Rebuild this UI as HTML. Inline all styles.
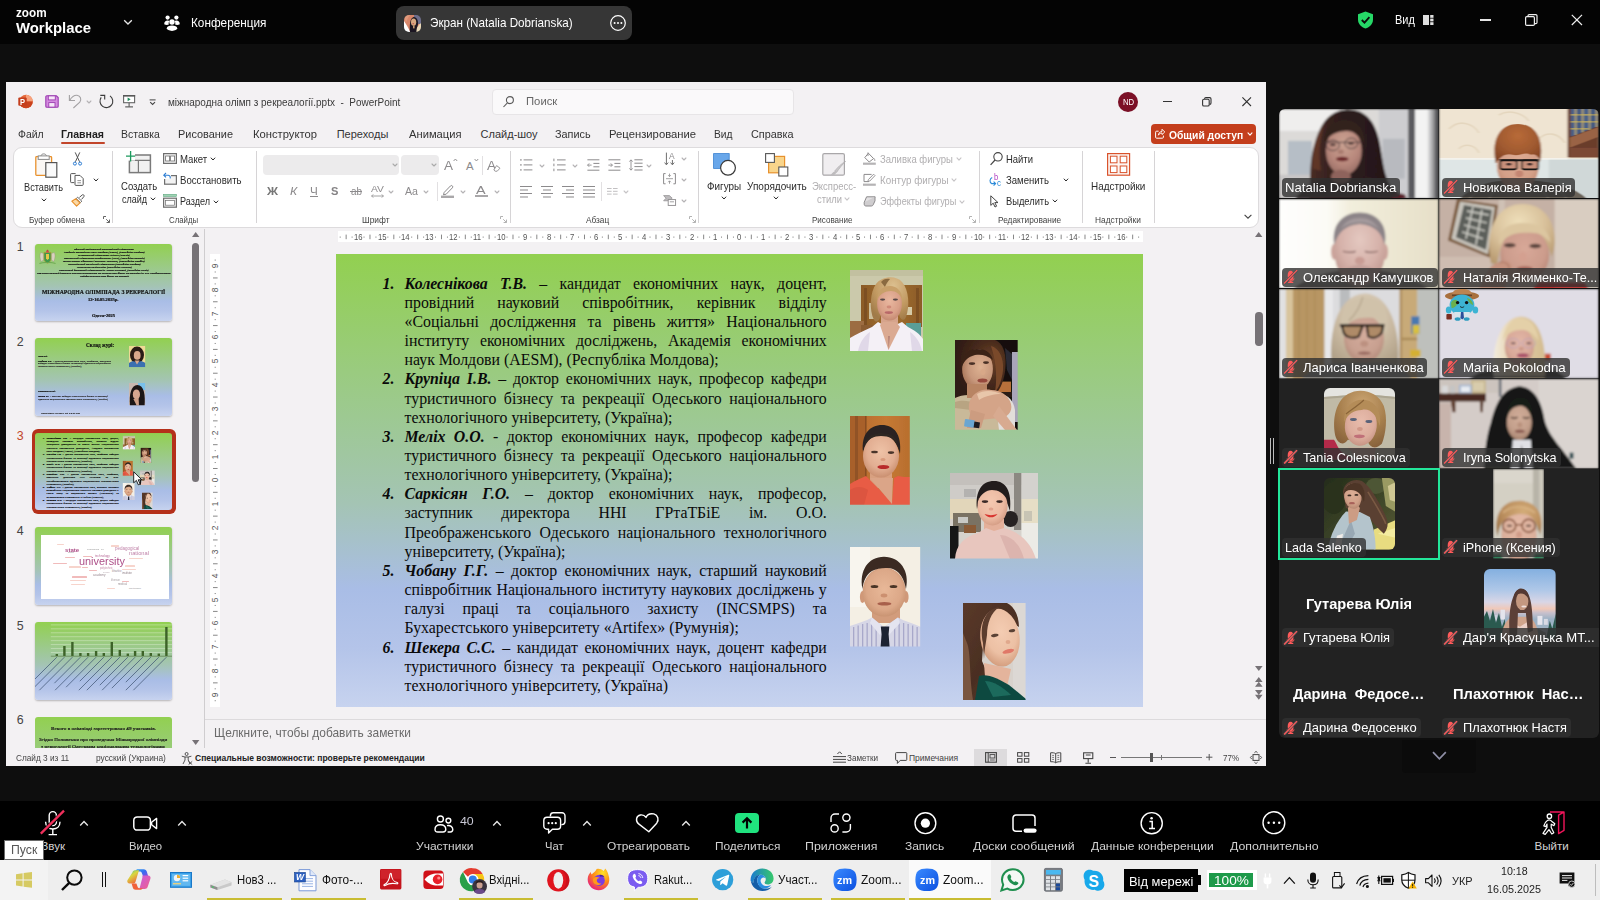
<!DOCTYPE html>
<html lang="ru">
<head>
<meta charset="utf-8">
<title>Zoom Workplace</title>
<style>
*{box-sizing:border-box;margin:0;padding:0}
html,body{width:1600px;height:900px;overflow:hidden;background:#0e0e0e;font-family:"Liberation Sans","DejaVu Sans",sans-serif;}
body{position:relative;color:#fff}
.a{position:absolute;display:block}
.t{position:absolute;display:block;white-space:pre;line-height:1;transform-origin:0 50%}
svg{overflow:visible}
</style>
</head>
<body>
<!-- sec_ztop -->
<div class="a" style="left:0px;top:0px;width:1600px;height:44px;background:#040404;"></div>
<span class="t" style="left:16.00px;top:7px;font-size:12px;font-weight:700;transform:scaleX(0.9767);">zoom</span>
<span class="t" style="left:16.00px;top:20px;font-size:15px;font-weight:700;transform:scaleX(0.9922);">Workplace</span>
<svg class="a" style="left:122px;top:18px;" width="12" height="9" viewBox="0 0 12 9"><polyline points="2.2,2.2 6,6 9.8,2.2" fill="none" stroke="#e8e8e8" stroke-width="1.3"/></svg>
<svg class="a" style="left:164px;top:15px;" width="16" height="16" viewBox="0 0 16 16"><g fill="#fff"><circle cx="3.6" cy="2.6" r="2.1"/><circle cx="12.4" cy="2.6" r="2.1"/><path d="M0.2 9.2c0-2.2 1.4-3.6 3.4-3.6 0.9 0 1.5 0.3 1.9 0.7-0.9 0.8-1.1 2.2-0.6 3.3-1.6 0.6-3.2 0.5-4.7-0.4zM15.8 9.2c0-2.2-1.4-3.6-3.4-3.6-0.9 0-1.5 0.3-1.9 0.7 0.9 0.8 1.1 2.2 0.6 3.3 1.6 0.6 3.2 0.5 4.7-0.4z"/><circle cx="8" cy="7" r="2.7"/><ellipse cx="8" cy="13.2" rx="5.2" ry="2.7"/></g></svg>
<span class="t" style="left:190.50px;top:16px;font-size:13.6px;transform:scaleX(0.8664);">Конференция</span>
<div class="a" style="left:396px;top:6px;width:236px;height:34px;background:#363636;border-radius:8px;"></div>
<svg class="a" style="left:404px;top:14.8px;border-radius:5px;overflow:hidden" width="17.2" height="17.2" viewBox="0 0 17.2 17.2"><defs><filter id="pav"><feGaussianBlur stdDeviation="0.5"/></filter></defs><g filter="url(#pav)"><rect width="17.2" height="17.2" fill="#d8866a"/><path d="M0 6C2 9 4 12 6.4 17.2H0Z" fill="#ffffff"/><path d="M0 0H6C4 3 2.600 5 2 8Z" fill="#e09a7c"/><rect x="10" y="0" width="7.200" height="9" fill="#6e6e8c"/><path d="M17.200 8C14 10 12 14 11 17.200H17.200Z" fill="#e8d8b8"/><path d="M6 17.200C5.400 10 6 3 9.600 2 13.600 2 15 8 13.600 11 12.600 13 12.600 15 12.400 17.200Z" fill="#1a1820"/><ellipse cx="9.600" cy="7.200" rx="2.600" ry="3.600" fill="#d8a880"/><rect x="9" y="10.400" width="1.600" height="3" fill="#c49870"/><ellipse cx="9.200" cy="8.700" rx="0.800" ry="0.450" fill="#b82a3a"/></g></svg>
<span class="t" style="left:429.80px;top:16px;font-size:13.4px;transform:scaleX(0.8719);">Экран (Natalia Dobrianska)</span>
<svg class="a" style="left:610px;top:15px;" width="16" height="16" viewBox="0 0 16 16"><circle cx="8" cy="8" r="7.3" fill="none" stroke="#fff" stroke-width="1.2"/><circle cx="4.6" cy="8" r="1" fill="#fff"/><circle cx="8" cy="8" r="1" fill="#fff"/><circle cx="11.4" cy="8" r="1" fill="#fff"/></svg>
<svg class="a" style="left:1357px;top:11px;" width="17" height="18" viewBox="0 0 17 18"><path d="M8.5 0.4 L16 3.2 V8.5 C16 13 12.6 16.3 8.5 17.6 C4.4 16.3 1 13 1 8.5 V3.2 Z" fill="#26d867"/><polyline points="4.8,9 7.5,11.6 12.4,6.2" fill="none" stroke="#0b0b0b" stroke-width="1.8"/></svg>
<span class="t" style="left:1395.20px;top:13px;font-size:13px;transform:scaleX(0.8419);">Вид</span>
<svg class="a" style="left:1423px;top:15px;" width="11" height="10" viewBox="0 0 11 10"><g fill="#e0e0e0"><rect x="0" y="0" width="6" height="10"/><rect x="7.2" y="0" width="3.3" height="2.8"/><rect x="7.2" y="3.6" width="3.3" height="2.8"/><rect x="7.2" y="7.2" width="3.3" height="2.8"/></g></svg>
<div class="a" style="left:1480px;top:19.4px;width:10.5px;height:1.2px;background:#e6e6e6;"></div>
<svg class="a" style="left:1525px;top:14px;" width="13" height="12" viewBox="0 0 13 12"><rect x="0.6" y="2.6" width="8.8" height="8.8" rx="1.2" fill="none" stroke="#eee" stroke-width="1.2"/><path d="M3 2.6V1.8a1.2 1.2 0 0 1 1.2-1.2h6.6a1.2 1.2 0 0 1 1.2 1.2v6.6a1.2 1.2 0 0 1-1.2 1.2h-1.2" fill="none" stroke="#eee" stroke-width="1.2"/></svg>
<svg class="a" style="left:1571px;top:14px;" width="12" height="12" viewBox="0 0 12 12"><path d="M0.8 0.8L11 11M11 0.8L0.8 11" stroke="#eee" stroke-width="1.2" fill="none"/></svg>
<!-- sec_ppt -->
<div class="a" style="left:6px;top:82px;width:1260px;height:684px;background:#f3f1f3;"></div>
<svg class="a" style="left:18px;top:94px;" width="15" height="15" viewBox="0 0 15 15"><circle cx="8" cy="7.5" r="6.8" fill="#e56a3c"/><path d="M8 0.7A6.8 6.8 0 0 1 14.8 7.5H8Z" fill="#f7a27c"/><path d="M1.2 7.5H14.8A6.8 6.8 0 0 1 8 14.3 6.8 6.8 0 0 1 1.2 7.5Z" fill="#c9421d"/><rect x="0.3" y="3.4" width="8.4" height="8.4" rx="1" fill="#c43e1c"/></svg><span class="t" style="left:20.30px;top:99px;font-size:8.2px;font-weight:700;color:#fff;transform:scaleX(0.9142);">P</span>
<svg class="a" style="left:45px;top:95px;" width="14" height="13" viewBox="0 0 14 13"><path d="M0.8 1.8a1 1 0 0 1 1-1h9.6l1.8 1.8v8.6a1 1 0 0 1-1 1H1.8a1 1 0 0 1-1-1z" fill="#d58ae0" stroke="#9b3eb0" stroke-width="1.1"/><rect x="3.3" y="0.9" width="7" height="4" fill="#f6e7f8" stroke="#9b3eb0" stroke-width="0.9"/><rect x="3.8" y="7.6" width="6.2" height="4.5" fill="#f6e7f8" stroke="#9b3eb0" stroke-width="0.9"/></svg>
<svg class="a" style="left:68px;top:94px;" width="15" height="15" viewBox="0 0 15 15"><path d="M1.4 0.9V6.5H7" fill="none" stroke="#a3a1a3" stroke-width="1.1"/><path d="M1.8 6.1C3.8 2.8 6.6 1 9 1.2 12.5 1.6 13.8 5.4 11.8 8.200L5.400 14" fill="none" stroke="#a3a1a3" stroke-width="1.1"/></svg>
<svg class="a" style="left:84.60px;top:98.60px" width="8" height="6" viewBox="0 0 8 6"><polyline points="2.1,2 4,4 5.9,2" fill="none" stroke="#b5b3b5" stroke-width="1.1" stroke-linecap="round" stroke-linejoin="round"/></svg>
<svg class="a" style="left:99px;top:94px;" width="15" height="15" viewBox="0 0 15 15"><path d="M11 1.900A6.400 6.400 0 1 1 2.200 3.400" fill="none" stroke="#3b3b3b" stroke-width="1.1"/><path d="M1.300 1.400H5.700V5.600" fill="none" stroke="#3b3b3b" stroke-width="1.1"/></svg>
<svg class="a" style="left:123px;top:95px;" width="13" height="13" viewBox="0 0 13 13"><rect x="0.600" y="0.900" width="11" height="6.800" fill="#fff" stroke="#666" stroke-width="1.100"/><path d="M0 0.700H12.200" stroke="#555" stroke-width="1.300"/><path d="M4.600 2.400L7.600 4.300 4.600 6.200Z" fill="#1e8a5a"/><path d="M6.100 7.700V11.600M2.200 11.800H10" stroke="#666" stroke-width="1.200" fill="none"/></svg>
<svg class="a" style="left:148.5px;top:98px;" width="8" height="8" viewBox="0 0 8 8"><path d="M0.600 1.900H6.600" stroke="#444" stroke-width="1"/><polyline points="1.200,4.200 3.600,6.400 6,4.200" fill="none" stroke="#444" stroke-width="1.100"/></svg>
<span class="t" style="left:168.00px;top:97px;font-size:11.5px;color:#3a3a3a;transform:scaleX(0.8673);">міжнародна олімп з рекреалогії.pptx  -  PowerPoint</span>
<div class="a" style="left:492px;top:88.5px;width:301.5px;height:26px;background:#faf9fa;border:1px solid #e7e5e7;border-radius:4px;"></div>
<svg class="a" style="left:503px;top:96px;" width="11" height="11.5" viewBox="0 0 11 11.5"><circle cx="6.9" cy="4.1" r="3.5" fill="none" stroke="#5a5a5a" stroke-width="1.1"/><path d="M4.4 6.8L0.5 11" stroke="#5a5a5a" stroke-width="1.1"/></svg>
<span class="t" style="left:526.30px;top:96px;font-size:11.8px;color:#666;transform:scaleX(0.9573);">Поиск</span>
<div class="a" style="left:1118.2px;top:91.8px;width:19.8px;height:19.8px;background:#7b1026;border-radius:50%;"></div>
<span class="t" style="left:1122.60px;top:98px;font-size:8.6px;color:#fff;transform:scaleX(0.9017);">ND</span>
<div class="a" style="left:1163.2px;top:100.6px;width:9px;height:1.1px;background:#333;"></div>
<svg class="a" style="left:1202px;top:97px;" width="10" height="10" viewBox="0 0 10 10"><rect x="0.6" y="2.2" width="6.6" height="6.8" rx="1.3" fill="none" stroke="#333" stroke-width="1.1"/><path d="M2.6 2V1.9A1.3 1.3 0 0 1 3.9 0.6H7.7A1.3 1.3 0 0 1 9 1.9V6.1A1.3 1.3 0 0 1 7.7 7.4" fill="none" stroke="#333" stroke-width="1.1"/></svg>
<svg class="a" style="left:1241.5px;top:97.2px;" width="9.5" height="9.5" viewBox="0 0 9.5 9.5"><path d="M0.4 0.4L9 9M9 0.4L0.4 9" stroke="#333" stroke-width="1.1"/></svg>
<span class="t" style="left:18.40px;top:129px;font-size:11px;color:#333;transform:scaleX(0.9466);">Файл</span>
<span class="t" style="left:61.20px;top:129px;font-size:11px;font-weight:700;color:#1f1f1f;transform:scaleX(0.9612);">Главная</span>
<span class="t" style="left:120.70px;top:129px;font-size:11px;color:#333;transform:scaleX(0.9515);">Вставка</span>
<span class="t" style="left:178.00px;top:129px;font-size:11px;color:#333;transform:scaleX(0.9928);">Рисование</span>
<span class="t" style="left:252.80px;top:129px;font-size:11px;color:#333;transform:scaleX(1.0204);">Конструктор</span>
<span class="t" style="left:336.70px;top:129px;font-size:11px;color:#333;">Переходы</span>
<span class="t" style="left:408.50px;top:129px;font-size:11px;color:#333;transform:scaleX(1.0167);">Анимация</span>
<span class="t" style="left:480.60px;top:129px;font-size:11px;color:#333;">Слайд-шоу</span>
<span class="t" style="left:555.40px;top:129px;font-size:11px;color:#333;transform:scaleX(0.9863);">Запись</span>
<span class="t" style="left:609.20px;top:129px;font-size:11px;color:#333;transform:scaleX(1.0254);">Рецензирование</span>
<span class="t" style="left:714.40px;top:129px;font-size:11px;color:#333;transform:scaleX(0.9296);">Вид</span>
<span class="t" style="left:751.00px;top:129px;font-size:11px;color:#333;transform:scaleX(0.9872);">Справка</span>
<div class="a" style="left:61.2px;top:142px;width:43.6px;height:2.2px;background:#c2452a;border-radius:1px;"></div>
<div class="a" style="left:1151.3px;top:124px;width:105px;height:19.8px;background:#c43e1c;border-radius:4px;"></div>
<svg class="a" style="left:1155px;top:128px;" width="10" height="11" viewBox="0 0 10 11"><path d="M3.6 3.2H1.6A1 1 0 0 0 0.6 4.2V9.2A1 1 0 0 0 1.6 10.2H7.4A1 1 0 0 0 8.4 9.2V7.6" fill="none" stroke="#fff" stroke-width="1"/><path d="M3.4 7.2C3.6 4.8 5 3.6 7 3.5V1.2L9.8 4 7 6.6V5C5.4 5 4.2 5.6 3.4 7.2Z" fill="none" stroke="#fff" stroke-width="0.9" stroke-linejoin="round"/></svg>
<span class="t" style="left:1168.50px;top:129px;font-size:11.6px;font-weight:700;color:#fff;transform:scaleX(0.8884);">Общий доступ</span>
<svg class="a" style="left:1246.30px;top:131.20px" width="8" height="6" viewBox="0 0 8 6"><polyline points="2,1.9 4,4.1 6,1.9" fill="none" stroke="#fff" stroke-width="1.1" stroke-linecap="round" stroke-linejoin="round"/></svg>
<!-- sec_ribbon -->
<div class="a" style="left:13px;top:146.5px;width:1246px;height:81px;background:#ffffff;border:1px solid #dddbdd;border-radius:9px;"></div>
<svg class="a" style="left:35px;top:153px;" width="23" height="25" viewBox="0 0 23 25"><rect x="1.4" y="4" width="14.8" height="18" fill="#faf7f4"/><path d="M3.6 3.600H1.600A0.800 0.800 0 0 0 0.800 4.400V21.600A0.800 0.800 0 0 0 1.600 22.400H10.600" fill="none" stroke="#e8912d" stroke-width="1.300"/><path d="M13.800 3.600H15.800A0.800 0.800 0 0 1 16.600 4.400V9.400" fill="none" stroke="#e8912d" stroke-width="1.300"/><path d="M6 3C6 0.200 11.400 0.200 11.400 3" fill="#fff" stroke="#8a8a8a" stroke-width="1"/><rect x="3.200" y="2.900" width="11" height="3.500" fill="#fff" stroke="#8a8a8a" stroke-width="1"/><rect x="10.800" y="9.600" width="11" height="14.600" fill="#fafafa" stroke="#555" stroke-width="1.200"/></svg>
<span class="t" style="left:24.00px;top:183px;font-size:10.3px;color:#2b2b2b;transform:scaleX(0.8933);">Вставить</span>
<svg class="a" style="left:39.60px;top:196.60px" width="8" height="6" viewBox="0 0 8 6"><polyline points="2.1,2.0 4,4.0 5.9,2.0" fill="none" stroke="#2b2b2b" stroke-width="1.0" stroke-linecap="round" stroke-linejoin="round"/></svg>
<svg class="a" style="left:72.5px;top:152px;" width="9" height="14" viewBox="0 0 9 14"><path d="M2.2 0.4L6.6 9.8M6.8 0.4L2.4 9.8" stroke="#555" stroke-width="1" fill="none"/><circle cx="1.9" cy="11.6" r="1.5" fill="none" stroke="#2b7cd3" stroke-width="1"/><circle cx="7.1" cy="11.6" r="1.5" fill="none" stroke="#2b7cd3" stroke-width="1"/></svg>
<svg class="a" style="left:70px;top:173px;" width="14" height="13" viewBox="0 0 14 13"><path d="M4.2 9.6H1.4A0.8 0.8 0 0 1 0.6 8.8V1.4A0.8 0.8 0 0 1 1.4 0.6H5.6" fill="none" stroke="#555" stroke-width="1"/><path d="M5 2.4H10L13.2 5.6V11.6A0.8 0.8 0 0 1 12.4 12.4H5.8A0.8 0.8 0 0 1 5 11.6Z" fill="#fff" stroke="#555" stroke-width="1"/><path d="M7.4 7.6H11M7.4 9.8H11" stroke="#777" stroke-width="0.8"/></svg>
<svg class="a" style="left:92.40px;top:177.00px" width="8" height="6" viewBox="0 0 8 6"><polyline points="2.1,2.0 4,4.0 5.9,2.0" fill="none" stroke="#2b2b2b" stroke-width="1.0" stroke-linecap="round" stroke-linejoin="round"/></svg>
<svg class="a" style="left:70.5px;top:193.5px;" width="14" height="13" viewBox="0 0 14 13"><path d="M8.4 3.4L11.4 0.8A1.2 1.2 0 0 1 13 2.4L10.6 5.4" fill="#fff" stroke="#555" stroke-width="1"/><path d="M6.6 3.2L10.8 7.2 9.4 8.6 5.2 4.6Z" fill="#fff" stroke="#555" stroke-width="0.9"/><path d="M4.8 4.8L0.8 7.2 5.6 12.2 9 8.8Z" fill="#fbd9a5" stroke="#e8912d" stroke-width="1.1" stroke-linejoin="round"/></svg>
<span class="t" style="left:29.00px;top:216px;font-size:9px;color:#444;transform:scaleX(0.9124);">Буфер обмена</span>
<svg class="a" style="left:102.7px;top:216px;" width="7" height="7" viewBox="0 0 7 7"><path d="M0.5 3V0.5H3M3.2 3.2L6.3 6.3M6.5 3.6V6.5H3.6" fill="none" stroke="#555" stroke-width="0.9"/></svg>
<div class="a" style="left:112px;top:151px;width:1px;height:72px;background:#d6d4d6;"></div>
<svg class="a" style="left:126px;top:151px;" width="26" height="24" viewBox="0 0 26 24"><rect x="3.4" y="4" width="21" height="17.6" fill="#f1f1f1" stroke="#7a7a7a" stroke-width="1.5"/><path d="M3.4 9.4H24.4M12.4 9.4V21.6" stroke="#7a7a7a" stroke-width="1.2" fill="none"/><rect x="0" y="0" width="9" height="9.6" fill="#fff"/><path d="M4.6 0V10.4M0 5.2H9.2" stroke="#1e9a5e" stroke-width="1.3"/></svg>
<span class="t" style="left:120.60px;top:182px;font-size:10.3px;color:#2b2b2b;transform:scaleX(0.9248);">Создать</span>
<span class="t" style="left:121.90px;top:195px;font-size:10.3px;color:#2b2b2b;transform:scaleX(0.8760);">слайд</span>
<svg class="a" style="left:149.40px;top:196.00px" width="8" height="6" viewBox="0 0 8 6"><polyline points="2.1,2.0 4,4.0 5.9,2.0" fill="none" stroke="#2b2b2b" stroke-width="1.0" stroke-linecap="round" stroke-linejoin="round"/></svg>
<svg class="a" style="left:163px;top:153px;" width="14" height="11" viewBox="0 0 14 11"><rect x="0.6" y="0.6" width="12.8" height="9.8" fill="#f3f3f3" stroke="#6e6e6e" stroke-width="1.2"/><rect x="2.6" y="3" width="4" height="5" fill="#fff" stroke="#6e6e6e" stroke-width="0.8"/><rect x="7.6" y="3" width="4" height="5" fill="#fff" stroke="#6e6e6e" stroke-width="0.8"/></svg>
<span class="t" style="left:180.00px;top:155px;font-size:10.3px;color:#2b2b2b;transform:scaleX(0.9331);">Макет</span>
<svg class="a" style="left:209.20px;top:156.40px" width="8" height="6" viewBox="0 0 8 6"><polyline points="2.1,2.0 4,4.0 5.9,2.0" fill="none" stroke="#2b2b2b" stroke-width="1.0" stroke-linecap="round" stroke-linejoin="round"/></svg>
<svg class="a" style="left:163px;top:172px;" width="14" height="13" viewBox="0 0 14 13"><rect x="1.6" y="3.6" width="11.8" height="8.6" fill="#f3f3f3" stroke="#6e6e6e" stroke-width="1.2"/><rect x="0" y="0" width="8" height="7" fill="#fff"/><path d="M1 3.2H5.2A2 2 0 0 1 7.2 5.2V6.6" fill="none" stroke="#2b7cd3" stroke-width="1.1"/><path d="M3 1L0.8 3.2 3 5.4" fill="none" stroke="#2b7cd3" stroke-width="1.1"/></svg>
<span class="t" style="left:180.40px;top:176px;font-size:10.3px;color:#2b2b2b;transform:scaleX(0.9340);">Восстановить</span>
<svg class="a" style="left:163px;top:194px;" width="14" height="14" viewBox="0 0 14 14"><rect x="0.6" y="0.4" width="12.8" height="2" fill="#9fd3b4" stroke="#5aa67c" stroke-width="0.6"/><rect x="0.6" y="4.2" width="12.8" height="9" fill="#f3f3f3" stroke="#6e6e6e" stroke-width="1.2"/><rect x="2.6" y="6.6" width="8.8" height="4.6" fill="#fff" stroke="#6e6e6e" stroke-width="0.7"/></svg>
<span class="t" style="left:180.00px;top:197px;font-size:10.3px;color:#2b2b2b;transform:scaleX(0.8812);">Раздел</span>
<svg class="a" style="left:212.20px;top:198.60px" width="8" height="6" viewBox="0 0 8 6"><polyline points="2.1,2.0 4,4.0 5.9,2.0" fill="none" stroke="#2b2b2b" stroke-width="1.0" stroke-linecap="round" stroke-linejoin="round"/></svg>
<span class="t" style="left:169.00px;top:216px;font-size:9px;color:#444;transform:scaleX(0.8715);">Слайды</span>
<div class="a" style="left:255.5px;top:151px;width:1px;height:72px;background:#d6d4d6;"></div>
<div class="a" style="left:262.7px;top:155px;width:136.4px;height:19.7px;background:#ecebec;border-radius:4px;"></div>
<svg class="a" style="left:390.60px;top:162.40px" width="8" height="6" viewBox="0 0 8 6"><polyline points="2,2 4,4 6,2" fill="none" stroke="#aaa" stroke-width="1.1" stroke-linecap="round" stroke-linejoin="round"/></svg>
<div class="a" style="left:401px;top:155px;width:37.5px;height:19.7px;background:#ecebec;border-radius:4px;"></div>
<svg class="a" style="left:429.60px;top:162.40px" width="8" height="6" viewBox="0 0 8 6"><polyline points="2,2 4,4 6,2" fill="none" stroke="#aaa" stroke-width="1.1" stroke-linecap="round" stroke-linejoin="round"/></svg>
<span class="t" style="left:444.00px;top:159px;font-size:13.6px;color:#8c8a8c;transform:scaleX(0.9922);">A</span>
<svg class="a" style="left:453px;top:157.5px;" width="5" height="4" viewBox="0 0 5 4"><polyline points="0.6,3 2.4,1 4.2,3" fill="none" stroke="#8c8a8c" stroke-width="0.9"/></svg>
<span class="t" style="left:466.00px;top:161px;font-size:11.4px;color:#8c8a8c;">A</span>
<svg class="a" style="left:473.5px;top:158px;" width="5" height="4" viewBox="0 0 5 4"><polyline points="0.6,1 2.4,3 4.2,1" fill="none" stroke="#8c8a8c" stroke-width="0.9"/></svg>
<div class="a" style="left:482px;top:155.5px;width:1px;height:19.2px;background:#e2e0e2;"></div>
<span class="t" style="left:487.00px;top:159px;font-size:13.6px;color:#8c8a8c;transform:scaleX(0.9922);">A</span>
<svg class="a" style="left:493px;top:165px;" width="8" height="7" viewBox="0 0 8 7"><path d="M3.6 0.6L7 3.2 4.2 6.2H2.2L0.8 5Z" fill="#fff" stroke="#8c8a8c" stroke-width="0.9"/></svg>
<span class="t" style="left:267.00px;top:186px;font-size:11.4px;font-weight:700;color:#777;transform:scaleX(1.0676);">Ж</span>
<span class="t" style="left:289.80px;top:186px;font-size:11.4px;font-style:italic;color:#8c8a8c;transform:scaleX(1.0716);">К</span>
<span class="t" style="left:310.40px;top:186px;font-size:11.4px;color:#8c8a8c;transform:scaleX(1.0266);">Ч</span>
<div class="a" style="left:310.4px;top:195.8px;width:7.8px;height:1px;background:#8c8a8c;"></div>
<span class="t" style="left:331.20px;top:186px;font-size:11.8px;font-weight:700;color:#858385;transform:scaleX(0.9402);">S</span>
<span class="t" style="left:350.60px;top:186px;font-size:10.6px;color:#8c8a8c;transform:scaleX(0.9330);">ab</span>
<div class="a" style="left:350px;top:191.4px;width:12.4px;height:1px;background:#8c8a8c;"></div>
<span class="t" style="left:371.00px;top:184px;font-size:9.6px;color:#8c8a8c;transform:scaleX(1.0749);">AV</span>
<svg class="a" style="left:371px;top:193.5px;" width="13" height="4" viewBox="0 0 13 4"><path d="M0.6 2H12.4M2.2 0.4L0.6 2 2.2 3.6M10.8 0.4L12.4 2 10.8 3.6" fill="none" stroke="#8c8a8c" stroke-width="0.8"/></svg>
<svg class="a" style="left:387.40px;top:189.00px" width="8" height="6" viewBox="0 0 8 6"><polyline points="2.1,2 4,4 5.9,2" fill="none" stroke="#b5b3b5" stroke-width="1.1" stroke-linecap="round" stroke-linejoin="round"/></svg>
<span class="t" style="left:405.20px;top:186px;font-size:11px;color:#8c8a8c;transform:scaleX(0.9662);">Aa</span>
<svg class="a" style="left:421.80px;top:189.00px" width="8" height="6" viewBox="0 0 8 6"><polyline points="2.1,2 4,4 5.9,2" fill="none" stroke="#b5b3b5" stroke-width="1.1" stroke-linecap="round" stroke-linejoin="round"/></svg>
<div class="a" style="left:436.5px;top:182.4px;width:1px;height:18.6px;background:#e2e0e2;"></div>
<svg class="a" style="left:441px;top:184.5px;" width="14" height="13" viewBox="0 0 14 13"><path d="M3.2 7.4L9.4 1A1.3 1.3 0 0 1 11.4 2.8L5.2 9.2 2.4 9.8Z" fill="none" stroke="#8c8a8c" stroke-width="1"/><rect x="0" y="10.6" width="13" height="2.4" fill="#a9a7a9"/></svg>
<svg class="a" style="left:458.90px;top:189.00px" width="8" height="6" viewBox="0 0 8 6"><polyline points="2.1,2 4,4 5.9,2" fill="none" stroke="#b5b3b5" stroke-width="1.1" stroke-linecap="round" stroke-linejoin="round"/></svg>
<span class="t" style="left:476.40px;top:185px;font-size:11.4px;color:#8c8a8c;transform:scaleX(1.2625);">A</span>
<div class="a" style="left:475px;top:195.1px;width:12.8px;height:2.3px;background:#a9a7a9;"></div>
<svg class="a" style="left:492.70px;top:189.00px" width="8" height="6" viewBox="0 0 8 6"><polyline points="2.1,2 4,4 5.9,2" fill="none" stroke="#b5b3b5" stroke-width="1.1" stroke-linecap="round" stroke-linejoin="round"/></svg>
<span class="t" style="left:361.80px;top:216px;font-size:9px;color:#444;transform:scaleX(0.9321);">Шрифт</span>
<svg class="a" style="left:500.2px;top:216px;" width="7" height="7" viewBox="0 0 7 7"><path d="M0.5 3V0.5H3M3.2 3.2L6.3 6.3M6.5 3.6V6.5H3.6" fill="none" stroke="#aaa" stroke-width="0.9"/></svg>
<div class="a" style="left:509.5px;top:151px;width:1px;height:72px;background:#d6d4d6;"></div>
<svg class="a" style="left:520px;top:159px;" width="13" height="12" viewBox="0 0 13 12"><rect x="0.2" y="0.2" width="1.4" height="1.4" fill="#8c8a8c"/><path d="M3.6 0.8999999999999999H12.4" stroke="#8c8a8c" stroke-width="1"/><rect x="0.2" y="5.2" width="1.4" height="1.4" fill="#8c8a8c"/><path d="M3.6 5.9H12.4" stroke="#8c8a8c" stroke-width="1"/><rect x="0.2" y="10.2" width="1.4" height="1.4" fill="#8c8a8c"/><path d="M3.6 10.899999999999999H12.4" stroke="#8c8a8c" stroke-width="1"/></svg>
<svg class="a" style="left:537.60px;top:162.60px" width="8" height="6" viewBox="0 0 8 6"><polyline points="2.1,2 4,4 5.9,2" fill="none" stroke="#b5b3b5" stroke-width="1.1" stroke-linecap="round" stroke-linejoin="round"/></svg>
<svg class="a" style="left:553px;top:159px;" width="13" height="12" viewBox="0 0 13 12"><rect x="0.4" y="-0.39999999999999997" width="1" height="2.6" fill="#8c8a8c"/><path d="M4 0.8999999999999999H12.6" stroke="#8c8a8c" stroke-width="1"/><rect x="0.4" y="4.6000000000000005" width="1" height="2.6" fill="#8c8a8c"/><path d="M4 5.9H12.6" stroke="#8c8a8c" stroke-width="1"/><rect x="0.4" y="9.6" width="1" height="2.6" fill="#8c8a8c"/><path d="M4 10.899999999999999H12.6" stroke="#8c8a8c" stroke-width="1"/></svg>
<svg class="a" style="left:571.20px;top:162.60px" width="8" height="6" viewBox="0 0 8 6"><polyline points="2.1,2 4,4 5.9,2" fill="none" stroke="#b5b3b5" stroke-width="1.1" stroke-linecap="round" stroke-linejoin="round"/></svg>
<svg class="a" style="left:587px;top:159px;" width="13" height="12" viewBox="0 0 13 12"><path d="M0.4 0.8H12.4M6.4 4.4H12.4M6.4 7.8H12.4M0.4 11.2H12.4" stroke="#8c8a8c" stroke-width="1"/><path d="M4.6 6.1H0.6M2.2 4.4L0.6 6.1 2.2 7.8" fill="none" stroke="#8c8a8c" stroke-width="0.9"/></svg>
<svg class="a" style="left:608px;top:159px;" width="13" height="12" viewBox="0 0 13 12"><path d="M0.4 0.8H12.4M6.4 4.4H12.4M6.4 7.8H12.4M0.4 11.2H12.4" stroke="#8c8a8c" stroke-width="1"/><path d="M0.4 6.1H4.4M2.8 4.4L4.4 6.1 2.8 7.8" fill="none" stroke="#8c8a8c" stroke-width="0.9"/></svg>
<svg class="a" style="left:628.5px;top:159px;" width="14" height="12" viewBox="0 0 14 12"><path d="M5.4 0.8H13.6M5.4 4.2H13.6M5.4 7.6H13.6M5.4 11H13.6" stroke="#8c8a8c" stroke-width="1"/><path d="M2 1V11M0.4 2.6L2 0.8 3.6 2.6M0.4 9.4L2 11.2 3.6 9.4" fill="none" stroke="#8c8a8c" stroke-width="0.9"/></svg>
<svg class="a" style="left:645.30px;top:162.60px" width="8" height="6" viewBox="0 0 8 6"><polyline points="2.1,2 4,4 5.9,2" fill="none" stroke="#b5b3b5" stroke-width="1.1" stroke-linecap="round" stroke-linejoin="round"/></svg>
<svg class="a" style="left:664px;top:151.5px;" width="12" height="14" viewBox="0 0 12 14"><path d="M2.4 0.6V12.6M0.6 10.6L2.4 12.8 4.2 10.6M8.4 8V12.6M6.6 10.6L8.4 12.8 10.2 10.6" fill="none" stroke="#6e6e6e" stroke-width="1"/></svg><span class="t" style="left:669.40px;top:152px;font-size:8.6px;color:#8c8a8c;transform:scaleX(0.9763);">A</span>
<svg class="a" style="left:679.70px;top:155.80px" width="8" height="6" viewBox="0 0 8 6"><polyline points="2.1,2 4,4 5.9,2" fill="none" stroke="#b5b3b5" stroke-width="1.1" stroke-linecap="round" stroke-linejoin="round"/></svg>
<svg class="a" style="left:663px;top:173.4px;" width="13" height="11.5" viewBox="0 0 13 11.5"><path d="M2.6 0.6H0.6V10.8H2.6M10.4 0.6H12.4V10.8H10.4" fill="none" stroke="#8c8a8c" stroke-width="1"/><path d="M3 5.7H10M6.5 0.6V3.4M5.2 2.2L6.5 3.6 7.8 2.2M6.5 10.8V8M5.2 9.2L6.5 7.8 7.8 9.2" fill="none" stroke="#8c8a8c" stroke-width="0.8"/></svg>
<svg class="a" style="left:679.70px;top:176.80px" width="8" height="6" viewBox="0 0 8 6"><polyline points="2.1,2 4,4 5.9,2" fill="none" stroke="#b5b3b5" stroke-width="1.1" stroke-linecap="round" stroke-linejoin="round"/></svg>
<svg class="a" style="left:663px;top:195.4px;" width="13" height="11" viewBox="0 0 13 11"><path d="M0.6 0.6H6.4L9.2 3.2 6.4 5.8H0.6L3 3.2Z" fill="#bdbbbd" stroke="#8c8a8c" stroke-width="0.7"/><rect x="5.2" y="4.6" width="7.4" height="5.8" fill="#fff" stroke="#8c8a8c" stroke-width="0.9"/><path d="M6.8 6.8H11" stroke="#8c8a8c" stroke-width="0.8"/></svg>
<svg class="a" style="left:679.70px;top:198.20px" width="8" height="6" viewBox="0 0 8 6"><polyline points="2.1,2 4,4 5.9,2" fill="none" stroke="#b5b3b5" stroke-width="1.1" stroke-linecap="round" stroke-linejoin="round"/></svg>
<svg class="a" style="left:520.4px;top:186px;" width="12.4" height="12" viewBox="0 0 12.4 12"><path d="M0 0.5H12" stroke="#8c8a8c" stroke-width="1"/><path d="M0 4.0H8" stroke="#8c8a8c" stroke-width="1"/><path d="M0 7.5H12" stroke="#8c8a8c" stroke-width="1"/><path d="M0 11.0H8" stroke="#8c8a8c" stroke-width="1"/></svg>
<svg class="a" style="left:541px;top:186px;" width="12.4" height="12" viewBox="0 0 12.4 12"><path d="M0 0.5H12" stroke="#8c8a8c" stroke-width="1"/><path d="M2 4.0H10" stroke="#8c8a8c" stroke-width="1"/><path d="M0 7.5H12" stroke="#8c8a8c" stroke-width="1"/><path d="M2 11.0H10" stroke="#8c8a8c" stroke-width="1"/></svg>
<svg class="a" style="left:562.2px;top:186px;" width="12.4" height="12" viewBox="0 0 12.4 12"><path d="M0 0.5H12" stroke="#8c8a8c" stroke-width="1"/><path d="M4 4.0H12" stroke="#8c8a8c" stroke-width="1"/><path d="M0 7.5H12" stroke="#8c8a8c" stroke-width="1"/><path d="M4 11.0H12" stroke="#8c8a8c" stroke-width="1"/></svg>
<svg class="a" style="left:583.3px;top:186px;" width="12.4" height="12" viewBox="0 0 12.4 12"><path d="M0 0.5H12" stroke="#8c8a8c" stroke-width="1"/><path d="M0 4.0H12" stroke="#8c8a8c" stroke-width="1"/><path d="M0 7.5H12" stroke="#8c8a8c" stroke-width="1"/><path d="M0 11.0H12" stroke="#8c8a8c" stroke-width="1"/></svg>
<div class="a" style="left:600.5px;top:182.4px;width:1px;height:18.6px;background:#e2e0e2;"></div>
<svg class="a" style="left:607px;top:188px;" width="11" height="7" viewBox="0 0 11 7"><path d="M0 0.5H4.6M6 0.5H10.6" stroke="#c2c0c2" stroke-width="1"/><path d="M0 3.3H4.6M6 3.3H10.6" stroke="#c2c0c2" stroke-width="1"/><path d="M0 6.1H4.6M6 6.1H10.6" stroke="#c2c0c2" stroke-width="1"/></svg>
<svg class="a" style="left:622.40px;top:189.00px" width="8" height="6" viewBox="0 0 8 6"><polyline points="2.1,2 4,4 5.9,2" fill="none" stroke="#c6c4c6" stroke-width="1.1" stroke-linecap="round" stroke-linejoin="round"/></svg>
<span class="t" style="left:585.80px;top:216px;font-size:9px;color:#444;transform:scaleX(0.9189);">Абзац</span>
<svg class="a" style="left:689px;top:216px;" width="7" height="7" viewBox="0 0 7 7"><path d="M0.5 3V0.5H3M3.2 3.2L6.3 6.3M6.5 3.6V6.5H3.6" fill="none" stroke="#aaa" stroke-width="0.9"/></svg>
<div class="a" style="left:698.4px;top:151px;width:1px;height:72px;background:#d6d4d6;"></div>
<svg class="a" style="left:713px;top:153px;" width="24" height="24" viewBox="0 0 24 24"><rect x="0.6" y="0.6" width="15.6" height="14.8" fill="#69a7ea" stroke="#3b82d0" stroke-width="0.8"/><circle cx="15" cy="14.8" r="7.4" fill="#fff" stroke="#3a3a3a" stroke-width="1.2"/></svg>
<span class="t" style="left:706.80px;top:182px;font-size:10.3px;color:#2b2b2b;transform:scaleX(0.9632);">Фигуры</span>
<svg class="a" style="left:720.40px;top:195.40px" width="8" height="6" viewBox="0 0 8 6"><polyline points="2.1,2.0 4,4.0 5.9,2.0" fill="none" stroke="#2b2b2b" stroke-width="1.0" stroke-linecap="round" stroke-linejoin="round"/></svg>
<svg class="a" style="left:765px;top:153px;" width="24" height="24" viewBox="0 0 24 24"><rect x="3.6" y="3.4" width="16" height="16.4" fill="#f9d58b" stroke="#e8912d" stroke-width="1.2"/><rect x="0.6" y="0.6" width="8.8" height="8.8" fill="#fff" stroke="#555" stroke-width="1.1"/><rect x="13.8" y="14" width="9" height="9" fill="#fff" stroke="#555" stroke-width="1.1"/></svg>
<span class="t" style="left:746.50px;top:182px;font-size:10.3px;color:#2b2b2b;transform:scaleX(0.9757);">Упорядочить</span>
<svg class="a" style="left:772.00px;top:195.40px" width="8" height="6" viewBox="0 0 8 6"><polyline points="2.1,2.0 4,4.0 5.9,2.0" fill="none" stroke="#2b2b2b" stroke-width="1.0" stroke-linecap="round" stroke-linejoin="round"/></svg>
<svg class="a" style="left:822px;top:153px;" width="25" height="24" viewBox="0 0 25 24"><rect x="0.8" y="0.6" width="21.6" height="21.6" rx="1.5" fill="#f0eef0" stroke="#a9a7a9" stroke-width="1.2"/><path d="M23.6 8.4C21 11 17 15.6 14.6 19.4L12.6 18.2C15.4 14.4 19.6 10.4 23.6 8.4Z" fill="#c9c7c9" stroke="#a9a7a9" stroke-width="0.6"/><path d="M12.4 18.4C10.6 19 9.6 20.8 8 22.8 10.6 23 13.2 22 14.4 19.6Z" fill="#bdbbbd"/></svg>
<span class="t" style="left:811.50px;top:182px;font-size:10.3px;color:#b0aeb0;transform:scaleX(0.9220);">Экспресс-</span>
<span class="t" style="left:816.70px;top:195px;font-size:10.3px;color:#b0aeb0;transform:scaleX(0.9093);">стили</span>
<svg class="a" style="left:843.40px;top:196.00px" width="8" height="6" viewBox="0 0 8 6"><polyline points="2,1.9 4,4.1 6,1.9" fill="none" stroke="#c6c4c6" stroke-width="1.1" stroke-linecap="round" stroke-linejoin="round"/></svg>
<svg class="a" style="left:863px;top:152px;" width="13" height="13" viewBox="0 0 13 13"><path d="M5.4 1.2L10.6 6.6 6.2 10 1.8 5.6Z" fill="none" stroke="#8c8a8c" stroke-width="1"/><path d="M5 0.4V4" stroke="#8c8a8c" stroke-width="0.9"/><path d="M11 6.4C11.8 7.6 12.2 8.4 11.4 9" fill="none" stroke="#8c8a8c" stroke-width="0.9"/><rect x="0" y="10.6" width="12.8" height="2.2" fill="#b5b3b5"/></svg>
<span class="t" style="left:879.70px;top:155px;font-size:10.3px;color:#b0aeb0;transform:scaleX(0.9255);">Заливка фигуры</span>
<svg class="a" style="left:954.60px;top:156.40px" width="8" height="6" viewBox="0 0 8 6"><polyline points="2,1.9 4,4.1 6,1.9" fill="none" stroke="#c6c4c6" stroke-width="1.1" stroke-linecap="round" stroke-linejoin="round"/></svg>
<svg class="a" style="left:863px;top:173px;" width="13" height="13" viewBox="0 0 13 13"><path d="M1 1.4H8.6M1 1.4V8.6H6" fill="none" stroke="#8c8a8c" stroke-width="1"/><path d="M5.4 6.6L10.6 1.2 12 2.6 6.8 8 4.8 8.6Z" fill="#fff" stroke="#8c8a8c" stroke-width="0.9"/><rect x="0" y="10.6" width="12.8" height="2.2" fill="#b5b3b5"/></svg>
<span class="t" style="left:879.70px;top:176px;font-size:10.3px;color:#b0aeb0;transform:scaleX(0.9525);">Контур фигуры</span>
<svg class="a" style="left:950.20px;top:177.40px" width="8" height="6" viewBox="0 0 8 6"><polyline points="2,1.9 4,4.1 6,1.9" fill="none" stroke="#c6c4c6" stroke-width="1.1" stroke-linecap="round" stroke-linejoin="round"/></svg>
<svg class="a" style="left:863px;top:195.5px;" width="13" height="11" viewBox="0 0 13 11"><path d="M3.6 0.8H12L9.6 6.4H1.2Z" fill="#e3e1e3" stroke="#8c8a8c" stroke-width="1" stroke-linejoin="round"/><path d="M1.2 6.4V8.2C1.2 9.4 2 10 3 10H8.4C9.2 10 9.8 9.6 10.2 8.8L12 4.8V0.8" fill="#cfcdcf" stroke="#8c8a8c" stroke-width="1" stroke-linejoin="round"/></svg>
<span class="t" style="left:879.70px;top:197px;font-size:10.3px;color:#b0aeb0;transform:scaleX(0.8889);">Эффекты фигуры</span>
<svg class="a" style="left:957.80px;top:198.60px" width="8" height="6" viewBox="0 0 8 6"><polyline points="2,1.9 4,4.1 6,1.9" fill="none" stroke="#c6c4c6" stroke-width="1.1" stroke-linecap="round" stroke-linejoin="round"/></svg>
<span class="t" style="left:811.50px;top:216px;font-size:9px;color:#444;transform:scaleX(0.8935);">Рисование</span>
<svg class="a" style="left:969px;top:216px;" width="7" height="7" viewBox="0 0 7 7"><path d="M0.5 3V0.5H3M3.2 3.2L6.3 6.3M6.5 3.6V6.5H3.6" fill="none" stroke="#aaa" stroke-width="0.9"/></svg>
<div class="a" style="left:978.9px;top:151px;width:1px;height:72px;background:#d6d4d6;"></div>
<svg class="a" style="left:989.5px;top:151.8px;" width="13" height="13.5" viewBox="0 0 13 13.5"><circle cx="8" cy="4.8" r="4.2" fill="none" stroke="#444" stroke-width="1.1"/><path d="M5 8L0.6 12.8" stroke="#444" stroke-width="1.2"/></svg>
<span class="t" style="left:1006.00px;top:155px;font-size:10.3px;color:#2b2b2b;transform:scaleX(0.9186);">Найти</span>
<svg class="a" style="left:989px;top:173px;" width="12" height="14" viewBox="0 0 12 14"><path d="M3.2 4.400C0.400 5.800 0.400 9.400 2.600 10.600H6.400" fill="none" stroke="#2b8ad8" stroke-width="1.100"/><path d="M4.600 8.600L6.600 10.600 4.600 12.600" fill="none" stroke="#2b8ad8" stroke-width="1.100"/></svg><span class="t" style="left:994.00px;top:173px;font-size:8.4px;color:#b03cc0;transform:scaleX(0.8990);">b</span><span class="t" style="left:997.00px;top:179px;font-size:8.4px;color:#2b8ad8;transform:scaleX(0.9524);">c</span>
<span class="t" style="left:1006.00px;top:176px;font-size:10.3px;color:#2b2b2b;transform:scaleX(0.9290);">Заменить</span>
<svg class="a" style="left:1062.00px;top:177.40px" width="8" height="6" viewBox="0 0 8 6"><polyline points="2.1,2.0 4,4.0 5.9,2.0" fill="none" stroke="#2b2b2b" stroke-width="1.0" stroke-linecap="round" stroke-linejoin="round"/></svg>
<svg class="a" style="left:990px;top:195px;" width="10" height="13" viewBox="0 0 10 13"><path d="M0.8 0.8V10.4L3.2 8.2 5 12 6.6 11.2 4.8 7.6H8Z" fill="#fff" stroke="#444" stroke-width="1" stroke-linejoin="round"/></svg>
<span class="t" style="left:1006.00px;top:197px;font-size:10.3px;color:#2b2b2b;transform:scaleX(0.9049);">Выделить</span>
<svg class="a" style="left:1051.00px;top:198.40px" width="8" height="6" viewBox="0 0 8 6"><polyline points="2.1,2.0 4,4.0 5.9,2.0" fill="none" stroke="#2b2b2b" stroke-width="1.0" stroke-linecap="round" stroke-linejoin="round"/></svg>
<span class="t" style="left:998.40px;top:216px;font-size:9px;color:#444;transform:scaleX(0.9218);">Редактирование</span>
<div class="a" style="left:1082.4px;top:151px;width:1px;height:72px;background:#d6d4d6;"></div>
<svg class="a" style="left:1106.8px;top:153.2px;" width="23.2" height="22.8" viewBox="0 0 23.2 22.8"><rect x="0.6" y="0.6" width="22" height="21.6" fill="#fdf6f3" stroke="#d9532c" stroke-width="1.2"/><rect x="3.4" y="3.2" width="6.6" height="6.6" fill="#fff" stroke="#d9532c" stroke-width="1"/><rect x="3.4" y="13" width="6.6" height="6.6" fill="#fff" stroke="#d9532c" stroke-width="1"/><rect x="13.2" y="3.2" width="6.6" height="6.6" fill="#fff" stroke="#d9532c" stroke-width="1"/><rect x="13.2" y="13" width="6.6" height="6.6" fill="#fff" stroke="#d9532c" stroke-width="1"/></svg>
<span class="t" style="left:1090.90px;top:182px;font-size:10.3px;color:#2b2b2b;transform:scaleX(0.9626);">Надстройки</span>
<span class="t" style="left:1094.60px;top:216px;font-size:9px;color:#444;transform:scaleX(0.9275);">Надстройки</span>
<div class="a" style="left:1153.5px;top:151px;width:1px;height:72px;background:#d6d4d6;"></div>
<svg class="a" style="left:1243.5px;top:214px;" width="8" height="5" viewBox="0 0 8 5"><polyline points="0.6,0.8 4,4.2 7.4,0.8" fill="none" stroke="#444" stroke-width="1.1"/></svg>
<!-- sec_lower -->
<svg class="a" style="left:191.8px;top:232px;" width="7.4" height="5" viewBox="0 0 7.4 5"><path d="M0 5L3.7 0 7.4 5Z" fill="#767276"/></svg>
<div class="a" style="left:191.8px;top:242.5px;width:7.2px;height:239.5px;background:#767276;border-radius:3.6px;"></div>
<svg class="a" style="left:191.8px;top:739.5px;" width="7.4" height="5" viewBox="0 0 7.4 5"><path d="M0 0L3.7 5 7.4 0Z" fill="#767276"/></svg>
<div class="a" style="left:204px;top:229px;width:1px;height:519px;background:#cfcdcf;"></div>
<span class="t" style="left:16.80px;top:241px;font-size:12.4px;color:#444;">1</span>
<span class="t" style="left:16.80px;top:336px;font-size:12.4px;color:#444;">2</span>
<span class="t" style="left:16.80px;top:430px;font-size:12.4px;color:#c2452a;">3</span>
<span class="t" style="left:16.80px;top:525px;font-size:12.4px;color:#444;">4</span>
<span class="t" style="left:16.80px;top:620px;font-size:12.4px;color:#444;">5</span>
<span class="t" style="left:16.80px;top:714px;font-size:12.4px;color:#444;">6</span>
<div class="a" style="left:338px;top:230.6px;width:805px;height:11.8px;background:#ffffff;"></div>
<span class="t" style="left:353.66px;top:233px;font-size:8.4px;color:#555;transform:scaleX(0.9200);">16</span><span class="t" style="left:377.50px;top:233px;font-size:8.4px;color:#555;transform:scaleX(0.9200);">15</span><span class="t" style="left:401.34px;top:233px;font-size:8.4px;color:#555;transform:scaleX(0.9200);">14</span><span class="t" style="left:425.18px;top:233px;font-size:8.4px;color:#555;transform:scaleX(0.9200);">13</span><span class="t" style="left:449.02px;top:233px;font-size:8.4px;color:#555;transform:scaleX(0.9200);">12</span><span class="t" style="left:473.15px;top:233px;font-size:8.4px;color:#555;transform:scaleX(0.9200);">11</span><span class="t" style="left:496.70px;top:233px;font-size:8.4px;color:#555;transform:scaleX(0.9200);">10</span><span class="t" style="left:522.69px;top:233px;font-size:8.4px;color:#555;transform:scaleX(0.9200);">9</span><span class="t" style="left:546.53px;top:233px;font-size:8.4px;color:#555;transform:scaleX(0.9200);">8</span><span class="t" style="left:570.37px;top:233px;font-size:8.4px;color:#555;transform:scaleX(0.9200);">7</span><span class="t" style="left:594.21px;top:233px;font-size:8.4px;color:#555;transform:scaleX(0.9200);">6</span><span class="t" style="left:618.05px;top:233px;font-size:8.4px;color:#555;transform:scaleX(0.9200);">5</span><span class="t" style="left:641.89px;top:233px;font-size:8.4px;color:#555;transform:scaleX(0.9200);">4</span><span class="t" style="left:665.73px;top:233px;font-size:8.4px;color:#555;transform:scaleX(0.9200);">3</span><span class="t" style="left:689.57px;top:233px;font-size:8.4px;color:#555;transform:scaleX(0.9200);">2</span><span class="t" style="left:713.41px;top:233px;font-size:8.4px;color:#555;transform:scaleX(0.9200);">1</span><span class="t" style="left:737.25px;top:233px;font-size:8.4px;color:#555;transform:scaleX(0.9200);">0</span><span class="t" style="left:761.09px;top:233px;font-size:8.4px;color:#555;transform:scaleX(0.9200);">1</span><span class="t" style="left:784.93px;top:233px;font-size:8.4px;color:#555;transform:scaleX(0.9200);">2</span><span class="t" style="left:808.77px;top:233px;font-size:8.4px;color:#555;transform:scaleX(0.9200);">3</span><span class="t" style="left:832.61px;top:233px;font-size:8.4px;color:#555;transform:scaleX(0.9200);">4</span><span class="t" style="left:856.45px;top:233px;font-size:8.4px;color:#555;transform:scaleX(0.9200);">5</span><span class="t" style="left:880.29px;top:233px;font-size:8.4px;color:#555;transform:scaleX(0.9200);">6</span><span class="t" style="left:904.13px;top:233px;font-size:8.4px;color:#555;transform:scaleX(0.9200);">7</span><span class="t" style="left:927.97px;top:233px;font-size:8.4px;color:#555;transform:scaleX(0.9200);">8</span><span class="t" style="left:951.81px;top:233px;font-size:8.4px;color:#555;transform:scaleX(0.9200);">9</span><span class="t" style="left:973.50px;top:233px;font-size:8.4px;color:#555;transform:scaleX(0.9200);">10</span><span class="t" style="left:997.63px;top:233px;font-size:8.4px;color:#555;transform:scaleX(0.9200);">11</span><span class="t" style="left:1021.18px;top:233px;font-size:8.4px;color:#555;transform:scaleX(0.9200);">12</span><span class="t" style="left:1045.02px;top:233px;font-size:8.4px;color:#555;transform:scaleX(0.9200);">13</span><span class="t" style="left:1068.86px;top:233px;font-size:8.4px;color:#555;transform:scaleX(0.9200);">14</span><span class="t" style="left:1092.70px;top:233px;font-size:8.4px;color:#555;transform:scaleX(0.9200);">15</span><span class="t" style="left:1116.54px;top:233px;font-size:8.4px;color:#555;transform:scaleX(0.9200);">16</span>
<svg class="a" style="left:338px;top:230.6px;" width="805" height="11.8" viewBox="0 0 805 11.8"><rect x="1.58" y="5.6" width="1" height="1" fill="#777"/><rect x="7.54" y="3.6" width="1" height="4.6" fill="#888"/><rect x="13.50" y="5.6" width="1" height="1" fill="#777"/><rect x="25.42" y="5.6" width="1" height="1" fill="#777"/><rect x="31.38" y="3.6" width="1" height="4.6" fill="#888"/><rect x="37.34" y="5.6" width="1" height="1" fill="#777"/><rect x="49.26" y="5.6" width="1" height="1" fill="#777"/><rect x="55.22" y="3.6" width="1" height="4.6" fill="#888"/><rect x="61.18" y="5.6" width="1" height="1" fill="#777"/><rect x="73.10" y="5.6" width="1" height="1" fill="#777"/><rect x="79.06" y="3.6" width="1" height="4.6" fill="#888"/><rect x="85.02" y="5.6" width="1" height="1" fill="#777"/><rect x="96.94" y="5.6" width="1" height="1" fill="#777"/><rect x="102.90" y="3.6" width="1" height="4.6" fill="#888"/><rect x="108.86" y="5.6" width="1" height="1" fill="#777"/><rect x="120.78" y="5.6" width="1" height="1" fill="#777"/><rect x="126.74" y="3.6" width="1" height="4.6" fill="#888"/><rect x="132.70" y="5.6" width="1" height="1" fill="#777"/><rect x="144.62" y="5.6" width="1" height="1" fill="#777"/><rect x="150.58" y="3.6" width="1" height="4.6" fill="#888"/><rect x="156.54" y="5.6" width="1" height="1" fill="#777"/><rect x="168.46" y="5.6" width="1" height="1" fill="#777"/><rect x="174.42" y="3.6" width="1" height="4.6" fill="#888"/><rect x="180.38" y="5.6" width="1" height="1" fill="#777"/><rect x="192.30" y="5.6" width="1" height="1" fill="#777"/><rect x="198.26" y="3.6" width="1" height="4.6" fill="#888"/><rect x="204.22" y="5.6" width="1" height="1" fill="#777"/><rect x="216.14" y="5.6" width="1" height="1" fill="#777"/><rect x="222.10" y="3.6" width="1" height="4.6" fill="#888"/><rect x="228.06" y="5.6" width="1" height="1" fill="#777"/><rect x="239.98" y="5.6" width="1" height="1" fill="#777"/><rect x="245.94" y="3.6" width="1" height="4.6" fill="#888"/><rect x="251.90" y="5.6" width="1" height="1" fill="#777"/><rect x="263.82" y="5.6" width="1" height="1" fill="#777"/><rect x="269.78" y="3.6" width="1" height="4.6" fill="#888"/><rect x="275.74" y="5.6" width="1" height="1" fill="#777"/><rect x="287.66" y="5.6" width="1" height="1" fill="#777"/><rect x="293.62" y="3.6" width="1" height="4.6" fill="#888"/><rect x="299.58" y="5.6" width="1" height="1" fill="#777"/><rect x="311.50" y="5.6" width="1" height="1" fill="#777"/><rect x="317.46" y="3.6" width="1" height="4.6" fill="#888"/><rect x="323.42" y="5.6" width="1" height="1" fill="#777"/><rect x="335.34" y="5.6" width="1" height="1" fill="#777"/><rect x="341.30" y="3.6" width="1" height="4.6" fill="#888"/><rect x="347.26" y="5.6" width="1" height="1" fill="#777"/><rect x="359.18" y="5.6" width="1" height="1" fill="#777"/><rect x="365.14" y="3.6" width="1" height="4.6" fill="#888"/><rect x="371.10" y="5.6" width="1" height="1" fill="#777"/><rect x="383.02" y="5.6" width="1" height="1" fill="#777"/><rect x="388.98" y="3.6" width="1" height="4.6" fill="#888"/><rect x="394.94" y="5.6" width="1" height="1" fill="#777"/><rect x="406.86" y="5.6" width="1" height="1" fill="#777"/><rect x="412.82" y="3.6" width="1" height="4.6" fill="#888"/><rect x="418.78" y="5.6" width="1" height="1" fill="#777"/><rect x="430.70" y="5.6" width="1" height="1" fill="#777"/><rect x="436.66" y="3.6" width="1" height="4.6" fill="#888"/><rect x="442.62" y="5.6" width="1" height="1" fill="#777"/><rect x="454.54" y="5.6" width="1" height="1" fill="#777"/><rect x="460.50" y="3.6" width="1" height="4.6" fill="#888"/><rect x="466.46" y="5.6" width="1" height="1" fill="#777"/><rect x="478.38" y="5.6" width="1" height="1" fill="#777"/><rect x="484.34" y="3.6" width="1" height="4.6" fill="#888"/><rect x="490.30" y="5.6" width="1" height="1" fill="#777"/><rect x="502.22" y="5.6" width="1" height="1" fill="#777"/><rect x="508.18" y="3.6" width="1" height="4.6" fill="#888"/><rect x="514.14" y="5.6" width="1" height="1" fill="#777"/><rect x="526.06" y="5.6" width="1" height="1" fill="#777"/><rect x="532.02" y="3.6" width="1" height="4.6" fill="#888"/><rect x="537.98" y="5.6" width="1" height="1" fill="#777"/><rect x="549.90" y="5.6" width="1" height="1" fill="#777"/><rect x="555.86" y="3.6" width="1" height="4.6" fill="#888"/><rect x="561.82" y="5.6" width="1" height="1" fill="#777"/><rect x="573.74" y="5.6" width="1" height="1" fill="#777"/><rect x="579.70" y="3.6" width="1" height="4.6" fill="#888"/><rect x="585.66" y="5.6" width="1" height="1" fill="#777"/><rect x="597.58" y="5.6" width="1" height="1" fill="#777"/><rect x="603.54" y="3.6" width="1" height="4.6" fill="#888"/><rect x="609.50" y="5.6" width="1" height="1" fill="#777"/><rect x="621.42" y="5.6" width="1" height="1" fill="#777"/><rect x="627.38" y="3.6" width="1" height="4.6" fill="#888"/><rect x="633.34" y="5.6" width="1" height="1" fill="#777"/><rect x="645.26" y="5.6" width="1" height="1" fill="#777"/><rect x="651.22" y="3.6" width="1" height="4.6" fill="#888"/><rect x="657.18" y="5.6" width="1" height="1" fill="#777"/><rect x="669.10" y="5.6" width="1" height="1" fill="#777"/><rect x="675.06" y="3.6" width="1" height="4.6" fill="#888"/><rect x="681.02" y="5.6" width="1" height="1" fill="#777"/><rect x="692.94" y="5.6" width="1" height="1" fill="#777"/><rect x="698.90" y="3.6" width="1" height="4.6" fill="#888"/><rect x="704.86" y="5.6" width="1" height="1" fill="#777"/><rect x="716.78" y="5.6" width="1" height="1" fill="#777"/><rect x="722.74" y="3.6" width="1" height="4.6" fill="#888"/><rect x="728.70" y="5.6" width="1" height="1" fill="#777"/><rect x="740.62" y="5.6" width="1" height="1" fill="#777"/><rect x="746.58" y="3.6" width="1" height="4.6" fill="#888"/><rect x="752.54" y="5.6" width="1" height="1" fill="#777"/><rect x="764.46" y="5.6" width="1" height="1" fill="#777"/><rect x="770.42" y="3.6" width="1" height="4.6" fill="#888"/><rect x="776.38" y="5.6" width="1" height="1" fill="#777"/><rect x="788.30" y="5.6" width="1" height="1" fill="#777"/><rect x="794.26" y="3.6" width="1" height="4.6" fill="#888"/><rect x="800.22" y="5.6" width="1" height="1" fill="#777"/></svg>
<div class="a" style="left:210px;top:254px;width:10.4px;height:453px;background:#ffffff;"></div>
<svg class="a" style="left:210px;top:254px;" width="10.4" height="453" viewBox="0 0 10.4 453"><rect x="4.7" y="5.38" width="1" height="1" fill="#777"/><rect x="4.7" y="17.30" width="1" height="1" fill="#777"/><rect x="3" y="23.26" width="4.6" height="1" fill="#888"/><rect x="4.7" y="29.22" width="1" height="1" fill="#777"/><rect x="4.7" y="41.14" width="1" height="1" fill="#777"/><rect x="3" y="47.10" width="4.6" height="1" fill="#888"/><rect x="4.7" y="53.06" width="1" height="1" fill="#777"/><rect x="4.7" y="64.98" width="1" height="1" fill="#777"/><rect x="3" y="70.94" width="4.6" height="1" fill="#888"/><rect x="4.7" y="76.90" width="1" height="1" fill="#777"/><rect x="4.7" y="88.82" width="1" height="1" fill="#777"/><rect x="3" y="94.78" width="4.6" height="1" fill="#888"/><rect x="4.7" y="100.74" width="1" height="1" fill="#777"/><rect x="4.7" y="112.66" width="1" height="1" fill="#777"/><rect x="3" y="118.62" width="4.6" height="1" fill="#888"/><rect x="4.7" y="124.58" width="1" height="1" fill="#777"/><rect x="4.7" y="136.50" width="1" height="1" fill="#777"/><rect x="3" y="142.46" width="4.6" height="1" fill="#888"/><rect x="4.7" y="148.42" width="1" height="1" fill="#777"/><rect x="4.7" y="160.34" width="1" height="1" fill="#777"/><rect x="3" y="166.30" width="4.6" height="1" fill="#888"/><rect x="4.7" y="172.26" width="1" height="1" fill="#777"/><rect x="4.7" y="184.18" width="1" height="1" fill="#777"/><rect x="3" y="190.14" width="4.6" height="1" fill="#888"/><rect x="4.7" y="196.10" width="1" height="1" fill="#777"/><rect x="4.7" y="208.02" width="1" height="1" fill="#777"/><rect x="3" y="213.98" width="4.6" height="1" fill="#888"/><rect x="4.7" y="219.94" width="1" height="1" fill="#777"/><rect x="4.7" y="231.86" width="1" height="1" fill="#777"/><rect x="3" y="237.82" width="4.6" height="1" fill="#888"/><rect x="4.7" y="243.78" width="1" height="1" fill="#777"/><rect x="4.7" y="255.70" width="1" height="1" fill="#777"/><rect x="3" y="261.66" width="4.6" height="1" fill="#888"/><rect x="4.7" y="267.62" width="1" height="1" fill="#777"/><rect x="4.7" y="279.54" width="1" height="1" fill="#777"/><rect x="3" y="285.50" width="4.6" height="1" fill="#888"/><rect x="4.7" y="291.46" width="1" height="1" fill="#777"/><rect x="4.7" y="303.38" width="1" height="1" fill="#777"/><rect x="3" y="309.34" width="4.6" height="1" fill="#888"/><rect x="4.7" y="315.30" width="1" height="1" fill="#777"/><rect x="4.7" y="327.22" width="1" height="1" fill="#777"/><rect x="3" y="333.18" width="4.6" height="1" fill="#888"/><rect x="4.7" y="339.14" width="1" height="1" fill="#777"/><rect x="4.7" y="351.06" width="1" height="1" fill="#777"/><rect x="3" y="357.02" width="4.6" height="1" fill="#888"/><rect x="4.7" y="362.98" width="1" height="1" fill="#777"/><rect x="4.7" y="374.90" width="1" height="1" fill="#777"/><rect x="3" y="380.86" width="4.6" height="1" fill="#888"/><rect x="4.7" y="386.82" width="1" height="1" fill="#777"/><rect x="4.7" y="398.74" width="1" height="1" fill="#777"/><rect x="3" y="404.70" width="4.6" height="1" fill="#888"/><rect x="4.7" y="410.66" width="1" height="1" fill="#777"/><rect x="4.7" y="422.58" width="1" height="1" fill="#777"/><rect x="3" y="428.54" width="4.6" height="1" fill="#888"/><rect x="4.7" y="434.50" width="1" height="1" fill="#777"/><rect x="4.7" y="446.42" width="1" height="1" fill="#777"/></svg>
<span class="t" style="left:205.2px;top:260.84px;width:20px;height:10px;font-size:8.4px;line-height:10px;text-align:center;color:#555;transform:rotate(-90deg);transform-origin:50% 50%">9</span><span class="t" style="left:205.2px;top:284.68px;width:20px;height:10px;font-size:8.4px;line-height:10px;text-align:center;color:#555;transform:rotate(-90deg);transform-origin:50% 50%">8</span><span class="t" style="left:205.2px;top:308.52px;width:20px;height:10px;font-size:8.4px;line-height:10px;text-align:center;color:#555;transform:rotate(-90deg);transform-origin:50% 50%">7</span><span class="t" style="left:205.2px;top:332.36px;width:20px;height:10px;font-size:8.4px;line-height:10px;text-align:center;color:#555;transform:rotate(-90deg);transform-origin:50% 50%">6</span><span class="t" style="left:205.2px;top:356.20px;width:20px;height:10px;font-size:8.4px;line-height:10px;text-align:center;color:#555;transform:rotate(-90deg);transform-origin:50% 50%">5</span><span class="t" style="left:205.2px;top:380.04px;width:20px;height:10px;font-size:8.4px;line-height:10px;text-align:center;color:#555;transform:rotate(-90deg);transform-origin:50% 50%">4</span><span class="t" style="left:205.2px;top:403.88px;width:20px;height:10px;font-size:8.4px;line-height:10px;text-align:center;color:#555;transform:rotate(-90deg);transform-origin:50% 50%">3</span><span class="t" style="left:205.2px;top:427.72px;width:20px;height:10px;font-size:8.4px;line-height:10px;text-align:center;color:#555;transform:rotate(-90deg);transform-origin:50% 50%">2</span><span class="t" style="left:205.2px;top:451.56px;width:20px;height:10px;font-size:8.4px;line-height:10px;text-align:center;color:#555;transform:rotate(-90deg);transform-origin:50% 50%">1</span><span class="t" style="left:205.2px;top:475.40px;width:20px;height:10px;font-size:8.4px;line-height:10px;text-align:center;color:#555;transform:rotate(-90deg);transform-origin:50% 50%">0</span><span class="t" style="left:205.2px;top:499.24px;width:20px;height:10px;font-size:8.4px;line-height:10px;text-align:center;color:#555;transform:rotate(-90deg);transform-origin:50% 50%">1</span><span class="t" style="left:205.2px;top:523.08px;width:20px;height:10px;font-size:8.4px;line-height:10px;text-align:center;color:#555;transform:rotate(-90deg);transform-origin:50% 50%">2</span><span class="t" style="left:205.2px;top:546.92px;width:20px;height:10px;font-size:8.4px;line-height:10px;text-align:center;color:#555;transform:rotate(-90deg);transform-origin:50% 50%">3</span><span class="t" style="left:205.2px;top:570.76px;width:20px;height:10px;font-size:8.4px;line-height:10px;text-align:center;color:#555;transform:rotate(-90deg);transform-origin:50% 50%">4</span><span class="t" style="left:205.2px;top:594.60px;width:20px;height:10px;font-size:8.4px;line-height:10px;text-align:center;color:#555;transform:rotate(-90deg);transform-origin:50% 50%">5</span><span class="t" style="left:205.2px;top:618.44px;width:20px;height:10px;font-size:8.4px;line-height:10px;text-align:center;color:#555;transform:rotate(-90deg);transform-origin:50% 50%">6</span><span class="t" style="left:205.2px;top:642.28px;width:20px;height:10px;font-size:8.4px;line-height:10px;text-align:center;color:#555;transform:rotate(-90deg);transform-origin:50% 50%">7</span><span class="t" style="left:205.2px;top:666.12px;width:20px;height:10px;font-size:8.4px;line-height:10px;text-align:center;color:#555;transform:rotate(-90deg);transform-origin:50% 50%">8</span><span class="t" style="left:205.2px;top:689.96px;width:20px;height:10px;font-size:8.4px;line-height:10px;text-align:center;color:#555;transform:rotate(-90deg);transform-origin:50% 50%">9</span>
<svg class="a" style="left:1255.4px;top:232px;" width="7.4" height="5" viewBox="0 0 7.4 5"><path d="M0 5L3.7 0 7.4 5Z" fill="#767276"/></svg>
<div class="a" style="left:1255.4px;top:311.8px;width:7.4px;height:34.2px;background:#767276;border-radius:3.7px;"></div>
<svg class="a" style="left:1255.4px;top:666px;" width="7.6" height="5" viewBox="0 0 7.6 5"><path d="M0 0L3.8 5 7.6 0Z" fill="#767276"/></svg>
<svg class="a" style="left:1255.4px;top:676.8px;" width="7.6" height="9.8" viewBox="0 0 7.6 9.8"><path d="M0 5L3.8 0 7.6 5ZM0 9.8L3.8 4.8 7.6 9.8Z" fill="#767276"/></svg>
<svg class="a" style="left:1255.4px;top:690.4px;" width="7.6" height="9.8" viewBox="0 0 7.6 9.8"><path d="M0 0L3.8 5 7.6 0ZM0 4.8L3.8 9.8 7.6 4.8Z" fill="#767276"/></svg>
<div class="a" style="left:205px;top:719px;width:1061px;height:1px;background:#dcdadc;"></div>
<span class="t" style="left:214.20px;top:727px;font-size:12.6px;color:#6a6a6a;transform:scaleX(0.9467);">Щелкните, чтобы добавить заметки</span>
<div class="a" style="left:6px;top:748px;width:1260px;height:18px;background:#f3f1f3;"></div>
<span class="t" style="left:15.80px;top:754px;font-size:8.5px;color:#444;transform:scaleX(0.9705);">Слайд 3 из 11</span>
<span class="t" style="left:96.30px;top:754px;font-size:8.5px;color:#444;transform:scaleX(0.9861);">русский (Украина)</span>
<svg class="a" style="left:180.5px;top:751.5px;" width="12" height="13" viewBox="0 0 12 13"><circle cx="5.6" cy="2" r="1.5" fill="none" stroke="#444" stroke-width="0.9"/><path d="M0.8 4.2L4 5V8L2 12M10.4 4.2L7.2 5V8L9.2 12M4 5H7.2" fill="none" stroke="#444" stroke-width="0.9"/><path d="M7.6 9.4L11.2 12.6M11.2 9.4L7.6 12.6" stroke="#444" stroke-width="0.9"/></svg>
<span class="t" style="left:195.00px;top:754px;font-size:8.5px;font-weight:700;color:#222;">Специальные возможности: проверьте рекомендации</span>
<svg class="a" style="left:833px;top:751px;" width="13" height="13" viewBox="0 0 13 13"><path d="M4.4 3L6.6 0.8 8.8 3" fill="none" stroke="#444" stroke-width="1"/><path d="M0 5.6H13M0 8.4H13M0 11.2H13" stroke="#444" stroke-width="1"/></svg>
<span class="t" style="left:847.30px;top:754px;font-size:8.5px;color:#444;transform:scaleX(0.9566);">Заметки</span>
<svg class="a" style="left:895px;top:751.5px;" width="12.4" height="12.4" viewBox="0 0 12.4 12.4"><path d="M1.4 0.6H11A0.8 0.8 0 0 1 11.8 1.4V7.6A0.8 0.8 0 0 1 11 8.4H5.2L2.4 11.4V8.4H1.4A0.8 0.8 0 0 1 0.6 7.6V1.4A0.8 0.8 0 0 1 1.4 0.6Z" fill="none" stroke="#444" stroke-width="1"/></svg>
<span class="t" style="left:909.00px;top:754px;font-size:8.5px;color:#444;">Примечания</span>
<div class="a" style="left:973.8px;top:748.6px;width:33.2px;height:17.2px;background:#dddbdd;"></div>
<svg class="a" style="left:984.5px;top:752px;" width="12" height="11" viewBox="0 0 12 11"><rect x="0.6" y="0.6" width="10.8" height="9.6" fill="none" stroke="#444" stroke-width="1.1"/><path d="M3.2 0.6V10.2" stroke="#444" stroke-width="1"/><rect x="5" y="2.6" width="4.8" height="3.4" fill="none" stroke="#444" stroke-width="0.9"/><path d="M5 8H9.8" stroke="#444" stroke-width="0.8"/></svg>
<svg class="a" style="left:1017px;top:752px;" width="12.6" height="11" viewBox="0 0 12.6 11"><rect x="0.6" y="0.6" width="4.4" height="3.6" fill="none" stroke="#444" stroke-width="1"/><rect x="0.6" y="6.6" width="4.4" height="3.6" fill="none" stroke="#444" stroke-width="1"/><rect x="7.4" y="0.6" width="4.4" height="3.6" fill="none" stroke="#444" stroke-width="1"/><rect x="7.4" y="6.6" width="4.4" height="3.6" fill="none" stroke="#444" stroke-width="1"/></svg>
<svg class="a" style="left:1050px;top:751.6px;" width="11.4" height="11.4" viewBox="0 0 11.4 11.4"><path d="M5.7 1.6C4.4 0.8 2.4 0.6 0.6 0.8V9.8C2.4 9.6 4.4 9.8 5.7 10.8 7 9.8 9 9.6 10.8 9.8V0.8C9 0.6 7 0.8 5.7 1.6ZM5.7 1.6V10.8" fill="none" stroke="#444" stroke-width="1"/><path d="M2.2 3.4H4M2.2 5.4H4M2.2 7.4H4M7.4 3.4H9.2M7.4 5.4H9.2M7.4 7.4H9.2" stroke="#444" stroke-width="0.7"/></svg>
<svg class="a" style="left:1083px;top:751.6px;" width="10.4" height="12" viewBox="0 0 10.4 12"><rect x="0.6" y="0.8" width="9.2" height="5.8" fill="none" stroke="#444" stroke-width="1.1"/><path d="M5.2 6.6V10.6M2.4 11.2H8" stroke="#444" stroke-width="1.1"/><path d="M2.8 3H7.6" stroke="#444" stroke-width="1"/></svg>
<div class="a" style="left:1109.8px;top:757px;width:5.8px;height:1px;background:#555;"></div>
<div class="a" style="left:1120.5px;top:757px;width:81.3px;height:1px;background:#777;"></div>
<div class="a" style="left:1150px;top:752.6px;width:3.4px;height:9.6px;background:#555;"></div>
<div class="a" style="left:1161px;top:755px;width:1px;height:5px;background:#777;"></div>
<svg class="a" style="left:1206px;top:754.4px;" width="6.4" height="6.4" viewBox="0 0 6.4 6.4"><path d="M0 3.2H6.4M3.2 0V6.4" stroke="#555" stroke-width="1"/></svg>
<span class="t" style="left:1222.50px;top:754px;font-size:8.5px;color:#444;transform:scaleX(0.9405);">77%</span>
<svg class="a" style="left:1249.6px;top:751px;" width="12" height="13" viewBox="0 0 12 13"><rect x="3" y="3.6" width="6" height="5.8" fill="none" stroke="#444" stroke-width="1"/><path d="M4.4 1.8L6 0.4 7.6 1.8M4.4 11.2L6 12.6 7.6 11.2M1.8 4.9L0.4 6.5 1.8 8.1M10.2 4.9L11.6 6.5 10.2 8.1" fill="none" stroke="#444" stroke-width="0.9"/></svg>
<!-- sec_slide -->
<div class="a" style="left:336.4px;top:253.8px;width:806.2px;height:453.6px;background:linear-gradient(180deg,#92d050 0%,#9dc992 36%,#a4c4b4 55%,#a9bde6 74%,#b4c4e9 87%,#c7d3ef 100%);"></div>
<div class="a" style="left:0;top:0;font-family:'Liberation Serif','DejaVu Serif',serif;font-size:15.85px;line-height:1;color:#0a0a0a">
<b class="a" style="left:382.5px;top:276px;font-style:italic;white-space:pre">1.</b>
<div class="a" style="left:404.5px;top:276px;width:422.3px;height:15.85px;white-space:normal;overflow:visible;text-align:justify;text-align-last:justify;"><b style="font-style:italic">Колеснікова Т.В.</b> – кандидат економічних наук, доцент,</div>
<div class="a" style="left:404.5px;top:295px;width:422.3px;height:15.85px;white-space:normal;overflow:visible;text-align:justify;text-align-last:justify;">провідний науковий співробітник, керівник відділу</div>
<div class="a" style="left:404.5px;top:314px;width:422.3px;height:15.85px;white-space:normal;overflow:visible;text-align:justify;text-align-last:justify;">«Соціальні дослідження та рівень життя» Національного</div>
<div class="a" style="left:404.5px;top:333px;width:422.3px;height:15.85px;white-space:normal;overflow:visible;text-align:justify;text-align-last:justify;">інституту економічних досліджень, Академія економічних</div>
<div class="a" style="left:404.5px;top:352px;width:422.3px;height:15.85px;white-space:normal;overflow:visible;white-space:pre;">наук Молдови (AESM), (Республіка Молдова);</div>
<b class="a" style="left:382.5px;top:371px;font-style:italic;white-space:pre">2.</b>
<div class="a" style="left:404.5px;top:371px;width:422.3px;height:15.85px;white-space:normal;overflow:visible;text-align:justify;text-align-last:justify;"><b style="font-style:italic">Крупіца І.В.</b> – доктор економічних наук, професор кафедри</div>
<div class="a" style="left:404.5px;top:391px;width:422.3px;height:15.85px;white-space:normal;overflow:visible;text-align:justify;text-align-last:justify;">туристичного бізнесу та рекреації Одеського національного</div>
<div class="a" style="left:404.5px;top:410px;width:422.3px;height:15.85px;white-space:normal;overflow:visible;white-space:pre;">технологічного університету, (Україна);</div>
<b class="a" style="left:382.5px;top:429px;font-style:italic;white-space:pre">3.</b>
<div class="a" style="left:404.5px;top:429px;width:422.3px;height:15.85px;white-space:normal;overflow:visible;text-align:justify;text-align-last:justify;"><b style="font-style:italic">Меліх О.О.</b> - доктор економічних наук, професор кафедри</div>
<div class="a" style="left:404.5px;top:448px;width:422.3px;height:15.85px;white-space:normal;overflow:visible;text-align:justify;text-align-last:justify;">туристичного бізнесу та рекреації Одеського національного</div>
<div class="a" style="left:404.5px;top:467px;width:422.3px;height:15.85px;white-space:normal;overflow:visible;white-space:pre;">технологічного університету, (Україна);</div>
<b class="a" style="left:382.5px;top:486px;font-style:italic;white-space:pre">4.</b>
<div class="a" style="left:404.5px;top:486px;width:422.3px;height:15.85px;white-space:normal;overflow:visible;text-align:justify;text-align-last:justify;"><b style="font-style:italic">Саркісян Г.О.</b> – доктор економічних наук, професор,</div>
<div class="a" style="left:404.5px;top:505px;width:422.3px;height:15.85px;white-space:normal;overflow:visible;text-align:justify;text-align-last:justify;">заступник директора ННІ ГРтаТБіЕ ім. О.О.</div>
<div class="a" style="left:404.5px;top:525px;width:422.3px;height:15.85px;white-space:normal;overflow:visible;text-align:justify;text-align-last:justify;">Преображенського Одеського національного технологічного</div>
<div class="a" style="left:404.5px;top:544px;width:422.3px;height:15.85px;white-space:normal;overflow:visible;white-space:pre;">університету, (Україна);</div>
<b class="a" style="left:382.5px;top:563px;font-style:italic;white-space:pre">5.</b>
<div class="a" style="left:404.5px;top:563px;width:422.3px;height:15.85px;white-space:normal;overflow:visible;text-align:justify;text-align-last:justify;"><b style="font-style:italic">Чобану Г.Г.</b> – доктор економічних наук, старший науковий</div>
<div class="a" style="left:404.5px;top:582px;width:422.3px;height:15.85px;white-space:normal;overflow:visible;text-align:justify;text-align-last:justify;">співробітник Національного інституту наукових досліджень у</div>
<div class="a" style="left:404.5px;top:601px;width:422.3px;height:15.85px;white-space:normal;overflow:visible;text-align:justify;text-align-last:justify;">галузі праці та соціального захисту (INCSMPS) та</div>
<div class="a" style="left:404.5px;top:620px;width:422.3px;height:15.85px;white-space:normal;overflow:visible;white-space:pre;">Бухарестського університету «Artifex» (Румунія);</div>
<b class="a" style="left:382.5px;top:640px;font-style:italic;white-space:pre">6.</b>
<div class="a" style="left:404.5px;top:640px;width:422.3px;height:15.85px;white-space:normal;overflow:visible;text-align:justify;text-align-last:justify;"><b style="font-style:italic">Шекера С.С.</b> – кандидат економічних наук, доцент кафедри</div>
<div class="a" style="left:404.5px;top:659px;width:422.3px;height:15.85px;white-space:normal;overflow:visible;text-align:justify;text-align-last:justify;">туристичного бізнесу та рекреації Одеського національного</div>
<div class="a" style="left:404.5px;top:678px;width:422.3px;height:15.85px;white-space:normal;overflow:visible;white-space:pre;">технологічного університету, (Україна)</div>
</div>
<svg class="a" style="left:850px;top:270.1px" width="73" height="81" viewBox="0 0 73 81"><defs><clipPath id="c1"><rect width="73" height="81"/></clipPath><filter id="f1" x="-5%" y="-5%" width="110%" height="110%"><feGaussianBlur stdDeviation="0.55"/></filter></defs><g clip-path="url(#c1)"><g filter="url(#f1)"><defs><radialGradient id="pa1" cx="0.5" cy="0.4" r="0.6"><stop offset="0" stop-color="#e9b79f"/><stop offset="0.7" stop-color="#d9a088"/><stop offset="1" stop-color="#c48a72"/></radialGradient><radialGradient id="pa2" cx="0.6" cy="0.2" r="0.8"><stop offset="0" stop-color="#dcc090"/><stop offset="0.6" stop-color="#c29a62"/><stop offset="1" stop-color="#a07a48"/></radialGradient><linearGradient id="pa3" x1="0" y1="0" x2="1" y2="0"><stop offset="0" stop-color="#8a5a26"/><stop offset="0.5" stop-color="#a2702f"/><stop offset="1" stop-color="#8c5c28"/></linearGradient></defs><rect width="73" height="81" fill="#cbc9ab"/><rect x="0" y="0" width="73" height="6" fill="#c2c0a0"/><rect x="11" y="15" width="61" height="42" fill="url(#pa3)"/><rect x="14" y="18" width="3" height="38" fill="#7c5022"/><rect x="66" y="18" width="3" height="38" fill="#7c5022"/><rect x="19" y="33" width="7.5" height="16" fill="#cdbf9c"/><rect x="55" y="37" width="7" height="8" fill="#d6caa6"/><rect x="0" y="51" width="14" height="22" fill="#9c6c42"/><rect x="11" y="55" width="20" height="10" fill="#8a5c30"/><rect x="56" y="53" width="15" height="14" fill="#5a9e98"/><path d="M24 50C19 40 20 22 26 14 32 6 46 5 52 12 59 20 60 36 56 47 54 52 50 50 49 44L48 24 30 24 31 44C30 50 27 54 24 50Z" fill="url(#pa2)"/><path d="M31 12C33 9 37 8 40 9 38 11 36 14 35 17Z" fill="#8a6a40"/><rect x="31" y="46" width="17" height="16" fill="#d6a48c"/><path d="M0 81V68C6 64 14 61 22 57L28 52 39 58 52 52 58 57C64 60 70 64 73 69V81Z" fill="#f4f0f6"/><path d="M8 81C10 72 14 66 20 62L18 81ZM60 62C66 66 70 72 72 81H62Z" fill="#e0d8e8"/><path d="M30 55L38.500 80 50 57 46 52H33Z" fill="#dbaa92"/><path d="M38 66L38.500 80 40 66Z" fill="#b8867a"/><ellipse cx="39.5" cy="34" rx="12.4" ry="16.6" fill="url(#pa1)"/><path d="M27 30C28 20 33 16 40 16 47 16 52 21 52.500 30 50 24 46 21 41 21 35 21 30 24 27 30Z" fill="#c8a06a"/><ellipse cx="32.6" cy="29.600" rx="2.600" ry="1.100" fill="#5a4a4a"/><ellipse cx="45.4" cy="29.600" rx="2.600" ry="1.100" fill="#5a4a4a"/><ellipse cx="39" cy="37" rx="2.400" ry="1.400" fill="#cf8a78"/><ellipse cx="38.800" cy="42.600" rx="4.200" ry="1.300" fill="#b86868"/></g></g></svg>
<svg class="a" style="left:955.2px;top:340.1px" width="62.7" height="89.8" viewBox="0 0 62.7 89.8"><defs><clipPath id="c2"><rect width="62.7" height="89.8"/></clipPath><filter id="f2" x="-5%" y="-5%" width="110%" height="110%"><feGaussianBlur stdDeviation="0.55"/></filter></defs><g clip-path="url(#c2)"><g filter="url(#f2)"><defs><radialGradient id="pb1" cx="0.6" cy="0.45" r="0.65"><stop offset="0" stop-color="#deb292"/><stop offset="0.6" stop-color="#c8987c"/><stop offset="1" stop-color="#a87458"/></radialGradient><radialGradient id="pb2" cx="0.7" cy="0.35" r="0.7"><stop offset="0" stop-color="#6e4228"/><stop offset="0.5" stop-color="#472a1c"/><stop offset="1" stop-color="#2e1a12"/></radialGradient></defs><rect width="63" height="90" fill="#15110f"/><rect x="57" y="12" width="6" height="70" fill="#a9a5b9"/><path d="M50 8L57 14V40L52 30Z" fill="#2a2a34"/><rect x="39" y="41.600" width="17" height="11" fill="#b8703a"/><rect x="39" y="52" width="18" height="5" fill="#2a1c14"/><path d="M0 60V0H40C50 4 52 18 50 32 48 44 44 52 38 56L8 58Z" fill="url(#pb2)"/><path d="M36 6C44 8 49 18 48 30 47 40 44 48 40 52 42 40 42 24 36 6Z" fill="#7a4a2c"/><path d="M0 90V58C8 54 18 54 26 58L44 64 48 90Z" fill="#c9b999"/><path d="M0 62C6 60 14 60 20 64L16 70 0 68Z" fill="#b8a482"/><path d="M40 56C50 52 58 58 60 70V90H44Z" fill="#e2deda"/><ellipse cx="22.5" cy="29" rx="15.4" ry="20" fill="url(#pb1)"/><rect x="12" y="44" width="20" height="14" fill="#b88464"/><path d="M6 30C6 16 12 9 22 9 30 9 36 12 38 20 32 15 26 14 20 15 12 17 8 22 6 30Z" fill="#3a2218"/><ellipse cx="17" cy="23.600" rx="3.200" ry="1.300" fill="#4a3026"/><ellipse cx="31" cy="22.600" rx="3" ry="1.300" fill="#4a3026"/><ellipse cx="27.500" cy="40.500" rx="5" ry="2" fill="#96483e"/><ellipse cx="28" cy="32" rx="2.400" ry="3" fill="#d8a888"/><path d="M14 64C16 54 26 48 36 50 46 50 54 56 56 64 58 72 52 78 44 78L24 80C16 78 13 72 14 64Z" fill="#d4a488"/><path d="M22 54C28 50 38 50 46 54 40 54 30 56 24 60Z" fill="#e8c6aa"/><path d="M16 70L12 88H26L30 74Z" fill="#cc9c80"/><path d="M44 66L62 90H50L38 76Z" fill="#d8aa90"/><rect x="9.500" y="79.500" width="10" height="7.600" rx="1" fill="#6aa6d2" transform="rotate(8 14 83)"/><rect x="19" y="82" width="5.600" height="6" fill="#1a1a22" transform="rotate(8 22 85)"/></g></g></svg>
<svg class="a" style="left:850px;top:416.1px" width="59.8" height="88.7" viewBox="0 0 59.8 88.7"><defs><clipPath id="c3"><rect width="59.8" height="88.7"/></clipPath><filter id="f3" x="-5%" y="-5%" width="110%" height="110%"><feGaussianBlur stdDeviation="0.55"/></filter></defs><g clip-path="url(#c3)"><g filter="url(#f3)"><defs><radialGradient id="pc1" cx="0.5" cy="0.4" r="0.65"><stop offset="0" stop-color="#eec2a6"/><stop offset="0.6" stop-color="#e2ae92"/><stop offset="1" stop-color="#c48868"/></radialGradient><linearGradient id="pc2" x1="0" y1="0" x2="1" y2="0"><stop offset="0" stop-color="#b4682c"/><stop offset="0.6" stop-color="#c67a34"/><stop offset="1" stop-color="#b86e2e"/></linearGradient></defs><rect width="60" height="89" fill="url(#pc2)"/><rect x="0" y="0" width="16" height="70" fill="#a8602c"/><rect x="5" y="0" width="3" height="68" fill="#915226"/><rect x="15" y="0" width="1.600" height="66" fill="#8a4e24"/><path d="M13 36C11 18 20 9 32 9 44 9 52 18 50 38 48 30 44 24 40 22L22 22C18 26 15 30 13 36Z" fill="#2a2420"/><rect x="20" y="54" width="22" height="18" fill="#d8a080"/><path d="M0 89V68C6 64 12 62 16 60L30 74 42 86 44 62 48 60C52 61 56 61 60 61V89Z" fill="#e85c44"/><path d="M0 89V74C6 70 12 70 18 74L14 89Z" fill="#dc5440"/><path d="M20 62L42 88 43 62Z" fill="#dba588"/><ellipse cx="31" cy="40" rx="18" ry="21.600" fill="url(#pc1)"/><path d="M14 30C15 22 22 17 31 17 40 17 47 20 48.500 30 45 23 39 20 31 20 24 20 18 23 14 30Z" fill="#2e2622"/><ellipse cx="24.500" cy="36" rx="3.400" ry="1.300" fill="#4a342a"/><ellipse cx="41" cy="36.600" rx="3.200" ry="1.300" fill="#4a342a"/><ellipse cx="33.400" cy="51" rx="6" ry="2" fill="#b82c2c"/><ellipse cx="33" cy="43.500" rx="2.600" ry="1.600" fill="#d89a7c"/></g></g></svg>
<svg class="a" style="left:950.3px;top:473.3px" width="88.1" height="85.5" viewBox="0 0 88.1 85.5"><defs><clipPath id="c4"><rect width="88.1" height="85.5"/></clipPath><filter id="f4" x="-5%" y="-5%" width="110%" height="110%"><feGaussianBlur stdDeviation="0.55"/></filter></defs><g clip-path="url(#c4)"><g filter="url(#f4)"><defs><radialGradient id="pd1" cx="0.45" cy="0.4" r="0.65"><stop offset="0" stop-color="#f4c8b0"/><stop offset="0.65" stop-color="#ecbaa2"/><stop offset="1" stop-color="#d09880"/></radialGradient></defs><rect width="88" height="86" fill="#d6d2cc"/><rect x="0" y="0" width="88" height="12" fill="#c4c0bc"/><rect x="0" y="12" width="64" height="14" fill="#cfccc8"/><rect x="14" y="16" width="12" height="8" fill="#b4b2b0"/><rect x="0" y="26" width="30" height="20" fill="#e2d6ba"/><rect x="3" y="40" width="28" height="19" fill="#7a7264"/><rect x="8" y="44" width="10" height="6" fill="#c8c8c4"/><rect x="14" y="52" width="12" height="8" fill="#8a5a34"/><rect x="64" y="0" width="7.500" height="57" fill="#8c8882"/><rect x="71.500" y="0" width="16.500" height="26" fill="#d4d2ce"/><rect x="71.500" y="26" width="16.500" height="24" fill="#e6dec6"/><rect x="71.500" y="50" width="16.500" height="36" fill="#ecebe6"/><rect x="74" y="38" width="8" height="10" fill="#c8c4b4"/><rect x="0" y="53" width="8.500" height="33" fill="#151515"/><ellipse cx="60.500" cy="46" rx="7.500" ry="8" fill="#262020"/><path d="M27 36C25 18 32 8 44 8 56 8 62 18 60 38 56 24 50 18 42 18 34 18 30 26 27 36Z" fill="#221c1c"/><rect x="34" y="46" width="20" height="16" fill="#e4b09a"/><path d="M5 86C6 72 14 64 28 60L36 55 44 58 54 55C66 58 80 66 86 86Z" fill="#e8c6be"/><path d="M50 62C60 62 70 70 74 86H60Z" fill="#dcb4ae"/><ellipse cx="42.500" cy="33" rx="15" ry="19.400" fill="url(#pd1)"/><path d="M28 28C29 16 36 12 44 12 52 12 57 18 58 28 54 20 48 17 42 17 36 17 31 21 28 28Z" fill="#241e1e"/><ellipse cx="35" cy="28.600" rx="3.200" ry="1.400" fill="#3a2a28"/><ellipse cx="49.500" cy="28.600" rx="3.200" ry="1.400" fill="#3a2a28"/><path d="M34.500 41C38 45.500 44 45.500 47.500 41 43 42.500 39 42.500 34.500 41Z" fill="#d8342e"/><ellipse cx="41" cy="36" rx="2.400" ry="1.600" fill="#e0a48e"/></g></g></svg>
<svg class="a" style="left:850.1px;top:546.9px" width="70.2" height="99.5" viewBox="0 0 70.2 99.5"><defs><clipPath id="c5"><rect width="70.2" height="99.5"/></clipPath><filter id="f5" x="-5%" y="-5%" width="110%" height="110%"><feGaussianBlur stdDeviation="0.55"/></filter></defs><g clip-path="url(#c5)"><g filter="url(#f5)"><defs><radialGradient id="pe1" cx="0.5" cy="0.45" r="0.62"><stop offset="0" stop-color="#e8b898"/><stop offset="0.65" stop-color="#dca888"/><stop offset="1" stop-color="#c08a68"/></radialGradient></defs><rect width="71" height="100" fill="#f4efe4"/><rect x="0" y="0" width="20" height="60" fill="#f8f5ee"/><rect x="22" y="62" width="28" height="14" fill="#d29c7c"/><path d="M0 100V79C8 76 16 74 22 70.500L34 80 48 70.500C54 74 62 76 71 80V100Z" fill="#d6d6e6"/><rect x="3" y="80" width="1.300" height="20" fill="#a8a8ca"/><rect x="7.5" y="78.5" width="1.300" height="21.5" fill="#a8a8ca"/><rect x="12" y="77" width="1.300" height="23" fill="#a8a8ca"/><rect x="16.5" y="76" width="1.300" height="24" fill="#a8a8ca"/><rect x="21" y="75" width="1.300" height="25" fill="#a8a8ca"/><rect x="25.5" y="77" width="1.300" height="23" fill="#a8a8ca"/><rect x="44" y="77" width="1.300" height="23" fill="#a8a8ca"/><rect x="48.5" y="75" width="1.300" height="25" fill="#a8a8ca"/><rect x="53" y="76" width="1.300" height="24" fill="#a8a8ca"/><rect x="57.5" y="77" width="1.300" height="23" fill="#a8a8ca"/><rect x="62" y="78.5" width="1.300" height="21.5" fill="#a8a8ca"/><rect x="66.5" y="80" width="1.300" height="20" fill="#a8a8ca"/><path d="M22 70.500L34 81 30 88 20 76ZM48 70.500L34 81 39 88 50 76Z" fill="#e4e4f0"/><path d="M30.800 79.500H39.300L38.600 87.300 39.600 100H30.600L31.600 87.300Z" fill="#1c2030"/><ellipse cx="12.500" cy="50" rx="2.600" ry="6" fill="#d09878"/><ellipse cx="56" cy="50" rx="2.600" ry="6" fill="#d09878"/><ellipse cx="34.200" cy="45" rx="21.600" ry="24.600" fill="url(#pe1)"/><path d="M12.500 42C9 24 18 9.800 34 9.800 50 9.800 60 24 56 42 54 32 50 25 44 22.500 38 20 28 21 22 24 16 28 13.500 34 12.500 42Z" fill="#3a2c24"/><ellipse cx="24.500" cy="39.400" rx="3.800" ry="1.500" fill="#4a3428"/><ellipse cx="43.500" cy="39.400" rx="3.800" ry="1.500" fill="#4a3428"/><ellipse cx="34.400" cy="56.700" rx="7" ry="1.700" fill="#a8604c"/><ellipse cx="34" cy="48.500" rx="3.400" ry="2" fill="#cc9070"/></g></g></svg>
<svg class="a" style="left:963.2px;top:603.1px" width="62.6" height="96.9" viewBox="0 0 62.6 96.9"><defs><clipPath id="c6"><rect width="62.6" height="96.9"/></clipPath><filter id="f6" x="-5%" y="-5%" width="110%" height="110%"><feGaussianBlur stdDeviation="0.55"/></filter></defs><g clip-path="url(#c6)"><g filter="url(#f6)"><defs><radialGradient id="pg1" cx="0.55" cy="0.4" r="0.65"><stop offset="0" stop-color="#f4ccb2"/><stop offset="0.6" stop-color="#ecc0a4"/><stop offset="1" stop-color="#d09878"/></radialGradient><linearGradient id="pg2" x1="0" y1="0" x2="1" y2="1"><stop offset="0" stop-color="#5a3a2a"/><stop offset="0.5" stop-color="#4a2e22"/><stop offset="1" stop-color="#6e4a34"/></linearGradient></defs><rect width="63" height="97" fill="#d8d2cc"/><rect x="50" y="0" width="13" height="97" fill="#dcd8d4"/><path d="M0 97V0H44C52 4 56 14 56 24L30 8 21 30 19 58 25 72 17 97Z" fill="url(#pg2)"/><path d="M4 40C8 50 6 70 10 97H0V30Z" fill="#7a5640"/><path d="M21 60L48 66 44 84 22 74Z" fill="#e4b49c"/><path d="M12 97L16 73C24 70 36 76 46 82L63 96V97Z" fill="#0e4840"/><path d="M22 78C30 78 40 84 48 92L30 94Z" fill="#1a6a5c"/><ellipse cx="37" cy="34.700" rx="19.600" ry="29" fill="url(#pg1)" transform="rotate(-7 37 35)"/><path d="M20 40C16 22 22 6 36 4 28 10 24 20 24 32 23 40 21 48 21 56Z" fill="#5c3c2e"/><ellipse cx="31.800" cy="32.400" rx="3.800" ry="1.600" fill="#5a4236" transform="rotate(-10 31.800 32.400)"/><ellipse cx="49" cy="27.700" rx="3.200" ry="1.500" fill="#5a4236" transform="rotate(-10 49 27.700)"/><ellipse cx="45.300" cy="48.300" rx="6" ry="2" fill="#e07868" transform="rotate(-14 45.300 48.300)"/><ellipse cx="45" cy="39" rx="2.400" ry="2" fill="#e0a88c"/></g></g></svg>
<!-- sec_thumbs -->
<div class="a" style="left:34.9px;top:243.6px;width:137.6px;height:77.6px;background:linear-gradient(180deg,#92d050 0%,#9dc992 36%,#a4c4b4 55%,#a9bde6 74%,#b4c4e9 87%,#c7d3ef 100%);border-radius:3px;overflow:hidden;box-shadow:0 1px 2px rgba(0,0,0,0.25);"><span class="t" style="left:39.40px;top:4px;font-size:2.9px;font-weight:700;font-style:italic;color:#1a1a1a;font-family:'Liberation Serif','DejaVu Serif',serif;transform:scaleX(0.8915);-webkit-text-stroke:0.18px currentColor;">Одеський національний технологічний університет</span><span class="t" style="left:28.90px;top:7px;font-size:2.9px;font-weight:700;font-style:italic;color:#1a1a1a;font-family:'Liberation Serif','DejaVu Serif',serif;transform:scaleX(0.9378);-webkit-text-stroke:0.18px currentColor;">Академія економічних наук Молдови (AESM), (Республіка Молдова)</span><span class="t" style="left:43.40px;top:10px;font-size:2.9px;font-weight:700;font-style:italic;color:#1a1a1a;font-family:'Liberation Serif','DejaVu Serif',serif;transform:scaleX(0.8477);-webkit-text-stroke:0.18px currentColor;">Бухарестський університет «Artifex» (Румунія)</span><span class="t" style="left:28.90px;top:13px;font-size:2.9px;font-weight:700;font-style:italic;color:#1a1a1a;font-family:'Liberation Serif','DejaVu Serif',serif;transform:scaleX(0.8897);-webkit-text-stroke:0.18px currentColor;">Варненський університет менеджменту (VUM), (Республіка Болгарія)</span><span class="t" style="left:28.40px;top:16px;font-size:2.9px;font-weight:700;font-style:italic;color:#1a1a1a;font-family:'Liberation Serif','DejaVu Serif',serif;transform:scaleX(1.0435);-webkit-text-stroke:0.18px currentColor;">Вища школа з безпеки і захисту життя, (Республіка Сербія)</span><span class="t" style="left:32.90px;top:19px;font-size:2.9px;font-weight:700;font-style:italic;color:#1a1a1a;font-family:'Liberation Serif','DejaVu Serif',serif;transform:scaleX(0.9351);-webkit-text-stroke:0.18px currentColor;">Кишинівський технічний університет (Республіка Молдова)</span><span class="t" style="left:41.90px;top:22px;font-size:2.9px;font-weight:700;font-style:italic;color:#1a1a1a;font-family:'Liberation Serif','DejaVu Serif',serif;transform:scaleX(0.9504);-webkit-text-stroke:0.18px currentColor;">Жешувська політехніка (Республіка Польща)</span><span class="t" style="left:24.40px;top:25px;font-size:2.9px;font-weight:700;font-style:italic;color:#1a1a1a;font-family:'Liberation Serif','DejaVu Serif',serif;transform:scaleX(0.8947);-webkit-text-stroke:0.18px currentColor;">Батумський державний університет ім. Шота Руставелі, (Республіка Грузія)</span><span class="t" style="left:2.40px;top:28px;font-size:2.9px;font-weight:700;font-style:italic;color:#1a1a1a;font-family:'Liberation Serif','DejaVu Serif',serif;transform:scaleX(0.8433);-webkit-text-stroke:0.18px currentColor;">Навчально-науковий інститут готельно-ресторанного та туристичного бізнесу та економіки ім. О.О. Преображенського</span><span class="t" style="left:44.90px;top:31px;font-size:2.9px;font-weight:700;font-style:italic;color:#1a1a1a;font-family:'Liberation Serif','DejaVu Serif',serif;transform:scaleX(0.8629);-webkit-text-stroke:0.18px currentColor;">Кафедра туристичного бізнесу та рекреації</span><span class="t" style="left:7.05px;top:45px;font-size:6.4px;font-weight:700;color:#111;font-family:'Liberation Serif','DejaVu Serif',serif;transform:scaleX(0.8906);-webkit-text-stroke:0.18px currentColor;">МІЖНАРОДНА ОЛІМПІАДА З РЕКРЕАЛОГІЇ</span><span class="t" style="left:53.50px;top:54px;font-size:4.2px;font-weight:700;color:#111;font-family:'Liberation Serif','DejaVu Serif',serif;transform:scaleX(1.0974);-webkit-text-stroke:0.18px currentColor;">12-16.05.2025р.</span><span class="t" style="left:57.00px;top:70px;font-size:4.2px;font-weight:700;color:#111;font-family:'Liberation Serif','DejaVu Serif',serif;transform:scaleX(1.1013);-webkit-text-stroke:0.18px currentColor;">Одеса-2025</span><svg class="a" style="left:3.6px;top:5px;" width="19" height="15.4" viewBox="0 0 19 15.4"><path d="M6 3.4H13V10C13 12.4 11 13.6 9.5 14.2 8 13.6 6 12.4 6 10Z" fill="#3f9a4a" stroke="#b8962e" stroke-width="0.7"/><path d="M8 5H11V9.6L9.5 11 8 9.6Z" fill="#e6c64a"/><path d="M9.5 0.4L11.2 2.4H7.8Z" fill="#c23b3b"/><rect x="8.3" y="2" width="2.4" height="1.6" fill="#d24a4a"/><path d="M2.6 3.6C1.6 6 1.8 10 3.4 12.6L5.4 11V4.4ZM16.4 3.6C17.4 6 17.2 10 15.6 12.6L13.6 11V4.4Z" fill="#d9d2c0" stroke="#9a927c" stroke-width="0.4"/><path d="M1.4 14.4C5 13.2 14 13.2 17.6 14.4" fill="none" stroke="#6aa84f" stroke-width="1"/></svg></div>
<div class="a" style="left:34.9px;top:338.2px;width:137.6px;height:77.6px;background:linear-gradient(180deg,#92d050 0%,#9dc992 36%,#a4c4b4 55%,#a9bde6 74%,#b4c4e9 87%,#c7d3ef 100%);border-radius:3px;overflow:hidden;box-shadow:0 1px 2px rgba(0,0,0,0.25);"><span class="t" style="left:51.50px;top:5px;font-size:5.4px;font-weight:700;color:#111;font-family:'Liberation Serif','DejaVu Serif',serif;transform:scaleX(0.9482);-webkit-text-stroke:0.18px currentColor;">Склад журі:</span><span class="t" style="left:3.00px;top:17px;font-size:2.9px;font-weight:700;font-style:italic;color:#111;font-family:'Liberation Serif','DejaVu Serif',serif;transform:scaleX(0.5783);-webkit-text-stroke:0.18px currentColor;">Голова журі:</span><span class="t" style="left:3.00px;top:22px;font-size:2.9px;font-weight:700;font-style:italic;color:#111;font-family:'Liberation Serif','DejaVu Serif',serif;transform:scaleX(0.7419);-webkit-text-stroke:0.18px currentColor;">Дзюбенко Н.О.</span><span class="t" style="left:18.00px;top:23px;font-size:2.6px;color:#333;font-family:'Liberation Serif','DejaVu Serif',serif;transform:scaleX(1.0878);-webkit-text-stroke:0.18px currentColor;">– доктор економічних наук, професор, завідувач</span><span class="t" style="left:3.00px;top:25px;font-size:2.6px;color:#333;font-family:'Liberation Serif','DejaVu Serif',serif;transform:scaleX(0.9574);-webkit-text-stroke:0.18px currentColor;">кафедри туристичного бізнесу та рекреації Одеського національного</span><span class="t" style="left:3.00px;top:28px;font-size:2.6px;color:#333;font-family:'Liberation Serif','DejaVu Serif',serif;-webkit-text-stroke:0.18px currentColor;">технологічного університету, (Україна);</span><span class="t" style="left:3.00px;top:52px;font-size:2.9px;font-weight:700;font-style:italic;color:#111;font-family:'Liberation Serif','DejaVu Serif',serif;transform:scaleX(0.8576);-webkit-text-stroke:0.18px currentColor;">Секретар журі:</span><span class="t" style="left:3.00px;top:57px;font-size:2.9px;font-weight:700;font-style:italic;color:#111;font-family:'Liberation Serif','DejaVu Serif',serif;transform:scaleX(0.7444);-webkit-text-stroke:0.18px currentColor;">Іванова Р.Р.</span><span class="t" style="left:15.40px;top:58px;font-size:2.6px;color:#333;font-family:'Liberation Serif','DejaVu Serif',serif;transform:scaleX(0.9705);-webkit-text-stroke:0.18px currentColor;">– асистент кафедри туристичного бізнесу та рекреації</span><span class="t" style="left:3.00px;top:61px;font-size:2.6px;color:#333;font-family:'Liberation Serif','DejaVu Serif',serif;transform:scaleX(0.9723);-webkit-text-stroke:0.18px currentColor;">Одеського національного технологічного університету, (Україна)</span><span class="t" style="left:6.00px;top:75px;font-size:2.4px;color:#333;font-family:'Liberation Serif','DejaVu Serif',serif;transform:scaleX(0.9251);-webkit-text-stroke:0.18px currentColor;">Члени МЖРУ: Levitchi I. ing. S.R.M. Plop</span><svg class="a" style="left:94px;top:7.6px;" width="16.4" height="21.2" viewBox="0 0 16.4 21.2"><defs><filter id="tb1"><feGaussianBlur stdDeviation="0.45"/></filter><clipPath id="tc1"><rect width="16.4" height="21.2"/></clipPath></defs><g clip-path="url(#tc1)"><g filter="url(#tb1)"><rect width="16.4" height="21.2" fill="#eed995"/><ellipse cx="8" cy="9" rx="7" ry="8.4" fill="#2a1c18"/><ellipse cx="8.2" cy="9.4" rx="3.4" ry="4.4" fill="#d9a88c"/><path d="M0 21.2V17C3 15 5 14.4 8 17 11 14.4 13 15 16.4 17V21.2Z" fill="#3a6fb0"/><path d="M5.6 14.6L8 18.6 10.6 14.6Z" fill="#d9a88c"/></g></g></svg><svg class="a" style="left:94px;top:45px;" width="16.4" height="22.4" viewBox="0 0 16.4 22.4"><defs><filter id="tb2"><feGaussianBlur stdDeviation="0.45"/></filter><clipPath id="tc2"><rect width="16.4" height="22.4"/></clipPath></defs><g clip-path="url(#tc2)"><g filter="url(#tb2)"><rect width="16.4" height="22.4" fill="#c9b8b0"/><rect x="9" y="0" width="7.4" height="7" fill="#79c0ea"/><path d="M1 22.4C0 12 2 2 8.4 2 15 2 16.4 12 15.6 22.4Z" fill="#1c1416"/><ellipse cx="7.4" cy="11.4" rx="3.6" ry="5" fill="#d6a690"/><path d="M4.4 16L7.6 22.4H10L9.6 15Z" fill="#cfa088"/></g></g></svg></div>
<div class="a" style="left:31.5px;top:428.9px;width:144.6px;height:85px;background:#b5301a;border-radius:6px;"></div>
<div class="a" style="left:34.9px;top:432.6px;width:137.6px;height:77.6px;border-radius:3px;overflow:hidden;"><div class="a" style="left:0;top:0;width:1600px;height:900px;-webkit-text-stroke:0.9px #000;transform-origin:0 0;transform:scale(0.17068) translate(-336.4px,-253.8px)"><div class="a" style="left:336.4px;top:253.8px;width:806.2px;height:453.6px;background:linear-gradient(180deg,#92d050 0%,#9dc992 36%,#a4c4b4 55%,#a9bde6 74%,#b4c4e9 87%,#c7d3ef 100%);"></div>
<div class="a" style="left:0;top:0;font-family:'Liberation Serif','DejaVu Serif',serif;font-size:15.85px;line-height:1;color:#0a0a0a">
<b class="a" style="left:382.5px;top:276px;font-style:italic;white-space:pre">1.</b>
<div class="a" style="left:404.5px;top:276px;width:422.3px;height:15.85px;white-space:normal;overflow:visible;text-align:justify;text-align-last:justify;"><b style="font-style:italic">Колеснікова Т.В.</b> – кандидат економічних наук, доцент,</div>
<div class="a" style="left:404.5px;top:295px;width:422.3px;height:15.85px;white-space:normal;overflow:visible;text-align:justify;text-align-last:justify;">провідний науковий співробітник, керівник відділу</div>
<div class="a" style="left:404.5px;top:314px;width:422.3px;height:15.85px;white-space:normal;overflow:visible;text-align:justify;text-align-last:justify;">«Соціальні дослідження та рівень життя» Національного</div>
<div class="a" style="left:404.5px;top:333px;width:422.3px;height:15.85px;white-space:normal;overflow:visible;text-align:justify;text-align-last:justify;">інституту економічних досліджень, Академія економічних</div>
<div class="a" style="left:404.5px;top:352px;width:422.3px;height:15.85px;white-space:normal;overflow:visible;white-space:pre;">наук Молдови (AESM), (Республіка Молдова);</div>
<b class="a" style="left:382.5px;top:371px;font-style:italic;white-space:pre">2.</b>
<div class="a" style="left:404.5px;top:371px;width:422.3px;height:15.85px;white-space:normal;overflow:visible;text-align:justify;text-align-last:justify;"><b style="font-style:italic">Крупіца І.В.</b> – доктор економічних наук, професор кафедри</div>
<div class="a" style="left:404.5px;top:391px;width:422.3px;height:15.85px;white-space:normal;overflow:visible;text-align:justify;text-align-last:justify;">туристичного бізнесу та рекреації Одеського національного</div>
<div class="a" style="left:404.5px;top:410px;width:422.3px;height:15.85px;white-space:normal;overflow:visible;white-space:pre;">технологічного університету, (Україна);</div>
<b class="a" style="left:382.5px;top:429px;font-style:italic;white-space:pre">3.</b>
<div class="a" style="left:404.5px;top:429px;width:422.3px;height:15.85px;white-space:normal;overflow:visible;text-align:justify;text-align-last:justify;"><b style="font-style:italic">Меліх О.О.</b> - доктор економічних наук, професор кафедри</div>
<div class="a" style="left:404.5px;top:448px;width:422.3px;height:15.85px;white-space:normal;overflow:visible;text-align:justify;text-align-last:justify;">туристичного бізнесу та рекреації Одеського національного</div>
<div class="a" style="left:404.5px;top:467px;width:422.3px;height:15.85px;white-space:normal;overflow:visible;white-space:pre;">технологічного університету, (Україна);</div>
<b class="a" style="left:382.5px;top:486px;font-style:italic;white-space:pre">4.</b>
<div class="a" style="left:404.5px;top:486px;width:422.3px;height:15.85px;white-space:normal;overflow:visible;text-align:justify;text-align-last:justify;"><b style="font-style:italic">Саркісян Г.О.</b> – доктор економічних наук, професор,</div>
<div class="a" style="left:404.5px;top:505px;width:422.3px;height:15.85px;white-space:normal;overflow:visible;text-align:justify;text-align-last:justify;">заступник директора ННІ ГРтаТБіЕ ім. О.О.</div>
<div class="a" style="left:404.5px;top:525px;width:422.3px;height:15.85px;white-space:normal;overflow:visible;text-align:justify;text-align-last:justify;">Преображенського Одеського національного технологічного</div>
<div class="a" style="left:404.5px;top:544px;width:422.3px;height:15.85px;white-space:normal;overflow:visible;white-space:pre;">університету, (Україна);</div>
<b class="a" style="left:382.5px;top:563px;font-style:italic;white-space:pre">5.</b>
<div class="a" style="left:404.5px;top:563px;width:422.3px;height:15.85px;white-space:normal;overflow:visible;text-align:justify;text-align-last:justify;"><b style="font-style:italic">Чобану Г.Г.</b> – доктор економічних наук, старший науковий</div>
<div class="a" style="left:404.5px;top:582px;width:422.3px;height:15.85px;white-space:normal;overflow:visible;text-align:justify;text-align-last:justify;">співробітник Національного інституту наукових досліджень у</div>
<div class="a" style="left:404.5px;top:601px;width:422.3px;height:15.85px;white-space:normal;overflow:visible;text-align:justify;text-align-last:justify;">галузі праці та соціального захисту (INCSMPS) та</div>
<div class="a" style="left:404.5px;top:620px;width:422.3px;height:15.85px;white-space:normal;overflow:visible;white-space:pre;">Бухарестського університету «Artifex» (Румунія);</div>
<b class="a" style="left:382.5px;top:640px;font-style:italic;white-space:pre">6.</b>
<div class="a" style="left:404.5px;top:640px;width:422.3px;height:15.85px;white-space:normal;overflow:visible;text-align:justify;text-align-last:justify;"><b style="font-style:italic">Шекера С.С.</b> – кандидат економічних наук, доцент кафедри</div>
<div class="a" style="left:404.5px;top:659px;width:422.3px;height:15.85px;white-space:normal;overflow:visible;text-align:justify;text-align-last:justify;">туристичного бізнесу та рекреації Одеського національного</div>
<div class="a" style="left:404.5px;top:678px;width:422.3px;height:15.85px;white-space:normal;overflow:visible;white-space:pre;">технологічного університету, (Україна)</div>
</div>
<svg class="a" style="left:850px;top:270.1px" width="73" height="81" viewBox="0 0 73 81"><defs><clipPath id="ct1"><rect width="73" height="81"/></clipPath><filter id="ft1" x="-5%" y="-5%" width="110%" height="110%"><feGaussianBlur stdDeviation="0.55"/></filter></defs><g clip-path="url(#ct1)"><g filter="url(#ft1)"><defs><radialGradient id="tpa1" cx="0.5" cy="0.4" r="0.6"><stop offset="0" stop-color="#e9b79f"/><stop offset="0.7" stop-color="#d9a088"/><stop offset="1" stop-color="#c48a72"/></radialGradient><radialGradient id="tpa2" cx="0.6" cy="0.2" r="0.8"><stop offset="0" stop-color="#dcc090"/><stop offset="0.6" stop-color="#c29a62"/><stop offset="1" stop-color="#a07a48"/></radialGradient><linearGradient id="tpa3" x1="0" y1="0" x2="1" y2="0"><stop offset="0" stop-color="#8a5a26"/><stop offset="0.5" stop-color="#a2702f"/><stop offset="1" stop-color="#8c5c28"/></linearGradient></defs><rect width="73" height="81" fill="#cbc9ab"/><rect x="0" y="0" width="73" height="6" fill="#c2c0a0"/><rect x="11" y="15" width="61" height="42" fill="url(#tpa3)"/><rect x="14" y="18" width="3" height="38" fill="#7c5022"/><rect x="66" y="18" width="3" height="38" fill="#7c5022"/><rect x="19" y="33" width="7.5" height="16" fill="#cdbf9c"/><rect x="55" y="37" width="7" height="8" fill="#d6caa6"/><rect x="0" y="51" width="14" height="22" fill="#9c6c42"/><rect x="11" y="55" width="20" height="10" fill="#8a5c30"/><rect x="56" y="53" width="15" height="14" fill="#5a9e98"/><path d="M24 50C19 40 20 22 26 14 32 6 46 5 52 12 59 20 60 36 56 47 54 52 50 50 49 44L48 24 30 24 31 44C30 50 27 54 24 50Z" fill="url(#tpa2)"/><path d="M31 12C33 9 37 8 40 9 38 11 36 14 35 17Z" fill="#8a6a40"/><rect x="31" y="46" width="17" height="16" fill="#d6a48c"/><path d="M0 81V68C6 64 14 61 22 57L28 52 39 58 52 52 58 57C64 60 70 64 73 69V81Z" fill="#f4f0f6"/><path d="M8 81C10 72 14 66 20 62L18 81ZM60 62C66 66 70 72 72 81H62Z" fill="#e0d8e8"/><path d="M30 55L38.500 80 50 57 46 52H33Z" fill="#dbaa92"/><path d="M38 66L38.500 80 40 66Z" fill="#b8867a"/><ellipse cx="39.5" cy="34" rx="12.4" ry="16.6" fill="url(#tpa1)"/><path d="M27 30C28 20 33 16 40 16 47 16 52 21 52.500 30 50 24 46 21 41 21 35 21 30 24 27 30Z" fill="#c8a06a"/><ellipse cx="32.6" cy="29.600" rx="2.600" ry="1.100" fill="#5a4a4a"/><ellipse cx="45.4" cy="29.600" rx="2.600" ry="1.100" fill="#5a4a4a"/><ellipse cx="39" cy="37" rx="2.400" ry="1.400" fill="#cf8a78"/><ellipse cx="38.800" cy="42.600" rx="4.200" ry="1.300" fill="#b86868"/></g></g></svg>
<svg class="a" style="left:955.2px;top:340.1px" width="62.7" height="89.8" viewBox="0 0 62.7 89.8"><defs><clipPath id="ct2"><rect width="62.7" height="89.8"/></clipPath><filter id="ft2" x="-5%" y="-5%" width="110%" height="110%"><feGaussianBlur stdDeviation="0.55"/></filter></defs><g clip-path="url(#ct2)"><g filter="url(#ft2)"><defs><radialGradient id="tpb1" cx="0.6" cy="0.45" r="0.65"><stop offset="0" stop-color="#deb292"/><stop offset="0.6" stop-color="#c8987c"/><stop offset="1" stop-color="#a87458"/></radialGradient><radialGradient id="tpb2" cx="0.7" cy="0.35" r="0.7"><stop offset="0" stop-color="#6e4228"/><stop offset="0.5" stop-color="#472a1c"/><stop offset="1" stop-color="#2e1a12"/></radialGradient></defs><rect width="63" height="90" fill="#15110f"/><rect x="57" y="12" width="6" height="70" fill="#a9a5b9"/><path d="M50 8L57 14V40L52 30Z" fill="#2a2a34"/><rect x="39" y="41.600" width="17" height="11" fill="#b8703a"/><rect x="39" y="52" width="18" height="5" fill="#2a1c14"/><path d="M0 60V0H40C50 4 52 18 50 32 48 44 44 52 38 56L8 58Z" fill="url(#tpb2)"/><path d="M36 6C44 8 49 18 48 30 47 40 44 48 40 52 42 40 42 24 36 6Z" fill="#7a4a2c"/><path d="M0 90V58C8 54 18 54 26 58L44 64 48 90Z" fill="#c9b999"/><path d="M0 62C6 60 14 60 20 64L16 70 0 68Z" fill="#b8a482"/><path d="M40 56C50 52 58 58 60 70V90H44Z" fill="#e2deda"/><ellipse cx="22.5" cy="29" rx="15.4" ry="20" fill="url(#tpb1)"/><rect x="12" y="44" width="20" height="14" fill="#b88464"/><path d="M6 30C6 16 12 9 22 9 30 9 36 12 38 20 32 15 26 14 20 15 12 17 8 22 6 30Z" fill="#3a2218"/><ellipse cx="17" cy="23.600" rx="3.200" ry="1.300" fill="#4a3026"/><ellipse cx="31" cy="22.600" rx="3" ry="1.300" fill="#4a3026"/><ellipse cx="27.500" cy="40.500" rx="5" ry="2" fill="#96483e"/><ellipse cx="28" cy="32" rx="2.400" ry="3" fill="#d8a888"/><path d="M14 64C16 54 26 48 36 50 46 50 54 56 56 64 58 72 52 78 44 78L24 80C16 78 13 72 14 64Z" fill="#d4a488"/><path d="M22 54C28 50 38 50 46 54 40 54 30 56 24 60Z" fill="#e8c6aa"/><path d="M16 70L12 88H26L30 74Z" fill="#cc9c80"/><path d="M44 66L62 90H50L38 76Z" fill="#d8aa90"/><rect x="9.500" y="79.500" width="10" height="7.600" rx="1" fill="#6aa6d2" transform="rotate(8 14 83)"/><rect x="19" y="82" width="5.600" height="6" fill="#1a1a22" transform="rotate(8 22 85)"/></g></g></svg>
<svg class="a" style="left:850px;top:416.1px" width="59.8" height="88.7" viewBox="0 0 59.8 88.7"><defs><clipPath id="ct3"><rect width="59.8" height="88.7"/></clipPath><filter id="ft3" x="-5%" y="-5%" width="110%" height="110%"><feGaussianBlur stdDeviation="0.55"/></filter></defs><g clip-path="url(#ct3)"><g filter="url(#ft3)"><defs><radialGradient id="tpc1" cx="0.5" cy="0.4" r="0.65"><stop offset="0" stop-color="#eec2a6"/><stop offset="0.6" stop-color="#e2ae92"/><stop offset="1" stop-color="#c48868"/></radialGradient><linearGradient id="tpc2" x1="0" y1="0" x2="1" y2="0"><stop offset="0" stop-color="#b4682c"/><stop offset="0.6" stop-color="#c67a34"/><stop offset="1" stop-color="#b86e2e"/></linearGradient></defs><rect width="60" height="89" fill="url(#tpc2)"/><rect x="0" y="0" width="16" height="70" fill="#a8602c"/><rect x="5" y="0" width="3" height="68" fill="#915226"/><rect x="15" y="0" width="1.600" height="66" fill="#8a4e24"/><path d="M13 36C11 18 20 9 32 9 44 9 52 18 50 38 48 30 44 24 40 22L22 22C18 26 15 30 13 36Z" fill="#2a2420"/><rect x="20" y="54" width="22" height="18" fill="#d8a080"/><path d="M0 89V68C6 64 12 62 16 60L30 74 42 86 44 62 48 60C52 61 56 61 60 61V89Z" fill="#e85c44"/><path d="M0 89V74C6 70 12 70 18 74L14 89Z" fill="#dc5440"/><path d="M20 62L42 88 43 62Z" fill="#dba588"/><ellipse cx="31" cy="40" rx="18" ry="21.600" fill="url(#tpc1)"/><path d="M14 30C15 22 22 17 31 17 40 17 47 20 48.500 30 45 23 39 20 31 20 24 20 18 23 14 30Z" fill="#2e2622"/><ellipse cx="24.500" cy="36" rx="3.400" ry="1.300" fill="#4a342a"/><ellipse cx="41" cy="36.600" rx="3.200" ry="1.300" fill="#4a342a"/><ellipse cx="33.400" cy="51" rx="6" ry="2" fill="#b82c2c"/><ellipse cx="33" cy="43.500" rx="2.600" ry="1.600" fill="#d89a7c"/></g></g></svg>
<svg class="a" style="left:950.3px;top:473.3px" width="88.1" height="85.5" viewBox="0 0 88.1 85.5"><defs><clipPath id="ct4"><rect width="88.1" height="85.5"/></clipPath><filter id="ft4" x="-5%" y="-5%" width="110%" height="110%"><feGaussianBlur stdDeviation="0.55"/></filter></defs><g clip-path="url(#ct4)"><g filter="url(#ft4)"><defs><radialGradient id="tpd1" cx="0.45" cy="0.4" r="0.65"><stop offset="0" stop-color="#f4c8b0"/><stop offset="0.65" stop-color="#ecbaa2"/><stop offset="1" stop-color="#d09880"/></radialGradient></defs><rect width="88" height="86" fill="#d6d2cc"/><rect x="0" y="0" width="88" height="12" fill="#c4c0bc"/><rect x="0" y="12" width="64" height="14" fill="#cfccc8"/><rect x="14" y="16" width="12" height="8" fill="#b4b2b0"/><rect x="0" y="26" width="30" height="20" fill="#e2d6ba"/><rect x="3" y="40" width="28" height="19" fill="#7a7264"/><rect x="8" y="44" width="10" height="6" fill="#c8c8c4"/><rect x="14" y="52" width="12" height="8" fill="#8a5a34"/><rect x="64" y="0" width="7.500" height="57" fill="#8c8882"/><rect x="71.500" y="0" width="16.500" height="26" fill="#d4d2ce"/><rect x="71.500" y="26" width="16.500" height="24" fill="#e6dec6"/><rect x="71.500" y="50" width="16.500" height="36" fill="#ecebe6"/><rect x="74" y="38" width="8" height="10" fill="#c8c4b4"/><rect x="0" y="53" width="8.500" height="33" fill="#151515"/><ellipse cx="60.500" cy="46" rx="7.500" ry="8" fill="#262020"/><path d="M27 36C25 18 32 8 44 8 56 8 62 18 60 38 56 24 50 18 42 18 34 18 30 26 27 36Z" fill="#221c1c"/><rect x="34" y="46" width="20" height="16" fill="#e4b09a"/><path d="M5 86C6 72 14 64 28 60L36 55 44 58 54 55C66 58 80 66 86 86Z" fill="#e8c6be"/><path d="M50 62C60 62 70 70 74 86H60Z" fill="#dcb4ae"/><ellipse cx="42.500" cy="33" rx="15" ry="19.400" fill="url(#tpd1)"/><path d="M28 28C29 16 36 12 44 12 52 12 57 18 58 28 54 20 48 17 42 17 36 17 31 21 28 28Z" fill="#241e1e"/><ellipse cx="35" cy="28.600" rx="3.200" ry="1.400" fill="#3a2a28"/><ellipse cx="49.500" cy="28.600" rx="3.200" ry="1.400" fill="#3a2a28"/><path d="M34.500 41C38 45.500 44 45.500 47.500 41 43 42.500 39 42.500 34.500 41Z" fill="#d8342e"/><ellipse cx="41" cy="36" rx="2.400" ry="1.600" fill="#e0a48e"/></g></g></svg>
<svg class="a" style="left:850.1px;top:546.9px" width="70.2" height="99.5" viewBox="0 0 70.2 99.5"><defs><clipPath id="ct5"><rect width="70.2" height="99.5"/></clipPath><filter id="ft5" x="-5%" y="-5%" width="110%" height="110%"><feGaussianBlur stdDeviation="0.55"/></filter></defs><g clip-path="url(#ct5)"><g filter="url(#ft5)"><defs><radialGradient id="tpe1" cx="0.5" cy="0.45" r="0.62"><stop offset="0" stop-color="#e8b898"/><stop offset="0.65" stop-color="#dca888"/><stop offset="1" stop-color="#c08a68"/></radialGradient></defs><rect width="71" height="100" fill="#f4efe4"/><rect x="0" y="0" width="20" height="60" fill="#f8f5ee"/><rect x="22" y="62" width="28" height="14" fill="#d29c7c"/><path d="M0 100V79C8 76 16 74 22 70.500L34 80 48 70.500C54 74 62 76 71 80V100Z" fill="#d6d6e6"/><rect x="3" y="80" width="1.300" height="20" fill="#a8a8ca"/><rect x="7.5" y="78.5" width="1.300" height="21.5" fill="#a8a8ca"/><rect x="12" y="77" width="1.300" height="23" fill="#a8a8ca"/><rect x="16.5" y="76" width="1.300" height="24" fill="#a8a8ca"/><rect x="21" y="75" width="1.300" height="25" fill="#a8a8ca"/><rect x="25.5" y="77" width="1.300" height="23" fill="#a8a8ca"/><rect x="44" y="77" width="1.300" height="23" fill="#a8a8ca"/><rect x="48.5" y="75" width="1.300" height="25" fill="#a8a8ca"/><rect x="53" y="76" width="1.300" height="24" fill="#a8a8ca"/><rect x="57.5" y="77" width="1.300" height="23" fill="#a8a8ca"/><rect x="62" y="78.5" width="1.300" height="21.5" fill="#a8a8ca"/><rect x="66.5" y="80" width="1.300" height="20" fill="#a8a8ca"/><path d="M22 70.500L34 81 30 88 20 76ZM48 70.500L34 81 39 88 50 76Z" fill="#e4e4f0"/><path d="M30.800 79.500H39.300L38.600 87.300 39.600 100H30.600L31.600 87.300Z" fill="#1c2030"/><ellipse cx="12.500" cy="50" rx="2.600" ry="6" fill="#d09878"/><ellipse cx="56" cy="50" rx="2.600" ry="6" fill="#d09878"/><ellipse cx="34.200" cy="45" rx="21.600" ry="24.600" fill="url(#tpe1)"/><path d="M12.500 42C9 24 18 9.800 34 9.800 50 9.800 60 24 56 42 54 32 50 25 44 22.500 38 20 28 21 22 24 16 28 13.500 34 12.500 42Z" fill="#3a2c24"/><ellipse cx="24.500" cy="39.400" rx="3.800" ry="1.500" fill="#4a3428"/><ellipse cx="43.500" cy="39.400" rx="3.800" ry="1.500" fill="#4a3428"/><ellipse cx="34.400" cy="56.700" rx="7" ry="1.700" fill="#a8604c"/><ellipse cx="34" cy="48.500" rx="3.400" ry="2" fill="#cc9070"/></g></g></svg>
<svg class="a" style="left:963.2px;top:603.1px" width="62.6" height="96.9" viewBox="0 0 62.6 96.9"><defs><clipPath id="ct6"><rect width="62.6" height="96.9"/></clipPath><filter id="ft6" x="-5%" y="-5%" width="110%" height="110%"><feGaussianBlur stdDeviation="0.55"/></filter></defs><g clip-path="url(#ct6)"><g filter="url(#ft6)"><defs><radialGradient id="tpg1" cx="0.55" cy="0.4" r="0.65"><stop offset="0" stop-color="#f4ccb2"/><stop offset="0.6" stop-color="#ecc0a4"/><stop offset="1" stop-color="#d09878"/></radialGradient><linearGradient id="tpg2" x1="0" y1="0" x2="1" y2="1"><stop offset="0" stop-color="#5a3a2a"/><stop offset="0.5" stop-color="#4a2e22"/><stop offset="1" stop-color="#6e4a34"/></linearGradient></defs><rect width="63" height="97" fill="#d8d2cc"/><rect x="50" y="0" width="13" height="97" fill="#dcd8d4"/><path d="M0 97V0H44C52 4 56 14 56 24L30 8 21 30 19 58 25 72 17 97Z" fill="url(#tpg2)"/><path d="M4 40C8 50 6 70 10 97H0V30Z" fill="#7a5640"/><path d="M21 60L48 66 44 84 22 74Z" fill="#e4b49c"/><path d="M12 97L16 73C24 70 36 76 46 82L63 96V97Z" fill="#0e4840"/><path d="M22 78C30 78 40 84 48 92L30 94Z" fill="#1a6a5c"/><ellipse cx="37" cy="34.700" rx="19.600" ry="29" fill="url(#tpg1)" transform="rotate(-7 37 35)"/><path d="M20 40C16 22 22 6 36 4 28 10 24 20 24 32 23 40 21 48 21 56Z" fill="#5c3c2e"/><ellipse cx="31.800" cy="32.400" rx="3.800" ry="1.600" fill="#5a4236" transform="rotate(-10 31.800 32.400)"/><ellipse cx="49" cy="27.700" rx="3.200" ry="1.500" fill="#5a4236" transform="rotate(-10 49 27.700)"/><ellipse cx="45.300" cy="48.300" rx="6" ry="2" fill="#e07868" transform="rotate(-14 45.300 48.300)"/><ellipse cx="45" cy="39" rx="2.400" ry="2" fill="#e0a88c"/></g></g></svg></div></div>
<div class="a" style="left:34.9px;top:527.4px;width:137.6px;height:77.6px;background:linear-gradient(180deg,#92d050 0%,#9dc992 36%,#a4c4b4 55%,#a9bde6 74%,#b4c4e9 87%,#c7d3ef 100%);border-radius:3px;overflow:hidden;box-shadow:0 1px 2px rgba(0,0,0,0.25);"><div class="a" style="left:6.3px;top:7.8px;width:127.8px;height:63.4px;background:#ffffff;"></div><span class="t" style="left:43.70px;top:29px;font-size:10.6px;color:#ad4f88;transform:scaleX(1.0275);">university</span><span class="t" style="left:30.60px;top:21px;font-size:5.4px;font-weight:700;color:#ad4f88;transform:scaleX(1.1264);">state</span><span class="t" style="left:80.00px;top:20px;font-size:4.6px;color:#c184aa;transform:scaleX(0.9794);">pedagogical</span><span class="t" style="left:94.00px;top:24px;font-size:5.2px;color:#c184aa;transform:scaleX(1.0980);">national</span><span class="t" style="left:60.10px;top:28px;font-size:3.2px;color:#b76b98;transform:scaleX(0.9626);">technology</span><span class="t" style="left:65.10px;top:40px;font-size:3px;color:#c58aa8;transform:scaleX(0.8528);">polytechnic</span><span class="t" style="left:57.90px;top:47px;font-size:3px;color:#9a8a92;transform:scaleX(1.0351);">academy</span><span class="t" style="left:77.00px;top:43px;font-size:3px;color:#9a8a92;">kharkiv</span><span class="t" style="left:52.00px;top:22px;font-size:2.4px;color:#8a8a8a;transform:scaleX(1.0461);">economics</span><span class="t" style="left:66.60px;top:22px;font-size:2.4px;color:#8a8a8a;transform:scaleX(0.7258);">kyiv</span><span class="t" style="left:33.60px;top:24px;font-size:2.2px;color:#8a8a8a;transform:scaleX(1.8882);">lviv</span><span class="t" style="left:68.60px;top:45px;font-size:2.4px;color:#b0a0a8;transform:scaleX(0.8419);">mykola</span><span class="t" style="left:87.60px;top:46px;font-size:2.6px;color:#8a7a82;transform:scaleX(1.1160);">institute</span><span class="t" style="left:76.00px;top:53px;font-size:2.6px;color:#a8a0a4;transform:scaleX(0.9730);">kherson</span><span class="t" style="left:83.00px;top:57px;font-size:2.6px;color:#9a9094;transform:scaleX(1.0046);">medical</span><span class="t" style="left:94.00px;top:61px;font-size:2.4px;color:#8a8a8a;">polytechnic</span><div class="a" style="left:21.7px;top:16.799999999999997px;width:7.6px;height:1.3px;background:#f6cfc6;border-radius:0.6px;opacity:0.9;"></div><div class="a" style="left:76px;top:18.0px;width:8px;height:1.3px;background:#f6cfc6;border-radius:0.6px;opacity:0.9;"></div><div class="a" style="left:30.6px;top:29.799999999999997px;width:9.2px;height:1.3px;background:#f0b4b4;border-radius:0.6px;opacity:0.9;"></div><div class="a" style="left:18px;top:35.8px;width:14px;height:1.3px;background:#f0b4b4;border-radius:0.6px;opacity:0.9;"></div><div class="a" style="left:34px;top:39.0px;width:12px;height:1.3px;background:#f6cfc6;border-radius:0.6px;opacity:0.9;"></div><div class="a" style="left:47px;top:39.8px;width:6px;height:1.3px;background:#f0b4b4;border-radius:0.6px;opacity:0.9;"></div><div class="a" style="left:54px;top:42.4px;width:8px;height:1.3px;background:#f0b4b4;border-radius:0.6px;opacity:0.9;"></div><div class="a" style="left:94px;top:30.4px;width:14px;height:1.3px;background:#f6cfc6;border-radius:0.6px;opacity:0.9;"></div><div class="a" style="left:90px;top:38.0px;width:10px;height:1.3px;background:#f6cfc6;border-radius:0.6px;opacity:0.9;"></div><div class="a" style="left:87px;top:41.8px;width:14px;height:1.3px;background:#f6cfc6;border-radius:0.6px;opacity:0.9;"></div><div class="a" style="left:37px;top:49.0px;width:15px;height:1.3px;background:#f0b4b4;border-radius:0.6px;opacity:0.9;"></div><div class="a" style="left:35px;top:52.8px;width:16px;height:1.3px;background:#f6cfc6;border-radius:0.6px;opacity:0.9;"></div><div class="a" style="left:36px;top:56.199999999999996px;width:14px;height:1.3px;background:#f6cfc6;border-radius:0.6px;opacity:0.9;"></div><div class="a" style="left:87px;top:53.199999999999996px;width:7px;height:1.3px;background:#f0b4b4;border-radius:0.6px;opacity:0.9;"></div><div class="a" style="left:72px;top:60.199999999999996px;width:8px;height:1.3px;background:#f6cfc6;border-radius:0.6px;opacity:0.9;"></div><div class="a" style="left:48px;top:28.799999999999997px;width:9px;height:1.3px;background:#f0b4b4;border-radius:0.6px;opacity:0.9;"></div></div>
<div class="a" style="left:34.9px;top:622.0px;width:137.6px;height:77.6px;background:linear-gradient(180deg,#92d050 0%,#9dc992 36%,#a4c4b4 55%,#a9bde6 74%,#b4c4e9 87%,#c7d3ef 100%);border-radius:3px;overflow:hidden;box-shadow:0 1px 2px rgba(0,0,0,0.25);"><svg class="a" style="left:0px;top:0px;" width="137.6" height="77.6" viewBox="0 0 137.6 77.6"><rect x="15.8" y="2.70" width="121.8" height="0.5" fill="#f4f8ee" opacity="0.7"/><rect x="15.8" y="6.67" width="121.8" height="0.5" fill="#f4f8ee" opacity="0.7"/><rect x="15.8" y="10.64" width="121.8" height="0.5" fill="#f4f8ee" opacity="0.7"/><rect x="15.8" y="14.61" width="121.8" height="0.5" fill="#f4f8ee" opacity="0.7"/><rect x="15.8" y="18.58" width="121.8" height="0.5" fill="#f4f8ee" opacity="0.7"/><rect x="15.8" y="22.55" width="121.8" height="0.5" fill="#f4f8ee" opacity="0.7"/><rect x="15.8" y="26.52" width="121.8" height="0.5" fill="#f4f8ee" opacity="0.7"/><rect x="15.8" y="30.49" width="121.8" height="0.5" fill="#f4f8ee" opacity="0.7"/><rect x="20.6" y="32.0" width="2.4" height="2" fill="#3d6328"/><path d="M21.8 35.2L-0.2 57.2" stroke="#3a4f6e" stroke-width="0.7" fill="none"/><rect x="28.2" y="24.0" width="2.4" height="10" fill="#3d6328"/><path d="M29.4 35.2L-0.6 65.2" stroke="#3a4f6e" stroke-width="0.7" fill="none"/><rect x="36.2" y="20.0" width="2.4" height="14" fill="#3d6328"/><path d="M37.4 35.2L4.4 68.2" stroke="#3a4f6e" stroke-width="0.7" fill="none"/><rect x="44.2" y="31.0" width="2.4" height="3" fill="#3d6328"/><path d="M45.4 35.2L19.4 61.2" stroke="#3a4f6e" stroke-width="0.7" fill="none"/><rect x="51.9" y="31.0" width="2.4" height="3" fill="#3d6328"/><path d="M53.1 35.2L20.1 68.2" stroke="#3a4f6e" stroke-width="0.7" fill="none"/><rect x="59.9" y="29.0" width="2.4" height="5" fill="#3d6328"/><path d="M61.1 35.2L31.1 65.2" stroke="#3a4f6e" stroke-width="0.7" fill="none"/><rect x="67.6" y="31.0" width="2.4" height="3" fill="#3d6328"/><path d="M68.8 35.2L44.8 59.2" stroke="#3a4f6e" stroke-width="0.7" fill="none"/><rect x="75.6" y="20.0" width="2.4" height="14" fill="#3d6328"/><path d="M76.8 35.2L43.8 68.2" stroke="#3a4f6e" stroke-width="0.7" fill="none"/><rect x="83.6" y="28.0" width="2.4" height="6" fill="#3d6328"/><path d="M84.8 35.2L51.8 68.2" stroke="#3a4f6e" stroke-width="0.7" fill="none"/><rect x="91.6" y="31.6" width="2.4" height="2.4" fill="#3d6328"/><path d="M92.8 35.2L64.8 63.2" stroke="#3a4f6e" stroke-width="0.7" fill="none"/><rect x="98.9" y="29.0" width="2.4" height="5" fill="#3d6328"/><path d="M100.1 35.2L67.1 68.2" stroke="#3a4f6e" stroke-width="0.7" fill="none"/><rect x="106.6" y="29.0" width="2.4" height="5" fill="#3d6328"/><path d="M107.8 35.2L76.8 66.2" stroke="#3a4f6e" stroke-width="0.7" fill="none"/><rect x="114.6" y="31.0" width="2.4" height="3" fill="#3d6328"/><path d="M115.8 35.2L90.8 60.2" stroke="#3a4f6e" stroke-width="0.7" fill="none"/><rect x="122.6" y="31.6" width="2.4" height="2.4" fill="#3d6328"/><path d="M123.8 35.2L90.8 68.2" stroke="#3a4f6e" stroke-width="0.7" fill="none"/><rect x="130.2" y="5.0" width="2.4" height="29" fill="#3d6328"/><path d="M131.4 35.2L98.4 68.2" stroke="#3a4f6e" stroke-width="0.7" fill="none"/><rect x="15.8" y="33.8" width="121.8" height="0.7" fill="#5b7a48"/></svg></div>
<div class="a" style="left:34.9px;top:716.6px;width:137.6px;height:31.399999999999977px;background:linear-gradient(180deg,#92d050 0%,#98cc78 100%);border-radius:3px 3px 0 0;overflow:hidden;"><span class="t" style="left:15.95px;top:10px;font-size:4.4px;color:#1c1c1c;font-family:'Liberation Serif','DejaVu Serif',serif;transform:scaleX(1.1904);-webkit-text-stroke:0.18px currentColor;">Всього в олімпіаді зареєстровано 49 учасників.</span><span class="t" style="left:4.40px;top:21px;font-size:4.4px;color:#1c1c1c;font-family:'Liberation Serif','DejaVu Serif',serif;transform:scaleX(1.1628);-webkit-text-stroke:0.18px currentColor;">Згідно Положення про проведення Міжнародної олімпіади</span><span class="t" style="left:6.60px;top:28px;font-size:4.4px;color:#1c1c1c;font-family:'Liberation Serif','DejaVu Serif',serif;transform:scaleX(1.2437);-webkit-text-stroke:0.18px currentColor;">з рекреалогії Одеським національним технологічним</span></div>
<svg class="a" style="left:132.6px;top:470.6px;" width="10" height="15" viewBox="0 0 10 15"><path d="M0.7 0.8V11.8L3.4 9.4 5.3 13.8 7.1 13 5.2 8.8H8.8Z" fill="#fff" stroke="#111" stroke-width="0.9" stroke-linejoin="round"/></svg>
<!-- sec_gallery -->
<div class="a" style="left:1270.4px;top:438px;width:1px;height:26px;background:#bdbdbd;"></div>
<div class="a" style="left:1272.6px;top:438px;width:1px;height:26px;background:#bdbdbd;"></div>
<svg class="a" style="left:1279.1px;top:108.8px;overflow:hidden;border-top-left-radius:6px;" width="159.6" height="89.6" viewBox="0 0 160 90" preserveAspectRatio="none"><defs><filter id="bg00" x="-5%" y="-5%" width="110%" height="110%"><feGaussianBlur stdDeviation="1.3"/></filter><clipPath id="kg00"><rect width="160" height="90"/></clipPath></defs><g clip-path="url(#kg00)"><rect width="160" height="90" fill="#222222"/><g filter="url(#bg00)"><defs><radialGradient id="ga1" cx="0.5" cy="0.35" r="0.7"><stop offset="0" stop-color="#caa292"/><stop offset="0.6" stop-color="#b8887c"/><stop offset="1" stop-color="#946a62"/></radialGradient><linearGradient id="ga2" x1="0" y1="0" x2="1" y2="0"><stop offset="0" stop-color="#4a2c24"/><stop offset="0.35" stop-color="#2c1c1c"/><stop offset="1" stop-color="#241618"/></linearGradient><linearGradient id="ga3" x1="0" y1="0" x2="1" y2="0"><stop offset="0" stop-color="#f6f6f6"/><stop offset="0.55" stop-color="#9a9a9c"/><stop offset="1" stop-color="#2e2e30"/></linearGradient></defs><rect width="160" height="90" fill="#dcdad8"/><rect x="0" y="0" width="60" height="22" fill="#efeeed"/><rect x="9" y="32" width="24" height="38" fill="#b6bec6"/><rect x="0" y="66" width="44" height="24" fill="#c8c6c6"/><rect x="100" y="0" width="32" height="90" fill="#cdcdd0"/><rect x="104" y="30" width="22" height="40" fill="#b8babf"/><rect x="129.500" y="0" width="7" height="90" fill="#5a5a5e"/><rect x="136.500" y="0" width="14" height="90" fill="#f3f3f3"/><rect x="148" y="0" width="12" height="90" fill="url(#ga3)"/><path d="M30 90C32 70 30 52 36 34 42 14 50 2 68 0.500 86 0 96 12 100 30 104 48 104 62 110 74 114 82 120 86 124 90Z" fill="url(#ga2)"/><path d="M34 60C32 44 38 24 46 14 40 30 40 46 42 62Z" fill="#5e3628"/><path d="M16 90C24 78 36 72 48 70L92 68C106 72 118 80 124 90Z" fill="#2a1a1e"/><path d="M112 90L118 84 126 86 128 90Z" fill="#5a1c28"/><ellipse cx="65" cy="42" rx="18" ry="24.500" fill="url(#ga1)"/><ellipse cx="62" cy="68" rx="10" ry="7" fill="#8e645c"/><path d="M45 34C46 18 56 10 68 11 80 12 88 22 86 40 82 28 76 22 68 22 58 22 50 26 45 34Z" fill="#30201e"/><ellipse cx="63.400" cy="50.200" rx="6.400" ry="2.200" fill="#6a2028"/><ellipse cx="62" cy="43" rx="3" ry="2.200" fill="#a87a6e"/><path d="M46 33.500H82" stroke="#4c3c3c" stroke-width="1"/><ellipse cx="54" cy="36.500" rx="6.500" ry="5.200" fill="none" stroke="#4c3c3c" stroke-width="1"/><ellipse cx="72.500" cy="34.500" rx="6.500" ry="5.200" fill="none" stroke="#4c3c3c" stroke-width="1"/><ellipse cx="54" cy="36" rx="3" ry="1.200" fill="#3a2a2a"/><ellipse cx="72" cy="34.400" rx="3" ry="1.200" fill="#3a2a2a"/></g></g></svg>
<div class="a" style="left:1282.1px;top:177.8px;width:117.9px;height:18.9px;background:rgba(49,49,49,0.8);border-radius:4px;"></div><span class="t" style="left:1284.70px;top:182px;font-size:12.4px;color:#fff;transform:scaleX(1.0624);">Natalia Dobrianska</span>
<svg class="a" style="left:1439.1px;top:108.8px;overflow:hidden;border-top-right-radius:6px;" width="159.6" height="89.6" viewBox="0 0 160 90" preserveAspectRatio="none"><defs><filter id="bg01" x="-5%" y="-5%" width="110%" height="110%"><feGaussianBlur stdDeviation="0.8"/></filter><clipPath id="kg01"><rect width="160" height="90"/></clipPath></defs><g clip-path="url(#kg01)"><rect width="160" height="90" fill="#222222"/><g filter="url(#bg01)"><defs><radialGradient id="gb1" cx="0.5" cy="0.4" r="0.7"><stop offset="0" stop-color="#deac94"/><stop offset="0.6" stop-color="#d4a088"/><stop offset="1" stop-color="#b88068"/></radialGradient><radialGradient id="gb2" cx="0.5" cy="0.3" r="0.7"><stop offset="0" stop-color="#b86a38"/><stop offset="0.6" stop-color="#a05a30"/><stop offset="1" stop-color="#844424"/></radialGradient></defs><rect width="160" height="90" fill="#efe4d2"/><path d="M10 20C20 10 34 14 40 24M60 6C70 0 84 4 90 12M100 30C108 22 120 24 126 34M20 40C26 34 36 36 40 44" fill="none" stroke="#e4d6be" stroke-width="1.600"/><rect x="0" y="50" width="160" height="40" fill="#dfe6e6"/><rect x="0" y="49.200" width="129" height="1.800" fill="#f4f2ec"/><rect x="110" y="51" width="50" height="39" fill="#d0d8d8"/><rect x="129" y="0" width="31" height="48.500" fill="#6a3c2c"/><path d="M132 0H160V17L132 28Z" fill="#4a6088"/><path d="M137 0V26M144 0V23.500M151 0V21M158 0V18M132 6H160M132 13H160M132 20H150" stroke="#c8b060" stroke-width="1.300"/><path d="M137 0V26M151 0V21" stroke="#2c3c5c" stroke-width="0.600" transform="translate(3.500 0)"/><path d="M131 29L160 18V28L131 39Z" fill="#9a6444"/><rect x="131" y="39" width="29" height="9.500" fill="#7c4a34"/><path d="M21 90C32 78 50 72.500 64 72H96C116 73 138 80 148 90Z" fill="#6a6258"/><path d="M30 90L40 82M50 90L58 78M100 78L110 90M120 80L128 90" stroke="#8a8278" stroke-width="1.400"/><ellipse cx="79" cy="57" rx="21" ry="25" fill="url(#gb1)"/><path d="M57 55C52 32 60 15 79 15 98 15 106 32 101 54 100 48 97 44 92 46 86 42 80 48 74 46 68 44 61 47 57 55Z" fill="url(#gb2)"/><path d="M60.500 51.600H100" stroke="#161414" stroke-width="2"/><rect x="61.500" y="51.600" width="16.500" height="9" rx="2.200" fill="#c8907a" stroke="#161414" stroke-width="1.700"/><rect x="83" y="51.600" width="16.500" height="9" rx="2.200" fill="#c8907a" stroke="#161414" stroke-width="1.700"/><ellipse cx="70" cy="55.500" rx="3" ry="1.200" fill="#4a3430"/><ellipse cx="91" cy="55.500" rx="3" ry="1.200" fill="#4a3430"/><ellipse cx="80.500" cy="65" rx="4" ry="3.200" fill="#c48672"/></g></g></svg>
<div class="a" style="left:1442.1px;top:177.8px;width:133.4px;height:18.9px;background:rgba(49,49,49,0.8);border-radius:4px;"></div><svg class="a" style="left:1444.3px;top:180.0px;" width="14" height="14" viewBox="0 0 14 14"><ellipse cx="6.6" cy="5.8" rx="2.9" ry="5" fill="#ff5a5a"/><path d="M3.2 8.4C3.6 10.6 5 11.4 6.6 11.4 8.2 11.4 9.6 10.6 10 8.4" fill="none" stroke="#ff5a5a" stroke-width="1"/><rect x="5.9" y="10.8" width="1.4" height="1.6" fill="#ff5a5a"/><rect x="4" y="12" width="5.4" height="1.1" rx="0.5" fill="#ff5a5a"/><path d="M12.8 0.3L0.4 13.3" stroke="#4a4e50" stroke-width="2.6"/><path d="M13.1 0.1L0.1 13.5" stroke="#ff5a5a" stroke-width="1.25"/></svg><span class="t" style="left:1462.90px;top:182px;font-size:12.4px;color:#fff;transform:scaleX(1.0433);">Новикова Валерія</span>
<svg class="a" style="left:1279.1px;top:198.9px;overflow:hidden;" width="159.6" height="89.6" viewBox="0 0 160 90" preserveAspectRatio="none"><defs><filter id="bg10" x="-5%" y="-5%" width="110%" height="110%"><feGaussianBlur stdDeviation="1.2"/></filter><clipPath id="kg10"><rect width="160" height="90"/></clipPath></defs><g clip-path="url(#kg10)"><rect width="160" height="90" fill="#222222"/><g filter="url(#bg10)"><defs><radialGradient id="gc1" cx="0.5" cy="0.35" r="0.7"><stop offset="0" stop-color="#e4c8c0"/><stop offset="0.55" stop-color="#d6b2aa"/><stop offset="1" stop-color="#b89088"/></radialGradient><linearGradient id="gc2" x1="0" y1="0" x2="1" y2="0"><stop offset="0" stop-color="#fefefd"/><stop offset="0.3" stop-color="#fcfbf6"/><stop offset="0.45" stop-color="#f2eedc"/><stop offset="1" stop-color="#e6dfc8"/></linearGradient></defs><rect width="160" height="90" fill="url(#gc2)"/><path d="M14 90C26 80 44 74 60 72H102C120 74 140 82 150 90Z" fill="#7a726e"/><ellipse cx="55.500" cy="53" rx="3.400" ry="8" fill="#cca49c"/><ellipse cx="106" cy="53" rx="3.400" ry="8" fill="#cca49c"/><ellipse cx="81" cy="52" rx="25.500" ry="36" fill="url(#gc1)"/><path d="M55.500 46C52 26 64 13.500 81 13.500 98 13.500 110 26 106 46 103 34 96 26 81 25 66 26 59 34 55.500 46Z" fill="#8c8488"/><path d="M62 30C66 22 74 19 81 19 88 19 96 22 100 30 94 25 88 23.500 81 23.500 74 23.500 68 25 62 30Z" fill="#a49a9c"/><path d="M64 52.500C68 54 74 54 77 52.500M86 52.500C89 54 95 54 99 52.500" fill="none" stroke="#7a5a58" stroke-width="1.300"/><ellipse cx="81" cy="62" rx="5" ry="4" fill="#c89c94"/><ellipse cx="81" cy="75" rx="16" ry="9" fill="#c4a09a"/></g></g></svg>
<div class="a" style="left:1282.1px;top:267.9px;width:155.8px;height:18.9px;background:rgba(49,49,49,0.8);border-radius:4px;"></div><svg class="a" style="left:1284.3px;top:270.09999999999997px;" width="14" height="14" viewBox="0 0 14 14"><ellipse cx="6.6" cy="5.8" rx="2.9" ry="5" fill="#ff5a5a"/><path d="M3.2 8.4C3.6 10.6 5 11.4 6.6 11.4 8.2 11.4 9.6 10.6 10 8.4" fill="none" stroke="#ff5a5a" stroke-width="1"/><rect x="5.9" y="10.8" width="1.4" height="1.6" fill="#ff5a5a"/><rect x="4" y="12" width="5.4" height="1.1" rx="0.5" fill="#ff5a5a"/><path d="M12.8 0.3L0.4 13.3" stroke="#4a4e50" stroke-width="2.6"/><path d="M13.1 0.1L0.1 13.5" stroke="#ff5a5a" stroke-width="1.25"/></svg><span class="t" style="left:1302.90px;top:272px;font-size:12.4px;color:#fff;transform:scaleX(1.0473);">Олександр Камушков</span>
<svg class="a" style="left:1439.1px;top:198.9px;overflow:hidden;" width="159.6" height="89.6" viewBox="0 0 160 90" preserveAspectRatio="none"><defs><filter id="bg11" x="-5%" y="-5%" width="110%" height="110%"><feGaussianBlur stdDeviation="1.1"/></filter><clipPath id="kg11"><rect width="160" height="90"/></clipPath></defs><g clip-path="url(#kg11)"><rect width="160" height="90" fill="#222222"/><g filter="url(#bg11)"><defs><radialGradient id="gd1" cx="0.5" cy="0.4" r="0.7"><stop offset="0" stop-color="#d8a898"/><stop offset="0.6" stop-color="#cc9c8c"/><stop offset="1" stop-color="#ac7c6c"/></radialGradient><radialGradient id="gd2" cx="0.45" cy="0.3" r="0.75"><stop offset="0" stop-color="#eedfba"/><stop offset="0.55" stop-color="#d8c09a"/><stop offset="1" stop-color="#b89a70"/></radialGradient></defs><rect width="160" height="90" fill="#c5b1a5"/><rect x="116" y="0" width="44" height="90" fill="#d9cdc1"/><rect x="0" y="58" width="52" height="32" fill="#cfbdb1"/><rect x="60" y="0" width="6" height="20" fill="#cfc1b5"/><path d="M18 0L59 6 51.400 59 9 41.600Z" fill="#7a5a3c"/><path d="M21 2.500L56 8 49 55.500 12.500 40Z" fill="#c8c4bc"/><path d="M25 6L53 11 47 51 17 38.500Z" fill="#5c5e5a"/><path d="M28 12L50 16M27 19L48 24M25 26L46 32M23 33L44 40M34 8L27 40M43 11L37 46" stroke="#d0d0c8" stroke-width="1.500"/><path d="M52 64C46 34 56 5 84 5 110 5 122 32 113 58 110 46 104 38 96 36L70 36C64 42 60 52 58 66Z" fill="url(#gd2)"/><ellipse cx="86" cy="56" rx="24.500" ry="27" fill="url(#gd1)"/><path d="M60 46C60 30 70 24 84 24 100 24 110 30 112 44 106 36 98 33 88 34 78 33 68 36 60 46Z" fill="#dcc6a0"/><ellipse cx="71" cy="46.500" rx="6" ry="2.200" fill="#5a443c"/><ellipse cx="96.500" cy="47.200" rx="6" ry="2.200" fill="#5a443c"/><ellipse cx="84" cy="58" rx="4" ry="5" fill="#d4a090"/><ellipse cx="86" cy="70" rx="8" ry="2.400" fill="#a8685c"/><path d="M40 90L48 74C52 66 60 62 68 62 74 64 74 70 70 76L66 90Z" fill="#c89480"/><path d="M60 64C66 62 72 66 70 72" fill="none" stroke="#b07c68" stroke-width="1.200"/><path d="M94 90L100 83 146 84 150 90Z" fill="#d42424"/></g></g></svg>
<div class="a" style="left:1442.1px;top:267.9px;width:156.9px;height:18.9px;background:rgba(49,49,49,0.8);border-radius:4px;border-top-right-radius:0;border-bottom-right-radius:0;"></div><svg class="a" style="left:1444.3px;top:270.09999999999997px;" width="14" height="14" viewBox="0 0 14 14"><ellipse cx="6.6" cy="5.8" rx="2.9" ry="5" fill="#ff5a5a"/><path d="M3.2 8.4C3.6 10.6 5 11.4 6.6 11.4 8.2 11.4 9.6 10.6 10 8.4" fill="none" stroke="#ff5a5a" stroke-width="1"/><rect x="5.9" y="10.8" width="1.4" height="1.6" fill="#ff5a5a"/><rect x="4" y="12" width="5.4" height="1.1" rx="0.5" fill="#ff5a5a"/><path d="M12.8 0.3L0.4 13.3" stroke="#4a4e50" stroke-width="2.6"/><path d="M13.1 0.1L0.1 13.5" stroke="#ff5a5a" stroke-width="1.25"/></svg><span class="t" style="left:1462.90px;top:272px;font-size:12.4px;color:#fff;transform:scaleX(1.0148);">Наталія Якименко-Те...</span>
<svg class="a" style="left:1279.1px;top:289.0px;overflow:hidden;" width="159.6" height="89.6" viewBox="0 0 160 90" preserveAspectRatio="none"><defs><filter id="bg20" x="-5%" y="-5%" width="110%" height="110%"><feGaussianBlur stdDeviation="1.0"/></filter><clipPath id="kg20"><rect width="160" height="90"/></clipPath></defs><g clip-path="url(#kg20)"><rect width="160" height="90" fill="#222222"/><g filter="url(#bg20)"><defs><radialGradient id="ge1" cx="0.5" cy="0.4" r="0.7"><stop offset="0" stop-color="#d4ac9c"/><stop offset="0.6" stop-color="#c8a090"/><stop offset="1" stop-color="#a88070"/></radialGradient><radialGradient id="ge2" cx="0.5" cy="0.25" r="0.8"><stop offset="0" stop-color="#e0d4c0"/><stop offset="0.55" stop-color="#c8b8a0"/><stop offset="1" stop-color="#a89880"/></radialGradient></defs><rect width="160" height="90" fill="#dcdcde"/><rect x="0" y="0" width="7.500" height="90" fill="#e1e1e1"/><rect x="7" y="0" width="38.500" height="90" fill="#b89664"/><rect x="7" y="0" width="7" height="90" fill="#d8c49c"/><path d="M20 0V90M28 0V90M36 0V90" stroke="#ac8a58" stroke-width="1.200"/><rect x="61" y="0" width="10" height="90" fill="#babcbe"/><rect x="46" y="0" width="8" height="90" fill="#e8e8ea"/><rect x="121" y="0" width="18" height="90" fill="#c8aa78"/><rect x="121" y="0" width="2.500" height="90" fill="#b09060"/><rect x="123" y="49" width="16" height="2.400" fill="#a88a58"/><rect x="138.600" y="0" width="21.400" height="90" fill="#bec0bc"/><path d="M132.600 27.500H140.700V45H132.600Z" fill="#4a78b0"/><rect x="134" y="36" width="6.700" height="9" fill="#d8c040"/><rect x="131.500" y="61" width="10.300" height="7" fill="#d4b030"/><path d="M54 86C48 50 56 6 86 4.600 114 5 124 50 118 86Z" fill="url(#ge2)"/><path d="M22 90C32 80 48 75 64 74H106C120 75 128 82 133 90Z" fill="#888886"/><ellipse cx="85.200" cy="50" rx="20" ry="24" fill="url(#ge1)"/><path d="M62 44C60 20 72 8 86 8 102 8 112 22 108 46 104 34 98 28 90 29 80 28 68 32 62 44Z" fill="#d0c2aa"/><path d="M84 8C82 16 78 24 70 32" fill="none" stroke="#b8a890" stroke-width="1.400"/><path d="M61 36.500H105.500" stroke="#141010" stroke-width="2.200"/><path d="M63 36.600H84L80 47.500C74 50.500 67 48.500 65 44Z" fill="#a8845c" fill-opacity="0.800" stroke="#141010" stroke-width="2"/><path d="M88 36.600H104.500L103 44C100 48.500 94 50.500 89.500 47.500Z" fill="#a8845c" fill-opacity="0.800" stroke="#141010" stroke-width="2"/><ellipse cx="85.500" cy="55" rx="4" ry="3" fill="#bc9080"/><ellipse cx="85.500" cy="64.500" rx="6.500" ry="1.600" fill="#98685e"/></g></g></svg>
<div class="a" style="left:1282.1px;top:358.0px;width:145.4px;height:18.9px;background:rgba(49,49,49,0.8);border-radius:4px;"></div><svg class="a" style="left:1284.3px;top:360.2px;" width="14" height="14" viewBox="0 0 14 14"><ellipse cx="6.6" cy="5.8" rx="2.9" ry="5" fill="#ff5a5a"/><path d="M3.2 8.4C3.6 10.6 5 11.4 6.6 11.4 8.2 11.4 9.6 10.6 10 8.4" fill="none" stroke="#ff5a5a" stroke-width="1"/><rect x="5.9" y="10.8" width="1.4" height="1.6" fill="#ff5a5a"/><rect x="4" y="12" width="5.4" height="1.1" rx="0.5" fill="#ff5a5a"/><path d="M12.8 0.3L0.4 13.3" stroke="#4a4e50" stroke-width="2.6"/><path d="M13.1 0.1L0.1 13.5" stroke="#ff5a5a" stroke-width="1.25"/></svg><span class="t" style="left:1302.90px;top:362px;font-size:12.4px;color:#fff;transform:scaleX(1.0500);">Лариса Іванченкова</span>
<svg class="a" style="left:1439.1px;top:289.0px;overflow:hidden;" width="159.6" height="89.6" viewBox="0 0 160 90" preserveAspectRatio="none"><defs><filter id="bg21" x="-5%" y="-5%" width="110%" height="110%"><feGaussianBlur stdDeviation="1.0"/></filter><clipPath id="kg21"><rect width="160" height="90"/></clipPath></defs><g clip-path="url(#kg21)"><rect width="160" height="90" fill="#222222"/><g filter="url(#bg21)"><defs><radialGradient id="gf1" cx="0.5" cy="0.4" r="0.7"><stop offset="0" stop-color="#e4b8a8"/><stop offset="0.6" stop-color="#d8a898"/><stop offset="1" stop-color="#b88878"/></radialGradient><linearGradient id="gf2" x1="0" y1="0" x2="1" y2="0"><stop offset="0" stop-color="#f2ecde"/><stop offset="0.4" stop-color="#e4d0aa"/><stop offset="1" stop-color="#d4bc90"/></linearGradient></defs><rect width="160" height="90" fill="#e0dde6"/><path d="M29.600 90L40 84 56 80H102L118 82 128.800 90Z" fill="#1c1c1c"/><rect x="106" y="65" width="6" height="7" fill="#c84a30"/><path d="M55 88C52 62 60 29 82 27.500 102 28 108 56 106 88Z" fill="url(#gf2)"/><ellipse cx="80.500" cy="58" rx="14.600" ry="19" fill="url(#gf1)"/><path d="M64 52C66 36 74 30 82 30 92 30 98 38 100 52 94 44 88 40 80 41.500 72 42 68 46 64 52Z" fill="#e4d0a8"/><ellipse cx="84" cy="66.700" rx="6" ry="2.200" fill="#a85068"/><ellipse cx="74.500" cy="54.500" rx="6.400" ry="4.600" fill="none" stroke="#b8a0b8" stroke-width="0.900"/><ellipse cx="90" cy="54.500" rx="6.400" ry="4.600" fill="none" stroke="#b8a0b8" stroke-width="0.900"/><ellipse cx="74.500" cy="54.500" rx="2.600" ry="1" fill="#6a5058"/><ellipse cx="90" cy="54.500" rx="2.600" ry="1" fill="#6a5058"/><ellipse cx="82.500" cy="60" rx="2.600" ry="2" fill="#cc9888"/></g></g></svg>
<svg class="a" style="left:1444.6px;top:289px;" width="36" height="32" viewBox="0 0 36 32"><ellipse cx="17" cy="7" rx="17" ry="4.6" fill="#a8703e"/><path d="M7 7C7 1 11 0 17 0 23 0 27 1 27 7Z" fill="#bd8450"/><rect x="7" y="5.4" width="20" height="1.8" fill="#6a4426"/><ellipse cx="17" cy="16" rx="12.4" ry="10.4" fill="#3db3d3"/><path d="M6 14C8 10 12 10 13 13 12 17 9 19 6.6 19ZM22 9C26 10 28 13 28 16 25 15 23 12 22 9Z" fill="#6ab04c"/><circle cx="12.6" cy="13.6" r="1.7" fill="#111"/><circle cx="21.6" cy="13.6" r="1.7" fill="#111"/><path d="M15 17.4C16.2 18.8 18 18.8 19.2 17.4" fill="none" stroke="#111" stroke-width="0.8"/><ellipse cx="3.6" cy="21" rx="2.8" ry="3.6" fill="#3db3d3"/><ellipse cx="30.4" cy="21" rx="2.8" ry="3.6" fill="#3db3d3"/><path d="M9 23H25L23 30H11Z" fill="#d8e4ea"/><path d="M16 23H18.4L19 29 17.2 30.6 15.4 29Z" fill="#2b4f9a"/><ellipse cx="12.6" cy="30" rx="3" ry="1.8" fill="#2e9cc0"/><ellipse cx="21.6" cy="30" rx="3" ry="1.8" fill="#2e9cc0"/><rect x="1.4" y="25" width="5.4" height="5.6" rx="0.8" fill="#7a2e22"/></svg>
<div class="a" style="left:1442.1px;top:358.0px;width:127.9px;height:18.9px;background:rgba(49,49,49,0.8);border-radius:4px;"></div><svg class="a" style="left:1444.3px;top:360.2px;" width="14" height="14" viewBox="0 0 14 14"><ellipse cx="6.6" cy="5.8" rx="2.9" ry="5" fill="#ff5a5a"/><path d="M3.2 8.4C3.6 10.6 5 11.4 6.6 11.4 8.2 11.4 9.6 10.6 10 8.4" fill="none" stroke="#ff5a5a" stroke-width="1"/><rect x="5.9" y="10.8" width="1.4" height="1.6" fill="#ff5a5a"/><rect x="4" y="12" width="5.4" height="1.1" rx="0.5" fill="#ff5a5a"/><path d="M12.8 0.3L0.4 13.3" stroke="#4a4e50" stroke-width="2.6"/><path d="M13.1 0.1L0.1 13.5" stroke="#ff5a5a" stroke-width="1.25"/></svg><span class="t" style="left:1462.90px;top:362px;font-size:12.4px;color:#fff;transform:scaleX(1.0730);">Mariia Pokolodna</span>
<div class="a" style="left:1279.1px;top:379.1px;width:159.6px;height:89.6px;background:#222222;"></div>
<svg class="a" style="left:1323.5px;top:388.3px;border-radius:6px;overflow:hidden" width="71.8" height="71.8" viewBox="0 0 72 72"><defs><filter id="ba30" x="-5%" y="-5%" width="110%" height="110%"><feGaussianBlur stdDeviation="0.8"/></filter><clipPath id="ka30"><rect width="72" height="72"/></clipPath></defs><g clip-path="url(#ka30)"><g filter="url(#ba30)"><defs><radialGradient id="ta1" cx="0.5" cy="0.4" r="0.7"><stop offset="0" stop-color="#e8bcac"/><stop offset="0.6" stop-color="#dcac9c"/><stop offset="1" stop-color="#bc8878"/></radialGradient><radialGradient id="ta2" cx="0.55" cy="0.25" r="0.8"><stop offset="0" stop-color="#cca674"/><stop offset="0.55" stop-color="#a8804e"/><stop offset="1" stop-color="#86603a"/></radialGradient></defs><rect width="72" height="72" fill="#c0baa6"/><path d="M0 0H72V9L40 6 0 9Z" fill="#e4e4e0"/><path d="M0 9L40 6 72 9V11L40 8 0 11Z" fill="#aca692"/><path d="M12 50C8 36 10 14 24 6 36 -1 54 3 60 18 64 30 62 46 58 56 52 62 46 60 44 54L24 52C20 58 14 56 12 50Z" fill="url(#ta2)"/><path d="M0 72V52H10C13 56 14 62 20 66L30 72Z" fill="#b42c48"/><path d="M24 60L34 72H50L52 60Z" fill="#d4a494"/><ellipse cx="37" cy="37.500" rx="16" ry="20.500" fill="url(#ta1)" transform="rotate(6 37 37)"/><path d="M20 34C20 18 30 10 42 12 52 14 58 24 56 38 52 26 46 20 38 22 30 22 24 26 20 34Z" fill="#b48c58"/><path d="M40 12C36 16 30 20 22 26" fill="none" stroke="#8a6438" stroke-width="1.200"/><ellipse cx="29.500" cy="31.500" rx="3.400" ry="1.500" fill="#5a6278"/><ellipse cx="45" cy="33.500" rx="3.400" ry="1.500" fill="#5a6278"/><ellipse cx="36" cy="41" rx="2.800" ry="2" fill="#d09888"/><ellipse cx="35.500" cy="48.500" rx="5.400" ry="1.800" fill="#c07078"/></g></g></svg>
<div class="a" style="left:1282.1px;top:448.1px;width:127.9px;height:18.9px;background:rgba(49,49,49,0.8);border-radius:4px;"></div><svg class="a" style="left:1284.3px;top:450.29999999999995px;" width="14" height="14" viewBox="0 0 14 14"><ellipse cx="6.6" cy="5.8" rx="2.9" ry="5" fill="#ff5a5a"/><path d="M3.2 8.4C3.6 10.6 5 11.4 6.6 11.4 8.2 11.4 9.6 10.6 10 8.4" fill="none" stroke="#ff5a5a" stroke-width="1"/><rect x="5.9" y="10.8" width="1.4" height="1.6" fill="#ff5a5a"/><rect x="4" y="12" width="5.4" height="1.1" rx="0.5" fill="#ff5a5a"/><path d="M12.8 0.3L0.4 13.3" stroke="#4a4e50" stroke-width="2.6"/><path d="M13.1 0.1L0.1 13.5" stroke="#ff5a5a" stroke-width="1.25"/></svg><span class="t" style="left:1302.90px;top:452px;font-size:12.4px;color:#fff;transform:scaleX(1.0215);">Tania Colesnicova</span>
<svg class="a" style="left:1439.1px;top:379.1px;overflow:hidden;" width="159.6" height="89.6" viewBox="0 0 160 90" preserveAspectRatio="none"><defs><filter id="bg31" x="-5%" y="-5%" width="110%" height="110%"><feGaussianBlur stdDeviation="1.0"/></filter><clipPath id="kg31"><rect width="160" height="90"/></clipPath></defs><g clip-path="url(#kg31)"><rect width="160" height="90" fill="#222222"/><g filter="url(#bg31)"><defs><radialGradient id="gh1" cx="0.5" cy="0.35" r="0.7"><stop offset="0" stop-color="#d0ac98"/><stop offset="0.6" stop-color="#c4a08c"/><stop offset="1" stop-color="#a07c68"/></radialGradient></defs><rect width="160" height="90" fill="#d4ccc8"/><rect x="100" y="0" width="60" height="90" fill="#dad4d0"/><rect x="0" y="24" width="12" height="66" fill="#c8b4ac"/><rect x="0" y="0" width="60" height="14" fill="#ccc4be"/><rect x="60" y="0" width="2.600" height="18" fill="#6a7078"/><rect x="0" y="14.400" width="47" height="8.200" fill="#4a2c20"/><path d="M12 22.500H16.500V33.400H13.500ZM41 22.500H44.500L43.800 33.400H41.600Z" fill="#5a3828"/><rect x="32" y="1" width="15" height="13.400" fill="#c8b890"/><rect x="34" y="3" width="11" height="9" fill="#d8ccac"/><rect x="20" y="5.700" width="13" height="8.700" fill="#a8b8d0"/><rect x="22" y="7.500" width="9" height="5.500" fill="#e8ecf2"/><rect x="3" y="6.700" width="6" height="7.700" fill="#d8d8d8"/><rect x="11" y="6.700" width="5" height="7.700" fill="#c4c4c4"/><path d="M45 90C46 70 48 56 52 44 56 28 62 10 80 7.300 98 8 104 28 106 42 110 58 124 70 137.500 90Z" fill="#141816"/><path d="M72 90L74 61H92L94 90Z" fill="#e0e0e4"/><path d="M80 90L83 66 86 90Z" fill="#2a2a2e"/><rect x="131" y="74" width="3.800" height="6" fill="#2a4a50"/><ellipse cx="80.500" cy="44" rx="12.600" ry="17.400" fill="url(#gh1)"/><path d="M67 38C68 24 74 18 82 18 90 18 95 26 94 40 90 30 86 26 80 27 74 28 70 32 67 38Z" fill="#161a18"/><path d="M72 38.500C74 39.500 77 39.500 79 38.500M84 38.500C86 39.500 89 39.500 91 38.500" fill="none" stroke="#3a2a24" stroke-width="1.200"/><ellipse cx="81" cy="52.500" rx="5" ry="1.700" fill="#8a5a50"/><ellipse cx="81" cy="46" rx="2.400" ry="2.600" fill="#b8907c"/></g></g></svg>
<div class="a" style="left:1442.1px;top:448.1px;width:118.9px;height:18.9px;background:rgba(49,49,49,0.8);border-radius:4px;"></div><svg class="a" style="left:1444.3px;top:450.29999999999995px;" width="14" height="14" viewBox="0 0 14 14"><ellipse cx="6.6" cy="5.8" rx="2.9" ry="5" fill="#ff5a5a"/><path d="M3.2 8.4C3.6 10.6 5 11.4 6.6 11.4 8.2 11.4 9.6 10.6 10 8.4" fill="none" stroke="#ff5a5a" stroke-width="1"/><rect x="5.9" y="10.8" width="1.4" height="1.6" fill="#ff5a5a"/><rect x="4" y="12" width="5.4" height="1.1" rx="0.5" fill="#ff5a5a"/><path d="M12.8 0.3L0.4 13.3" stroke="#4a4e50" stroke-width="2.6"/><path d="M13.1 0.1L0.1 13.5" stroke="#ff5a5a" stroke-width="1.25"/></svg><span class="t" style="left:1462.90px;top:452px;font-size:12.4px;color:#fff;transform:scaleX(1.0211);">Iryna Solonytska</span>
<div class="a" style="left:1279.7px;top:470px;width:158.7px;height:88px;background:#222222;"></div>
<svg class="a" style="left:1323.5px;top:478.3px;border-radius:6px;overflow:hidden" width="71.8" height="71.8" viewBox="0 0 72 72"><defs><filter id="ba40" x="-5%" y="-5%" width="110%" height="110%"><feGaussianBlur stdDeviation="0.8"/></filter><clipPath id="ka40"><rect width="72" height="72"/></clipPath></defs><g clip-path="url(#ka40)"><g filter="url(#ba40)"><defs><radialGradient id="la1" cx="0.5" cy="0.4" r="0.7"><stop offset="0" stop-color="#dcae96"/><stop offset="0.6" stop-color="#d0a088"/><stop offset="1" stop-color="#aa7c66"/></radialGradient><linearGradient id="la2" x1="0" y1="0" x2="1" y2="1"><stop offset="0" stop-color="#242c1a"/><stop offset="0.5" stop-color="#3c4428"/><stop offset="1" stop-color="#5a5c34"/></linearGradient></defs><rect width="72" height="72" fill="url(#la2)"/><ellipse cx="10" cy="20" rx="12" ry="16" fill="#2a321e"/><ellipse cx="52" cy="8" rx="10" ry="8" fill="#4e5634"/><path d="M58 0H72V34L62 28Z" fill="#9a9a62"/><path d="M64 8L72 4V24L66 22Z" fill="#d0c894"/><path d="M49.600 52L72 42V72H50Z" fill="#e8dc80"/><path d="M54 56L72 50V60Z" fill="#f4eca0"/><path d="M19 14C20 4 30 0 38 3 46 8 54 22 60 34 64 42 66 48 60 56 54 50 48 44 44 38L22 30Z" fill="#5a4030"/><path d="M44 14C50 24 58 36 62 46" fill="none" stroke="#7a5a44" stroke-width="1.600"/><path d="M3.800 72C6 58 12 44 22 33.500L36 34 46 39C50 50 52 62 51.700 72Z" fill="#b4c4cc"/><path d="M14 72L27 42 31 56 22 72Z" fill="#98a8b4"/><path d="M10.300 72L13 58 19 56 16.900 72Z" fill="#f0ece8"/><path d="M24 30L30 22 36 30 33 42 25 46Z" fill="#cc9c84"/><ellipse cx="28.900" cy="18.300" rx="8.800" ry="12.600" fill="url(#la1)" transform="rotate(-6 29 18)"/><path d="M19.500 17C20 7 28 3 36 6 40 9 42 16 40 24 38 16 33 12 27 12 23 12 21 14 19.500 17Z" fill="#4e3628"/><ellipse cx="25.500" cy="17.500" rx="2" ry="0.900" fill="#3a2a22"/><ellipse cx="32.500" cy="17" rx="2" ry="0.900" fill="#3a2a22"/><ellipse cx="28" cy="25.200" rx="3" ry="1.200" fill="#a8625a"/></g></g></svg>
<div class="a" style="left:1282.1px;top:538.2px;width:83.9px;height:18.9px;background:rgba(49,49,49,0.8);border-radius:4px;"></div><span class="t" style="left:1284.70px;top:542px;font-size:12.4px;color:#fff;transform:scaleX(1.0140);">Lada Salenko</span>
<div class="a" style="left:1439.1px;top:469.2px;width:159.6px;height:89.6px;background:#222222;"></div>
<svg class="a" style="left:1493px;top:469.2px" width="51" height="89.6" viewBox="0 0 51 90" preserveAspectRatio="none"><defs><filter id="bpv"><feGaussianBlur stdDeviation="0.9"/></filter><clipPath id="kpv"><rect width="51" height="90"/></clipPath></defs><g clip-path="url(#kpv)"><g filter="url(#bpv)"><defs><radialGradient id="ip1" cx="0.5" cy="0.3" r="0.8"><stop offset="0" stop-color="#e4baa6"/><stop offset="0.6" stop-color="#dcb09c"/><stop offset="1" stop-color="#bc8c78"/></radialGradient><radialGradient id="ip2" cx="0.6" cy="0.3" r="0.8"><stop offset="0" stop-color="#d4ac78"/><stop offset="0.6" stop-color="#b88c5c"/><stop offset="1" stop-color="#967044"/></radialGradient></defs><rect width="51" height="90" fill="#d4d0c4"/><rect x="0" y="0" width="51" height="14" fill="#dad6cc"/><rect x="40" y="0" width="6.600" height="62" fill="#b8b4a8"/><rect x="46.600" y="0" width="4.400" height="90" fill="#cecabe"/><path d="M0 90V86L8 85 10 90ZM51 90V85L42 85 40 90Z" fill="#1a8a5a"/><ellipse cx="26" cy="66" rx="17.600" ry="27" fill="url(#ip1)"/><path d="M4.500 68C0 48 8 32 26 32 44 32 52 46 47 66 44 54 40 48 34 46 26 44 16 46 11 52 7 56 5.500 62 4.500 68Z" fill="url(#ip2)"/><path d="M10 44C18 36 32 36 42 44" fill="none" stroke="#dcb888" stroke-width="1.400"/><circle cx="16.200" cy="57" r="6.500" fill="none" stroke="#7a4428" stroke-width="1.400"/><circle cx="35.600" cy="57" r="6.500" fill="none" stroke="#7a4428" stroke-width="1.400"/><path d="M22.700 56H29.100" stroke="#7a4428" stroke-width="1.200"/><ellipse cx="16.500" cy="57" rx="2.800" ry="1.100" fill="#5a4034"/><ellipse cx="35.500" cy="57" rx="2.800" ry="1.100" fill="#5a4034"/><ellipse cx="26" cy="66" rx="3" ry="3.400" fill="#d09c88"/><ellipse cx="26" cy="76" rx="6" ry="1.600" fill="#b87a70"/></g></g></svg>
<div class="a" style="left:1442.1px;top:538.2px;width:117.9px;height:18.9px;background:rgba(49,49,49,0.8);border-radius:4px;"></div><svg class="a" style="left:1444.3px;top:540.4000000000001px;" width="14" height="14" viewBox="0 0 14 14"><ellipse cx="6.6" cy="5.8" rx="2.9" ry="5" fill="#ff5a5a"/><path d="M3.2 8.4C3.6 10.6 5 11.4 6.6 11.4 8.2 11.4 9.6 10.6 10 8.4" fill="none" stroke="#ff5a5a" stroke-width="1"/><rect x="5.9" y="10.8" width="1.4" height="1.6" fill="#ff5a5a"/><rect x="4" y="12" width="5.4" height="1.1" rx="0.5" fill="#ff5a5a"/><path d="M12.8 0.3L0.4 13.3" stroke="#4a4e50" stroke-width="2.6"/><path d="M13.1 0.1L0.1 13.5" stroke="#ff5a5a" stroke-width="1.25"/></svg><span class="t" style="left:1462.90px;top:542px;font-size:12.4px;color:#fff;transform:scaleX(1.0184);">iPhone (Ксения)</span>
<div class="a" style="left:1279.1px;top:559.3px;width:159.6px;height:89.6px;background:#222222;"></div>
<span class="t" style="left:1306.40px;top:596px;font-size:15.2px;font-weight:700;color:#fff;transform:scaleX(0.9630);">Гутарева Юлія</span>
<div class="a" style="left:1282.1px;top:628.3px;width:111.9px;height:18.9px;background:#2e2e2e;border-radius:4px;"></div><svg class="a" style="left:1284.3px;top:630.5px;" width="14" height="14" viewBox="0 0 14 14"><ellipse cx="6.6" cy="5.8" rx="2.9" ry="5" fill="#ff5a5a"/><path d="M3.2 8.4C3.6 10.6 5 11.4 6.6 11.4 8.2 11.4 9.6 10.6 10 8.4" fill="none" stroke="#ff5a5a" stroke-width="1"/><rect x="5.9" y="10.8" width="1.4" height="1.6" fill="#ff5a5a"/><rect x="4" y="12" width="5.4" height="1.1" rx="0.5" fill="#ff5a5a"/><path d="M12.8 0.3L0.4 13.3" stroke="#4a4e50" stroke-width="2.6"/><path d="M13.1 0.1L0.1 13.5" stroke="#ff5a5a" stroke-width="1.25"/></svg><span class="t" style="left:1302.90px;top:632px;font-size:12.4px;color:#fff;transform:scaleX(1.0396);">Гутарева Юлія</span>
<div class="a" style="left:1439.1px;top:559.3px;width:159.6px;height:89.6px;background:#222222;"></div>
<svg class="a" style="left:1483.8px;top:568.6px;border-radius:6px;overflow:hidden" width="71.8" height="71.8" viewBox="0 0 72 72"><defs><filter id="ba51" x="-5%" y="-5%" width="110%" height="110%"><feGaussianBlur stdDeviation="0.8"/></filter><clipPath id="ka51"><rect width="72" height="72"/></clipPath></defs><g clip-path="url(#ka51)"><g filter="url(#ba51)"><defs><linearGradient id="da1" x1="0" y1="0" x2="0" y2="1"><stop offset="0" stop-color="#84b0e0"/><stop offset="0.3" stop-color="#b0c8e8"/><stop offset="0.46" stop-color="#d8d6e6"/><stop offset="0.555" stop-color="#f0c8b8"/><stop offset="0.61" stop-color="#c8c0cc"/><stop offset="0.7" stop-color="#9ab0c4"/><stop offset="1" stop-color="#a8b8c6"/></linearGradient></defs><rect width="72" height="72" fill="url(#da1)"/><rect x="16.600" y="40.800" width="4.400" height="10" fill="#e4e4ec"/><rect x="53.600" y="47" width="5" height="9" fill="#e6e6ee"/><rect x="60" y="50" width="4" height="6" fill="#d8dae4"/><rect x="8" y="46" width="5" height="6" fill="#ccd0dc"/><path d="M0 72V48L3 42 6 52 9 40 12 54 15 44 18 58 21 50 22 72Z" fill="#2c5a50"/><path d="M62 72L66 52 68.500 60 72 45V72Z" fill="#2c5a50"/><path d="M22 72V62L30 58 26 72ZM50 72L54 60 62 64V72Z" fill="#6a7a78"/><path d="M17.600 72C17.600 58 22 50 30 48H44C50 50 54.700 58 54.700 72Z" fill="#d0a48c"/><path d="M26 72L28 54 36 58 43.800 53 45 72Z" fill="#ecd0c8"/><path d="M26 72C24 50 26 24 36 19.600 46 18 49 34 49 62L44 64 42 44 34 44 33 72Z" fill="#5c4038"/><ellipse cx="38.300" cy="32" rx="6.200" ry="9.200" fill="#c49880"/><path d="M30 34C29 24 32 20.500 37 20 42 20 45 24 45 30 42 25 38 23.500 34 25 32 27 31 30 30 34Z" fill="#523830"/><ellipse cx="40" cy="37.500" rx="2.600" ry="1" fill="#f0e0dc"/></g></g></svg>
<div class="a" style="left:1442.1px;top:628.3px;width:156.9px;height:18.9px;background:rgba(49,49,49,0.8);border-radius:4px;border-top-right-radius:0;border-bottom-right-radius:0;"></div><svg class="a" style="left:1444.3px;top:630.5px;" width="14" height="14" viewBox="0 0 14 14"><ellipse cx="6.6" cy="5.8" rx="2.9" ry="5" fill="#ff5a5a"/><path d="M3.2 8.4C3.6 10.6 5 11.4 6.6 11.4 8.2 11.4 9.6 10.6 10 8.4" fill="none" stroke="#ff5a5a" stroke-width="1"/><rect x="5.9" y="10.8" width="1.4" height="1.6" fill="#ff5a5a"/><rect x="4" y="12" width="5.4" height="1.1" rx="0.5" fill="#ff5a5a"/><path d="M12.8 0.3L0.4 13.3" stroke="#4a4e50" stroke-width="2.6"/><path d="M13.1 0.1L0.1 13.5" stroke="#ff5a5a" stroke-width="1.25"/></svg><span class="t" style="left:1462.90px;top:632px;font-size:12.4px;color:#fff;transform:scaleX(1.0570);">Дар'я Красуцька МТ...</span>
<div class="a" style="left:1279.1px;top:649.4px;width:159.6px;height:89.00000000000011px;background:#222222;border-bottom-left-radius:6px;"></div>
<div class="a" style="left:1439.1px;top:649.4px;width:160.0px;height:89.00000000000011px;background:#222222;border-bottom-right-radius:6px;"></div>
<span class="t" style="left:1292.90px;top:686px;font-size:15.2px;font-weight:700;color:#fff;transform:scaleX(0.9643);">Дарина  Федосе…</span>
<span class="t" style="left:1453.30px;top:686px;font-size:15.2px;font-weight:700;color:#fff;transform:scaleX(0.9684);">Плахотнюк  Нас…</span>
<div class="a" style="left:1282.1px;top:718.4px;width:138.7px;height:18.9px;background:#2e2e2e;border-radius:4px;"></div><svg class="a" style="left:1284.3px;top:720.5999999999999px;" width="14" height="14" viewBox="0 0 14 14"><ellipse cx="6.6" cy="5.8" rx="2.9" ry="5" fill="#ff5a5a"/><path d="M3.2 8.4C3.6 10.6 5 11.4 6.6 11.4 8.2 11.4 9.6 10.6 10 8.4" fill="none" stroke="#ff5a5a" stroke-width="1"/><rect x="5.9" y="10.8" width="1.4" height="1.6" fill="#ff5a5a"/><rect x="4" y="12" width="5.4" height="1.1" rx="0.5" fill="#ff5a5a"/><path d="M12.8 0.3L0.4 13.3" stroke="#4a4e50" stroke-width="2.6"/><path d="M13.1 0.1L0.1 13.5" stroke="#ff5a5a" stroke-width="1.25"/></svg><span class="t" style="left:1302.90px;top:722px;font-size:12.4px;color:#fff;transform:scaleX(1.0441);">Дарина Федосенко</span>
<div class="a" style="left:1442.1px;top:718.4px;width:129.1px;height:18.9px;background:#2e2e2e;border-radius:4px;"></div><svg class="a" style="left:1444.3px;top:720.5999999999999px;" width="14" height="14" viewBox="0 0 14 14"><ellipse cx="6.6" cy="5.8" rx="2.9" ry="5" fill="#ff5a5a"/><path d="M3.2 8.4C3.6 10.6 5 11.4 6.6 11.4 8.2 11.4 9.6 10.6 10 8.4" fill="none" stroke="#ff5a5a" stroke-width="1"/><rect x="5.9" y="10.8" width="1.4" height="1.6" fill="#ff5a5a"/><rect x="4" y="12" width="5.4" height="1.1" rx="0.5" fill="#ff5a5a"/><path d="M12.8 0.3L0.4 13.3" stroke="#4a4e50" stroke-width="2.6"/><path d="M13.1 0.1L0.1 13.5" stroke="#ff5a5a" stroke-width="1.25"/></svg><span class="t" style="left:1462.90px;top:722px;font-size:12.4px;color:#fff;transform:scaleX(1.0310);">Плахотнюк Настя</span>
<div class="a" style="left:1277.7px;top:468px;width:162.7px;height:92px;border:2px solid #23e69a;"></div>
<div class="a" style="left:1402px;top:739.5px;width:74px;height:33.5px;background:#0b0b0b;border-radius:0 0 4px 4px;"></div>
<svg class="a" style="left:1432px;top:751px;" width="15" height="10" viewBox="0 0 15 10"><polyline points="1,1.2 7.4,7.8 13.8,1.2" fill="none" stroke="#8f8fa6" stroke-width="1.7"/></svg>
<!-- sec_zbar -->
<div class="a" style="left:0px;top:801px;width:1600px;height:59px;background:#000000;"></div>
<svg class="a" style="left:40px;top:809px;" width="25" height="28" viewBox="0 0 25 28"><rect x="9.2" y="2.6" width="7.2" height="14" rx="3.6" fill="none" stroke="#fff" stroke-width="1.4"/><path d="M5.6 12.8C5.6 17.6 8.8 20 12.8 20 16.8 20 20 17.6 20 12.8" fill="none" stroke="#fff" stroke-width="1.4"/><path d="M12.8 20V25.2M8.6 25.6H17" stroke="#fff" stroke-width="1.4"/><path d="M24 2L0.8 25" stroke="#000" stroke-width="4"/><path d="M24 1.6L0.8 24.6" stroke="#f0305c" stroke-width="2.3"/></svg>
<svg class="a" style="left:79px;top:819.9px;" width="10" height="7" viewBox="0 0 10 7"><polyline points="1.2,5.4 5,1.6 8.8,5.4" fill="none" stroke="#e6e6e6" stroke-width="1.4"/></svg>
<span class="t" style="left:41.30px;top:840px;font-size:11.6px;color:#d2d2d2;">Звук</span>
<svg class="a" style="left:133px;top:815.6px;" width="25" height="15" viewBox="0 0 25 15"><rect x="0.8" y="0.9" width="16.6" height="13.2" rx="3.4" fill="none" stroke="#fff" stroke-width="1.5"/><path d="M18.6 6.2L23.6 2.4V12.6L18.6 8.8Z" fill="none" stroke="#fff" stroke-width="1.4" stroke-linejoin="round"/></svg>
<svg class="a" style="left:176.8px;top:819.9px;" width="10" height="7" viewBox="0 0 10 7"><polyline points="1.2,5.4 5,1.6 8.8,5.4" fill="none" stroke="#e6e6e6" stroke-width="1.4"/></svg>
<span class="t" style="left:128.60px;top:840px;font-size:11.6px;color:#d2d2d2;transform:scaleX(0.9767);">Видео</span>
<svg class="a" style="left:434px;top:814.6px;" width="20" height="18" viewBox="0 0 20 18"><circle cx="6.4" cy="4" r="3" fill="none" stroke="#fff" stroke-width="1.4"/><circle cx="14.4" cy="5.6" r="2.4" fill="none" stroke="#fff" stroke-width="1.4"/><path d="M1 14.6C1 11.4 3.2 9.8 6.4 9.8 9.6 9.8 11.8 11.4 11.8 14.6 11.8 16.4 10.6 17 9 17H3.8C2.2 17 1 16.4 1 14.6Z" fill="none" stroke="#fff" stroke-width="1.4"/><path d="M13 10.6C16.6 10 18.8 11.8 18.8 14.6 18.8 16.2 17.8 17 16.4 17H13.6" fill="none" stroke="#fff" stroke-width="1.4"/></svg>
<span class="t" style="left:460.00px;top:816px;font-size:11.8px;color:#c9c9d6;transform:scaleX(1.0476);">40</span>
<svg class="a" style="left:492px;top:819.9px;" width="10" height="7" viewBox="0 0 10 7"><polyline points="1.2,5.4 5,1.6 8.8,5.4" fill="none" stroke="#e6e6e6" stroke-width="1.4"/></svg>
<span class="t" style="left:415.50px;top:840px;font-size:11.6px;color:#d2d2d2;transform:scaleX(1.0376);">Участники</span>
<svg class="a" style="left:542.5px;top:812px;" width="23" height="22" viewBox="0 0 23 22"><path d="M7.4 4.4V3.6A3 3 0 0 1 10.4 0.8H19A3 3 0 0 1 22 3.8V9.6A3 3 0 0 1 19 12.6H18.4" fill="none" stroke="#fff" stroke-width="1.4"/><path d="M4 5.2H14.4A3.2 3.2 0 0 1 17.6 8.4V14A3.2 3.2 0 0 1 14.4 17.2H9.4L5.6 21V17.2H4A3.2 3.2 0 0 1 0.8 14V8.4A3.2 3.2 0 0 1 4 5.2Z" fill="#000" stroke="#fff" stroke-width="1.4" stroke-linejoin="round"/><circle cx="5.6" cy="11.2" r="1.1" fill="#fff"/><circle cx="9.2" cy="11.2" r="1.1" fill="#fff"/><circle cx="12.8" cy="11.2" r="1.1" fill="#fff"/></svg>
<svg class="a" style="left:581.8px;top:819.9px;" width="10" height="7" viewBox="0 0 10 7"><polyline points="1.2,5.4 5,1.6 8.8,5.4" fill="none" stroke="#e6e6e6" stroke-width="1.4"/></svg>
<span class="t" style="left:544.50px;top:840px;font-size:11.6px;color:#d2d2d2;transform:scaleX(0.9615);">Чат</span>
<svg class="a" style="left:636px;top:813.4px;" width="24" height="20" viewBox="0 0 24 20"><path d="M11.6 18.8L2.6 9.6C-0.4 6 1.2 1.2 5.6 1 8 1 9.8 2.2 10.8 4.2 12.4 1.6 15.6 0.6 19 1.8 23 3.6 23.6 8.4 20.6 11.4Z" fill="none" stroke="#fff" stroke-width="1.4" stroke-linejoin="round" transform="rotate(-8 12 10)"/></svg>
<svg class="a" style="left:680.8px;top:819.9px;" width="10" height="7" viewBox="0 0 10 7"><polyline points="1.2,5.4 5,1.6 8.8,5.4" fill="none" stroke="#e6e6e6" stroke-width="1.4"/></svg>
<span class="t" style="left:607.00px;top:840px;font-size:11.6px;color:#d2d2d2;transform:scaleX(1.0261);">Отреагировать</span>
<div class="a" style="left:735px;top:813px;width:24.3px;height:19.6px;background:#20e37f;border-radius:4px;"></div>
<svg class="a" style="left:741px;top:816px;" width="12" height="14" viewBox="0 0 12 14"><path d="M6 12.4V2.6M1.6 6.6L6 2.2 10.4 6.6" fill="none" stroke="#000" stroke-width="2.2"/></svg>
<span class="t" style="left:714.50px;top:840px;font-size:11.6px;color:#d2d2d2;transform:scaleX(1.0226);">Поделиться</span>
<svg class="a" style="left:829.5px;top:813px;" width="22" height="20" viewBox="0 0 22 20"><path d="M1 9V5A4 4 0 0 1 5 1H9" fill="none" stroke="#fff" stroke-width="1.4"/><circle cx="16.4" cy="4.6" r="3.6" fill="none" stroke="#fff" stroke-width="1.4"/><circle cx="4.6" cy="15.4" r="3.6" fill="none" stroke="#fff" stroke-width="1.4"/><path d="M20.4 11V15A4 4 0 0 1 16.4 19H12.4" fill="none" stroke="#fff" stroke-width="1.4"/></svg>
<span class="t" style="left:804.50px;top:840px;font-size:11.6px;color:#d2d2d2;transform:scaleX(1.0683);">Приложения</span>
<svg class="a" style="left:913.6px;top:811.8px;" width="23" height="23" viewBox="0 0 23 23"><circle cx="11.4" cy="11.2" r="10.4" fill="none" stroke="#fff" stroke-width="1.4"/><circle cx="11.4" cy="11.2" r="4.6" fill="#fff"/></svg>
<span class="t" style="left:905.00px;top:840px;font-size:11.6px;color:#d2d2d2;transform:scaleX(1.0312);">Запись</span>
<svg class="a" style="left:1012px;top:813.6px;" width="25" height="19" viewBox="0 0 25 19"><path d="M10 17.2H4A3 3 0 0 1 1 14.2V4A3 3 0 0 1 4 1H20A3 3 0 0 1 23 4V12" fill="none" stroke="#fff" stroke-width="1.5"/><rect x="11.6" y="14.4" width="13" height="4.4" rx="2.2" fill="#fff"/></svg>
<span class="t" style="left:973.25px;top:840px;font-size:11.6px;color:#d2d2d2;transform:scaleX(1.0630);">Доски сообщений</span>
<svg class="a" style="left:1140.4px;top:811.8px;" width="24" height="23" viewBox="0 0 24 23"><circle cx="11.7" cy="11.2" r="10.6" fill="none" stroke="#fff" stroke-width="1.4"/><circle cx="11.6" cy="6.2" r="1.3" fill="#fff"/><path d="M9.4 9.6H12.2V16M9 16.4H15" fill="none" stroke="#fff" stroke-width="1.5"/></svg>
<span class="t" style="left:1091.25px;top:840px;font-size:11.6px;color:#d2d2d2;transform:scaleX(1.0394);">Данные конференции</span>
<svg class="a" style="left:1262px;top:811.2px;" width="24" height="24" viewBox="0 0 24 24"><circle cx="11.9" cy="11.7" r="10.9" fill="none" stroke="#fff" stroke-width="1.4"/><circle cx="6.6" cy="11.7" r="1.2" fill="#fff"/><circle cx="11.9" cy="11.7" r="1.2" fill="#fff"/><circle cx="17.2" cy="11.7" r="1.2" fill="#fff"/></svg>
<span class="t" style="left:1230.00px;top:840px;font-size:11.6px;color:#d2d2d2;transform:scaleX(1.0630);">Дополнительно</span>
<svg class="a" style="left:1540.5px;top:811px;" width="25" height="24" viewBox="0 0 25 24"><path d="M9 1H23V19.4L17.6 22.6V4.2L22.4 1.4" fill="none" stroke="#f0145a" stroke-width="1.4" stroke-linejoin="round"/><circle cx="8.4" cy="5.2" r="2.2" fill="none" stroke="#fff" stroke-width="1.3"/><path d="M6.4 9.4C4.4 10.6 3.4 12.6 2.8 15L4.8 15.6 6 13V16.4L2 22.4 4.2 23.4 8 18.6 10.8 23 12.8 21.8 10.2 16.4V13.2L13 14.6 13.8 12.8 10.6 10.2C9.4 8.8 7.6 8.6 6.4 9.4Z" fill="none" stroke="#fff" stroke-width="1.2" stroke-linejoin="round"/></svg>
<span class="t" style="left:1534.50px;top:840px;font-size:11.6px;color:#d2d2d2;">Выйти</span>
<!-- sec_taskbar -->
<div class="a" style="left:0px;top:860px;width:1600px;height:40px;background:#eeeeee;"></div>
<div class="a" style="left:0px;top:860px;width:48px;height:40px;background:#f3f3f3;"></div>
<div class="a" style="left:4.2px;top:840.2px;width:39.4px;height:19.6px;background:#ffffff;border:1px solid #6a6a6a;"></div>
<span class="t" style="left:10.50px;top:844px;font-size:12.2px;color:#575757;transform:scaleX(1.0050);">Пуск</span>
<svg class="a" style="left:16px;top:871.8px;" width="16" height="15.8" viewBox="0 0 16 15.8"><path d="M0 2.2L6.6 1.2V7.4H0ZM7.6 1.1L16 0V7.4H7.6ZM0 8.4H6.6V14.6L0 13.6ZM7.6 8.4H16V15.8L7.6 14.7Z" fill="#d6ca62"/></svg>
<svg class="a" style="left:61px;top:869px;" width="22" height="22" viewBox="0 0 22 22"><circle cx="13.4" cy="8.6" r="7.2" fill="none" stroke="#0a0a0a" stroke-width="2"/><path d="M8.2 13.8L1 21" stroke="#0a0a0a" stroke-width="2.4"/></svg>
<div class="a" style="left:101.6px;top:872.3px;width:1px;height:15.2px;background:#111;"></div>
<div class="a" style="left:105.4px;top:872.3px;width:1px;height:15.2px;background:#111;"></div>
<svg class="a" style="left:127px;top:869px;" width="24" height="21" viewBox="0 0 24 21"><defs><linearGradient id="cp1" x1="0" y1="0" x2="1" y2="1"><stop offset="0" stop-color="#2aa6f0"/><stop offset="0.5" stop-color="#3a6af0"/><stop offset="1" stop-color="#8a4ae0"/></linearGradient><linearGradient id="cp2" x1="0" y1="0" x2="0.6" y2="1"><stop offset="0" stop-color="#28b8a0"/><stop offset="0.45" stop-color="#d8d840"/><stop offset="1" stop-color="#f06a3a"/></linearGradient><linearGradient id="cp3" x1="0" y1="0" x2="1" y2="1"><stop offset="0" stop-color="#c85ae0"/><stop offset="1" stop-color="#f0608a"/></linearGradient></defs><path d="M8 2.4C8.6 0.8 9.8 0.2 11.4 0.2H16.6C18.4 0.2 19.4 1.2 19.8 2.6L21.4 8H16.4L14.6 3.4C14.2 2.6 13.6 2.4 12.8 2.4Z" fill="url(#cp1)"/><path d="M5.4 3.4C6 1.6 7.2 1.2 8.6 1.2H12L8.6 12.6C8.2 14 7.4 14.6 6.2 14.6H2.6C0.8 14.6 -0.2 13 0.4 11.2Z" fill="url(#cp2)"/><path d="M15.4 6.4H21C23 6.4 24 8 23.4 9.8L20.8 17.6C20.2 19.4 19 20 17.6 20H12.4L15.4 8.4Z" fill="url(#cp3)"/><path d="M8.6 20.8C7.2 20.8 6.2 20 5.8 18.6L4.6 14.4H9.4L10.8 18.2C11.2 19 11.8 19.2 12.6 19.2H15.8C15 20.4 14 20.8 12.8 20.8Z" fill="#f0603a"/></svg>
<svg class="a" style="left:169.6px;top:871.8px;" width="22" height="15.8" viewBox="0 0 22 15.8"><rect x="0.5" y="0.5" width="21" height="14.8" fill="#3aa0e8" stroke="#1a78c8" stroke-width="1"/><rect x="2" y="2" width="18" height="11.8" fill="#62b8f0"/><circle cx="7" cy="6" r="3.2" fill="#f0f4f8"/><path d="M7 6V2.8A3.2 3.2 0 0 1 10.2 6Z" fill="#f0b030"/><rect x="12.6" y="3" width="5.6" height="1.2" fill="#fff"/><rect x="12.6" y="5.6" width="5.6" height="1.2" fill="#fff"/><rect x="12.6" y="8.2" width="5.6" height="1.2" fill="#fff"/><rect x="3" y="11" width="8" height="1.4" fill="#e8d080"/></svg>
<svg class="a" style="left:209.5px;top:879px;" width="22" height="11.4" viewBox="0 0 22 11.4"><path d="M0.4 5.8L15 0.4 21.6 3.2V6.4L7.4 11 0.4 8.6Z" fill="#c9c9c9"/><path d="M0.4 5.8L7.4 8.2 21.6 3.2 15 0.4Z" fill="#e4e4e4"/><path d="M0.4 5.8V8.6L7.4 11V8.2Z" fill="#8f8f8f"/><rect x="2" y="7.4" width="1.6" height="1.2" fill="#3ad05a"/></svg>
<span class="t" style="left:237.10px;top:874px;font-size:12.4px;color:#111;transform:scaleX(0.9138);">Нов3 ...</span>
<div class="a" style="left:207.2px;top:897.7px;width:74.9px;height:2.3px;background:#c9bd33;"></div>
<svg class="a" style="left:294px;top:868.5px;" width="23" height="22.6" viewBox="0 0 23 22.6"><path d="M5 0.6H16L22 6.6V21.8H5Z" fill="#fdfdff" stroke="#7a9ad8" stroke-width="1"/><path d="M16 0.6V6.6H22" fill="#dfe8f8" stroke="#7a9ad8" stroke-width="0.9"/><path d="M8 9.6H19M8 12.2H19M8 14.8H19M8 17.4H19" stroke="#9ab4e4" stroke-width="1"/><rect x="0.4" y="3.4" width="11" height="9.6" fill="#2b5fc0" stroke="#1c468f" stroke-width="0.6"/></svg><span class="t" style="left:296.00px;top:873px;font-size:8.4px;font-weight:700;font-style:italic;color:#fff;transform:scaleX(1.0090);">W</span>
<span class="t" style="left:321.50px;top:874px;font-size:12.4px;color:#111;transform:scaleX(0.9546);">Фото-...</span>
<div class="a" style="left:291.1px;top:897.7px;width:74.9px;height:2.3px;background:#c9bd33;"></div>
<svg class="a" style="left:380px;top:869px;" width="21.4" height="20.4" viewBox="0 0 21.4 20.4"><rect width="21.4" height="20.4" rx="1.4" fill="#c4141c"/><rect x="0.8" y="0.8" width="19.8" height="9" fill="#d83038" opacity="0.55"/><path d="M4.4 15.6C7 14.4 9.4 10.4 10 5.4 10.2 4 11.4 4 11.4 5.4 11.4 9 13.6 12.6 17.2 13.6 18.4 14 18 15 16.8 14.8 12.6 14 8 14.6 5 16.6 4 17.2 3.4 16.2 4.4 15.6Z" fill="none" stroke="#fff" stroke-width="1.1"/></svg>
<svg class="a" style="left:422.8px;top:870.3px;" width="21" height="19.6" viewBox="0 0 21 19.6"><path d="M4 0.6H17A3.6 3.6 0 0 1 20.6 4.2V15.4A3.6 3.6 0 0 1 17 19H4A3.6 3.6 0 0 1 0.4 15.4V4.2A3.6 3.6 0 0 1 4 0.6Z" fill="#d01018"/><path d="M1.6 9.4C5.4 5 9.6 3.6 14 3.6H20V15.4H14C9.6 15.4 5.4 13.8 1.6 9.4Z" fill="#fff"/><circle cx="14.6" cy="9.4" r="4.8" fill="#e8202a"/><circle cx="15.8" cy="8" r="1.6" fill="#ff8a8a"/></svg>
<svg class="a" style="left:461px;top:868px;" width="24" height="23.4" viewBox="0 0 24 23.4"><circle cx="11.8" cy="11.6" r="11.4" fill="#fff"/><path d="M11.8 0.2A11.4 11.4 0 0 1 21.7 5.9H11.8A5.7 5.7 0 0 0 6.9 8.7L2 3.9A11.4 11.4 0 0 1 11.8 0.2Z" fill="#e33b2e"/><path d="M21.7 5.9A11.4 11.4 0 0 1 12.6 23L17 14.5A5.7 5.7 0 0 0 16.7 8.7 5.7 5.7 0 0 0 11.8 5.9Z" fill="#f7c516"/><path d="M12.6 23A11.4 11.4 0 0 1 2 3.9L6.9 14.5A5.7 5.7 0 0 0 11.8 17.3 5.7 5.7 0 0 0 14.6 16.6Z" fill="#2aa04a"/><circle cx="11.8" cy="11.6" r="5" fill="#fff"/><circle cx="11.8" cy="11.6" r="4" fill="#2f7de8"/></svg>
<svg class="a" style="left:471.8px;top:878.6px;" width="15.2" height="14.8" viewBox="0 0 15.2 14.8"><circle cx="7.6" cy="7.4" r="7.4" fill="#3a3440"/><ellipse cx="7.6" cy="6" rx="3" ry="3.6" fill="#caa090"/><path d="M3.6 5C4 2.6 5.6 1.6 7.6 1.6 9.6 1.6 11.2 2.6 11.6 5 10.4 4 9 3.6 7.6 3.6 6.2 3.6 4.8 4 3.6 5Z" fill="#2a1c1c"/><path d="M2 13C3 10.6 5 10 7.6 10 10.2 10 12.2 10.6 13.2 13 11.6 14.4 9.8 14.8 7.6 14.8 5.4 14.8 3.6 14.4 2 13Z" fill="#6a4a8a"/></svg>
<span class="t" style="left:489.20px;top:874px;font-size:12.4px;color:#111;transform:scaleX(0.9151);">Вхідні...</span>
<div class="a" style="left:458.8px;top:897.7px;width:74.2px;height:2.3px;background:#c9bd33;"></div>
<svg class="a" style="left:546.9px;top:868.5px;" width="22.6" height="22.6" viewBox="0 0 22.6 22.6"><ellipse cx="11.3" cy="11.3" rx="11.1" ry="11.1" fill="#e0141e"/><ellipse cx="11.3" cy="11.3" rx="4.9" ry="8.4" fill="#eeeeee"/><path d="M11.3 0.2A11.1 11.1 0 0 1 11.3 22.4 8 11.1 0 0 0 11.3 0.2Z" fill="#b00c18" opacity="0.45"/></svg>
<svg class="a" style="left:587.4px;top:868px;" width="23.4" height="23" viewBox="0 0 23.4 23"><defs><radialGradient id="ff1" cx="0.7" cy="0.2" r="0.9"><stop offset="0" stop-color="#ffe226"/><stop offset="0.5" stop-color="#ff8a16"/><stop offset="1" stop-color="#e31587"/></radialGradient></defs><path d="M21.6 7.4C22.8 10.6 22.6 15 20.2 18 17.4 21.8 12.2 23.4 7.8 21.6 3 19.8 0 14.8 0.8 9.8 1.2 7.2 2.4 5.4 3.8 4 3.8 5 4.2 6 4.8 6.6 6 4.6 8.4 3.6 9.4 1.4 10 0.2 14.6 0.6 16.6 3 17.4 1.8 18 1.2 18.2 0.4 20 2.4 21 4.8 21.6 7.4Z" fill="url(#ff1)"/><circle cx="12.2" cy="12.4" r="5.6" fill="#7a3ce0"/><path d="M6.4 10.4C8 8.4 11 8.6 12.8 10 11 10 9.8 11 9.8 12.6 9.8 14.6 12 16 14.4 15.4 11.6 18.4 6.6 17 6 13 5.8 12 6 11 6.4 10.4Z" fill="#ff9a1a"/><path d="M12.4 7C14.4 6 17 7.6 17.6 9.6 16.4 8.4 14.6 8.2 13.4 8.8Z" fill="#4a1c9a"/></svg>
<svg class="a" style="left:627.2px;top:869px;" width="21.4" height="22.2" viewBox="0 0 21.4 22.2"><path d="M10.6 0.6C17.4 0.6 20.8 3.4 20.8 9.6 20.8 15.8 17.4 18.4 11.2 18.4L7.4 21.8V18C3 17.2 0.6 14.6 0.6 9.6 0.6 3.4 4 0.6 10.6 0.6Z" fill="#7b5cf0" stroke="#fff" stroke-width="1"/><path d="M6.6 5.2C7.2 4.6 8 4.8 8.4 5.6L9 7C9.2 7.6 9 8 8.4 8.4 8.8 10 10.4 11.6 12 12.2 12.4 11.6 13 11.4 13.6 11.8L14.8 12.6C15.4 13 15.4 13.8 14.8 14.4 14 15.2 13 15.2 12 14.8 9 13.6 6.8 11 5.8 8 5.6 7 5.8 6 6.6 5.2Z" fill="#fff"/><path d="M11.4 4.6C13.8 4.8 15.6 6.6 15.8 9M11.4 6.6C12.8 6.8 13.8 7.8 13.9 9" fill="none" stroke="#fff" stroke-width="0.9"/></svg>
<span class="t" style="left:654.20px;top:874px;font-size:12.4px;color:#111;transform:scaleX(0.8964);">Rakut...</span>
<div class="a" style="left:624px;top:897.7px;width:73.6px;height:2.3px;background:#c9bd33;"></div>
<svg class="a" style="left:712.3px;top:869.4px;" width="21.4" height="21.4" viewBox="0 0 21.4 21.4"><circle cx="10.7" cy="10.7" r="10.6" fill="#2d9fd9"/><path d="M4.4 10.6L16.4 5.8C17 5.6 17.4 6 17.2 6.8L15.2 16C15 16.8 14.4 17 13.8 16.6L10.6 14.2 9 15.8C8.6 16.2 8.2 16 8.2 15.4L8.4 12.6 14.2 7.6 7 12 4.4 11.2C3.8 11 3.8 10.8 4.4 10.6Z" fill="#fff"/></svg>
<svg class="a" style="left:750px;top:868.4px;" width="24" height="23.4" viewBox="0 0 24 23.4"><defs><linearGradient id="ed1" x1="0" y1="0" x2="1" y2="0"><stop offset="0" stop-color="#1c7ad0"/><stop offset="1" stop-color="#36c96a"/></linearGradient></defs><path d="M0.6 12C0.6 5.4 5.6 0.4 12.2 0.4 18.6 0.4 23.6 4.6 23.6 10.4 23.6 14.2 20.8 16.4 17.8 16.4 15.6 16.4 14.4 15.4 14.6 14.2 15.6 13.2 16 11.8 15.6 10.2 15 8 13 6.6 10.4 6.8 6.4 7 3.4 10.2 3.6 14.6 1.8 13.8 0.6 13.2 0.6 12Z" fill="url(#ed1)"/><path d="M3.6 14.6C3.2 10 6.4 6.8 10.4 6.8 8 8 7 10.6 7.4 13.4 8 17.6 11.4 20.6 16 20.6 18.4 20.6 20.4 19.8 22 18.4 20 21.4 16.4 23 12.4 23 6.6 23 1.4 18.6 0.6 12 1.2 13.4 2.2 14.2 3.6 14.6Z" fill="#145ea8"/><path d="M7.4 13.4C7 10.6 8 8 10.4 6.8 13 6.6 15 8 15.6 10.2 14.4 9.2 12.6 9.2 11.4 10.4 10 11.8 10.4 14.6 12.4 16.4 14.4 18.2 18 18.6 21 17 19.6 19.2 17.4 20.6 14.8 20.6 11 20.6 8 17.6 7.4 13.4Z" fill="#2a8ee0"/></svg>
<span class="t" style="left:778.00px;top:874px;font-size:12.4px;color:#111;transform:scaleX(0.9412);">Участ...</span>
<div class="a" style="left:747.8px;top:897.7px;width:74.2px;height:2.3px;background:#c9bd33;"></div>
<svg class="a" style="left:832.8px;top:868px;" width="24" height="23.4" viewBox="0 0 24 23.4"><defs><linearGradient id="zg832" x1="0" y1="0" x2="1" y2="1"><stop offset="0" stop-color="#3a8bff"/><stop offset="1" stop-color="#0b4fe0"/></linearGradient></defs><path d="M12 0.4C20.6 0.4 23.6 3.4 23.6 11.7 23.6 20 20.6 23 12 23 3.4 23 0.4 20 0.4 11.7 0.4 3.4 3.4 0.4 12 0.4Z" fill="url(#zg832)"/></svg><span class="t" style="left:837.40px;top:876px;font-size:10.4px;font-weight:700;color:#fff;transform:scaleX(1.0383);">zm</span>
<span class="t" style="left:861.00px;top:874px;font-size:12.4px;color:#111;transform:scaleX(0.9636);">Zoom...</span>
<div class="a" style="left:830.8px;top:897.7px;width:74.2px;height:2.3px;background:#c9bd33;"></div>
<div class="a" style="left:908.9px;top:860px;width:82.1px;height:40px;background:#fafafa;"></div>
<svg class="a" style="left:915px;top:868px;" width="24" height="23.4" viewBox="0 0 24 23.4"><defs><linearGradient id="zg915" x1="0" y1="0" x2="1" y2="1"><stop offset="0" stop-color="#3a8bff"/><stop offset="1" stop-color="#0b4fe0"/></linearGradient></defs><path d="M12 0.4C20.6 0.4 23.6 3.4 23.6 11.7 23.6 20 20.6 23 12 23 3.4 23 0.4 20 0.4 11.7 0.4 3.4 3.4 0.4 12 0.4Z" fill="url(#zg915)"/></svg><span class="t" style="left:919.60px;top:876px;font-size:10.4px;font-weight:700;color:#fff;transform:scaleX(1.0383);">zm</span>
<span class="t" style="left:942.60px;top:874px;font-size:12.4px;color:#111;transform:scaleX(0.9636);">Zoom...</span>
<div class="a" style="left:908.9px;top:897.7px;width:82.1px;height:2.3px;background:#c9bd33;"></div>
<svg class="a" style="left:999.6px;top:868px;" width="25" height="24" viewBox="0 0 25 24"><path d="M12.8 1.2C18.8 1.2 23.6 5.8 23.6 11.6 23.6 17.4 18.8 22 12.8 22 10.8 22 9 21.6 7.4 20.6L1.4 22.4 3.2 16.8C2.4 15.2 2 13.4 2 11.6 2 5.8 6.8 1.2 12.8 1.2Z" fill="#f4f8f4" stroke="#1f8f4e" stroke-width="2"/><path d="M8.8 6.4C9.4 6 10 6.200 10.400 6.800L11.2 8.600C11.400 9.200 11.200 9.600 10.600 10.200 11.200 11.800 12.800 13.400 14.400 14 15 13.400 15.400 13.200 16 13.400L17.800 14.200C18.400 14.600 18.600 15.200 18.200 15.800 17.400 17 16.200 17.400 15 17.200 11.200 16.400 8.200 13.400 7.400 9.600 7.200 8.400 7.800 7.200 8.800 6.400Z" fill="#1f8f4e"/></svg>
<svg class="a" style="left:1043.9px;top:868px;" width="18.8" height="23.6" viewBox="0 0 18.8 23.6"><rect x="0.4" y="0.4" width="18" height="22.8" rx="1.4" fill="#7a7e84" stroke="#5e6268" stroke-width="0.8"/><rect x="2" y="2" width="14.8" height="4.6" fill="#4ab8f0"/><rect x="2" y="8.2" width="4" height="2.9" fill="#dfe2e6"/><rect x="2" y="11.899999999999999" width="4" height="2.9" fill="#dfe2e6"/><rect x="2" y="15.6" width="4" height="2.9" fill="#dfe2e6"/><rect x="2" y="19.3" width="4" height="2.9" fill="#dfe2e6"/><rect x="7" y="8.2" width="4" height="2.9" fill="#dfe2e6"/><rect x="7" y="11.899999999999999" width="4" height="2.9" fill="#dfe2e6"/><rect x="7" y="15.6" width="4" height="2.9" fill="#dfe2e6"/><rect x="7" y="19.3" width="4" height="2.9" fill="#dfe2e6"/><rect x="12" y="8.2" width="4" height="2.9" fill="#dfe2e6"/><rect x="12" y="11.899999999999999" width="4" height="2.9" fill="#dfe2e6"/><rect x="12" y="15.6" width="4" height="2.9" fill="#1c4a9a"/><rect x="12" y="19.3" width="4" height="2.9" fill="#1c4a9a"/></svg>
<svg class="a" style="left:1082.8px;top:868.6px;" width="22" height="22.4" viewBox="0 0 22 22.4"><path d="M6.4 0.8C8 0.8 9 1.2 10 1.800 16.400 1 21 5.600 20.200 11.800 21 13 21.400 14.200 21.400 15.600 21.400 19.200 18.600 21.800 15.200 21.800 13.800 21.800 12.800 21.400 11.800 20.800 5.400 21.600 0.800 17 1.600 10.800 1 9.800 0.600 8.400 0.600 7 0.600 3.400 3.200 0.800 6.400 0.800Z" fill="#18a8ea"/></svg><span class="t" style="left:1088.60px;top:874px;font-size:15.6px;font-weight:700;color:#fff;">S</span>
<div class="a" style="left:1123.8px;top:868.8px;width:74.4px;height:23px;background:#000000;"></div>
<div class="a" style="left:1198px;top:875px;width:3px;height:10px;background:#000000;"></div>
<span class="t" style="left:1129.00px;top:875px;font-size:13.2px;color:#fff;transform:scaleX(0.9769);">Від мережі</span>
<div class="a" style="left:1206.5px;top:870.3px;width:50px;height:20px;background:#ffffff;"></div>
<div class="a" style="left:1208.6px;top:872.6px;width:44.8px;height:14.8px;background:#1e9a4a;"></div>
<span class="t" style="left:1213.50px;top:875px;font-size:12.8px;color:#fff;transform:scaleX(1.0661);">100%</span>
<svg class="a" style="left:1263px;top:872.6px;" width="9" height="15.6" viewBox="0 0 9 15.6"><path d="M2.4 0.400V4.400M6.600 0.400V4.400" stroke="#fff" stroke-width="1.4"/><path d="M0.600 4.400H8.400V8.400C8.400 10.400 6.800 11.400 4.500 11.400 2.200 11.400 0.600 10.400 0.600 8.400Z" fill="#fff"/><path d="M4.500 11.400V15.400" stroke="#fff" stroke-width="1.6"/></svg>
<svg class="a" style="left:1283px;top:876px;" width="13" height="9" viewBox="0 0 13 9"><polyline points="1,7.6 6.4,1.6 11.800,7.6" fill="none" stroke="#111" stroke-width="1.3"/></svg>
<svg class="a" style="left:1306.6px;top:871.6px;" width="12" height="16.6" viewBox="0 0 12 16.6"><rect x="3" y="0.400" width="6" height="10.400" rx="3" fill="#111"/><path d="M0.800 7.400C0.800 11 3 12.800 6 12.800 9 12.800 11.200 11 11.200 7.400" fill="none" stroke="#111" stroke-width="1.100"/><path d="M6 12.800V15.600M3.200 16H8.800" stroke="#111" stroke-width="1.100"/></svg>
<svg class="a" style="left:1331px;top:871.6px;" width="14" height="16.6" viewBox="0 0 14 16.6"><rect x="3.400" y="0.500" width="5.600" height="4" fill="none" stroke="#111" stroke-width="1"/><rect x="1.600" y="4.500" width="9.200" height="11.400" rx="1" fill="none" stroke="#111" stroke-width="1.100"/><path d="M8.400 13.400L10.400 15.600 13.600 11.400" fill="none" stroke="#111" stroke-width="1.100"/><rect x="8" y="11" width="5" height="5.600" fill="#eeeeee" opacity="0"/></svg>
<svg class="a" style="left:1355.6px;top:875px;" width="13.4" height="13.2" viewBox="0 0 13.4 13.2"><path d="M0.600 9C2 4 6.400 0.800 12.400 0.600" fill="none" stroke="#111" stroke-width="1.200"/><path d="M3.800 10.600C4.800 7 8 4.600 12.400 4.400" fill="none" stroke="#111" stroke-width="1.200"/><path d="M7 12C7.600 9.800 9.600 8.400 12.400 8.200" fill="none" stroke="#111" stroke-width="1.200"/><circle cx="11.400" cy="11.600" r="1.500" fill="#111"/></svg>
<svg class="a" style="left:1376.5px;top:874.6px;" width="17" height="10.8" viewBox="0 0 17 10.8"><rect x="4.600" y="1.400" width="11" height="8" fill="none" stroke="#111" stroke-width="1.200"/><rect x="6.400" y="3.200" width="7.400" height="4.400" fill="#111"/><rect x="15.800" y="3.800" width="1.200" height="3.200" fill="#111"/><path d="M0.400 2.600H3.400M0.400 5.800H3.400M1.800 0.400V2.600M1.800 5.800V9" stroke="#111" stroke-width="1.100"/><rect x="0.800" y="2.600" width="2.200" height="3.200" fill="#111"/></svg>
<svg class="a" style="left:1401px;top:871.6px;" width="16" height="16.8" viewBox="0 0 16 16.8"><path d="M7.400 0.600C9.400 2 11.600 2.600 14 2.800V8C14 12 11.400 14.600 7.400 16.200 3.400 14.600 0.800 12 0.800 8V2.800C3.200 2.600 5.400 2 7.400 0.600Z" fill="#fff" stroke="#111" stroke-width="1.200"/><path d="M7.400 0.800V16M0.800 8.200H14" stroke="#111" stroke-width="1"/><path d="M11.600 9.400L15.800 16.600H7.400Z" fill="#f7b500"/><rect x="11.200" y="11.800" width="0.900" height="2.600" fill="#111"/><rect x="11.200" y="15" width="0.900" height="0.900" fill="#111"/></svg>
<svg class="a" style="left:1424.9px;top:874px;" width="17" height="13.4" viewBox="0 0 17 13.4"><path d="M0.600 4.600H3.400L7 1V12.400L3.400 8.800H0.600Z" fill="none" stroke="#111" stroke-width="1.100" stroke-linejoin="round"/><path d="M9.400 4.400C10.400 5.800 10.400 7.600 9.400 9M11.600 2.600C13.400 5 13.400 8.400 11.600 10.800M13.800 0.800C16.600 4.400 16.600 9 13.800 12.600" fill="none" stroke="#111" stroke-width="1.100"/></svg>
<span class="t" style="left:1452.40px;top:875px;font-size:11.6px;color:#222;transform:scaleX(0.9422);">УКР</span>
<span class="t" style="left:1500.50px;top:865px;font-size:11.6px;color:#222;transform:scaleX(0.9198);">10:18</span>
<span class="t" style="left:1487.30px;top:883px;font-size:11.6px;color:#222;transform:scaleX(0.9284);">16.05.2025</span>
<svg class="a" style="left:1558.7px;top:871.8px;" width="17" height="16.4" viewBox="0 0 17 16.4"><path d="M0.600 0.600H15.400V11.400H12.400L9.400 14.600V11.400H0.600Z" fill="#111"/><path d="M3 3.600H13M3 6H13M3 8.400H8.400" stroke="#eee" stroke-width="1"/><circle cx="12.800" cy="12.200" r="3.200" fill="#111" stroke="#eee" stroke-width="0.800"/><path d="M11.400 12.200L12.400 13.400 14.400 11" fill="none" stroke="#eee" stroke-width="0.800"/></svg>
<div class="a" style="left:1595.4px;top:864px;width:1px;height:32px;background:#bdbdbd;"></div>
</body>
</html>
